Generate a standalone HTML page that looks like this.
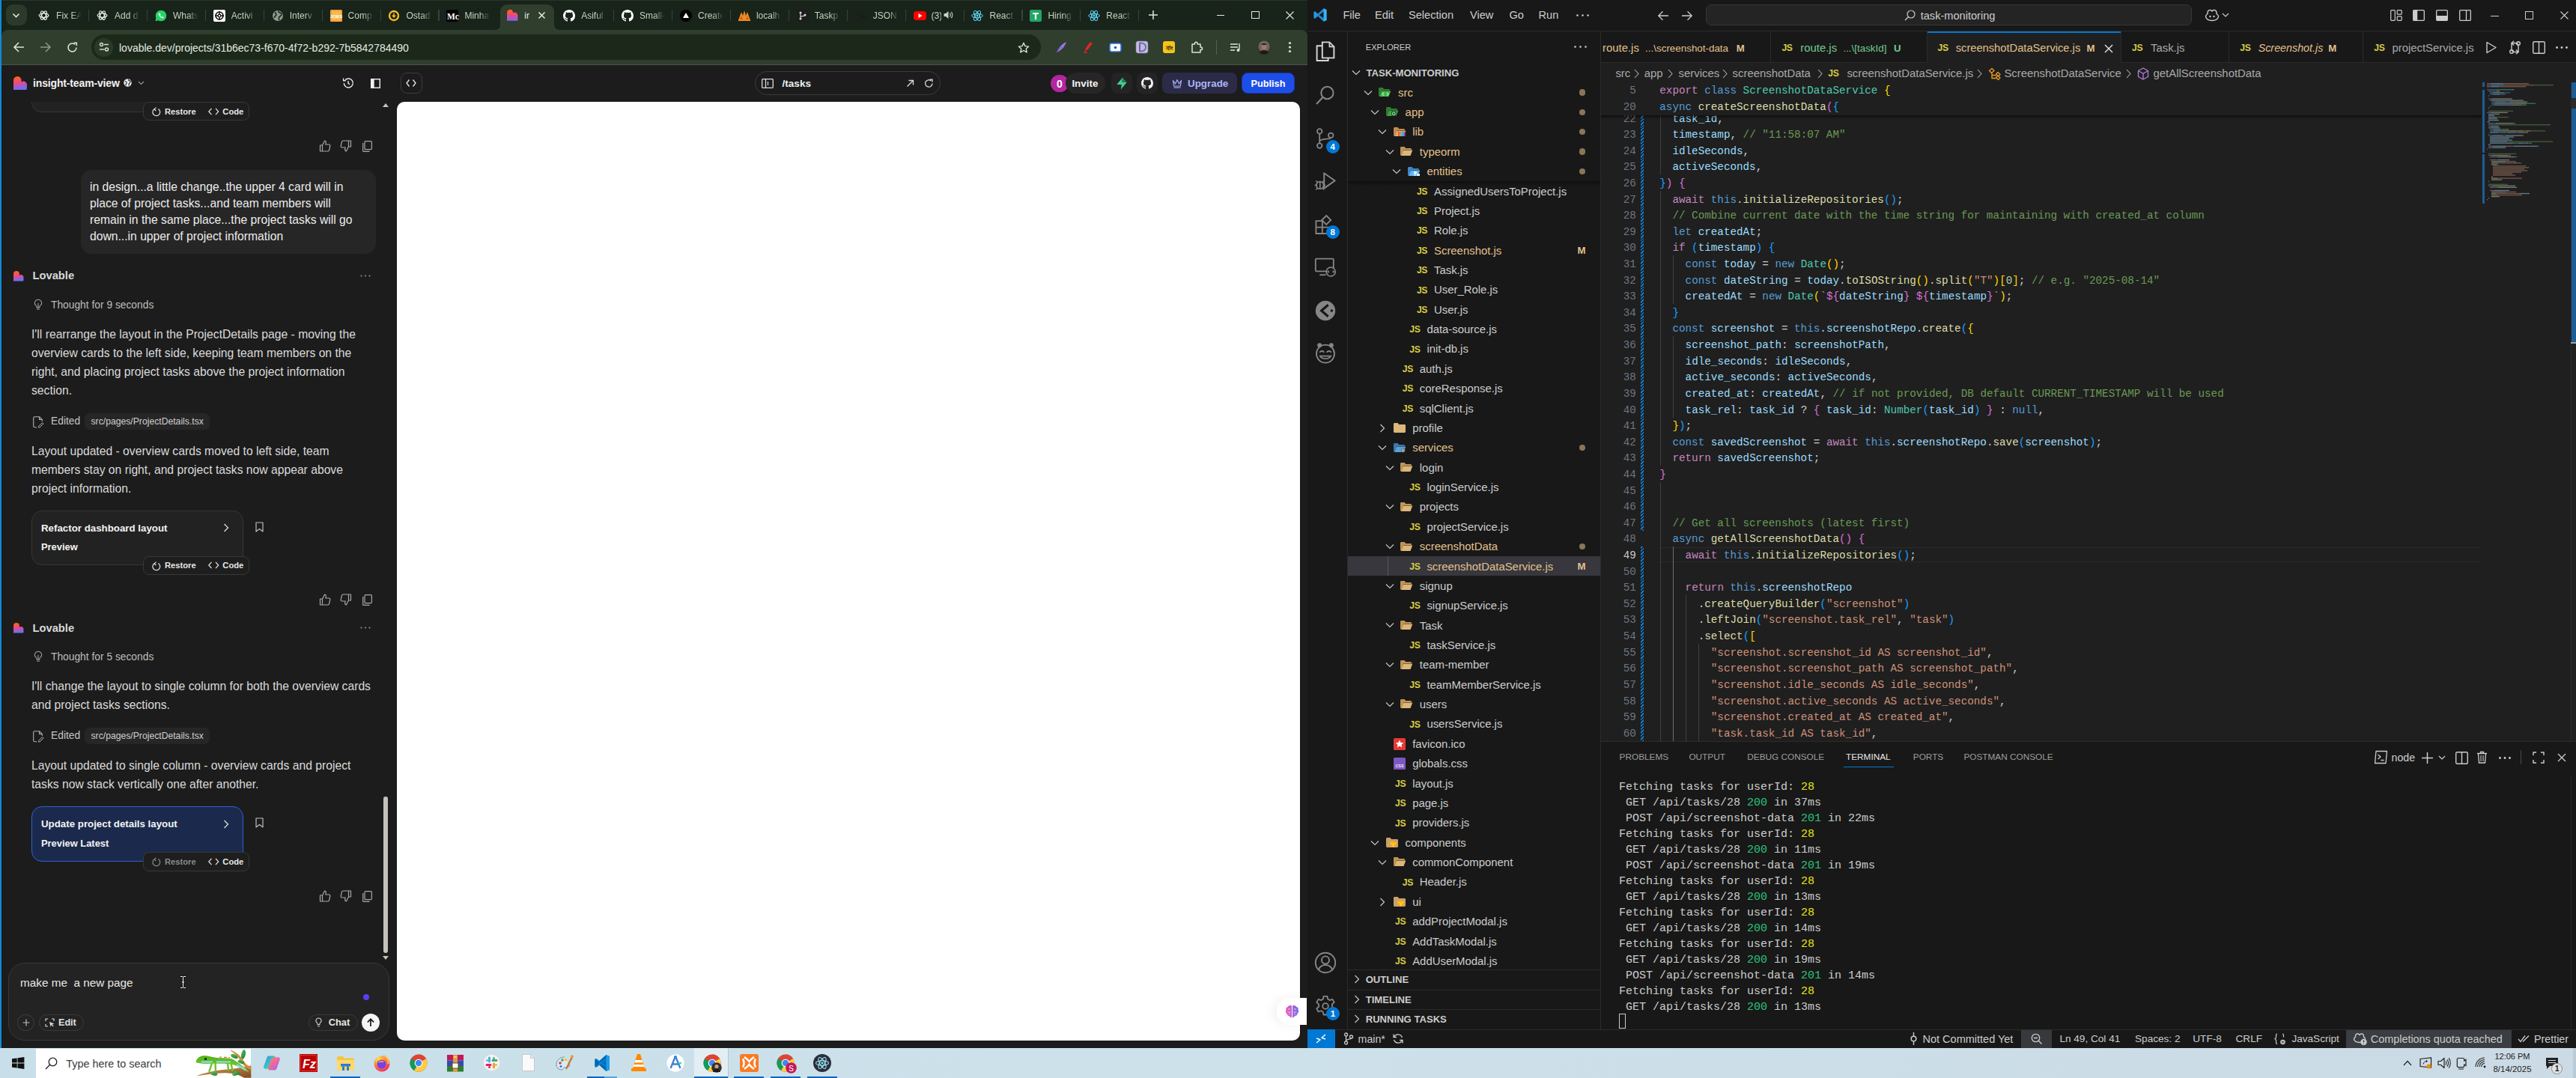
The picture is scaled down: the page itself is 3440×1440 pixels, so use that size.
<!DOCTYPE html><html><head><meta charset="utf-8"><style>*{box-sizing:border-box}
html,body{margin:0;padding:0}
body{width:3440px;height:1440px;overflow:hidden;position:relative;background:#1c1c1c;font-family:"Liberation Sans",sans-serif;color:#ddd}
.a{position:absolute}
.nw{white-space:nowrap}
svg{display:block;overflow:visible}
</style></head><body><div class="a" style="left:0.0px;top:0.0px;width:1746.0px;height:1400.0px;background:#1c1c1c"></div><div class="a" style="left:0.0px;top:0.0px;width:1746.0px;height:40.0px;background:#18231a"></div><div class="a" style="left:0.0px;top:0.0px;width:1746.0px;height:1.0px;background:#2a332a"></div><div class="a" style="left:8.0px;top:6.0px;width:27.5px;height:28.0px;background:#2b3a2a;border-radius:9px"></div><svg class="a" style="left:15.0px;top:14.0px;" width="13" height="13" viewBox="0 0 13 13"><path d="M2.5 4.5 L6.5 8.5 L10.5 4.5" fill="none" stroke="#dfe8da" stroke-width="1.6"/></svg><svg class="a" style="left:51.0px;top:12.5px;" width="15" height="15" viewBox="0 0 15 15"><g fill="none" stroke="#e6ece2" stroke-width="1.3"><ellipse cx="7.5" cy="7.5" rx="6.3" ry="2.8" transform="rotate(0 7.5 7.5)"/><ellipse cx="7.5" cy="7.5" rx="6.3" ry="2.8" transform="rotate(60 7.5 7.5)"/><ellipse cx="7.5" cy="7.5" rx="6.3" ry="2.8" transform="rotate(120 7.5 7.5)"/></g><circle cx="7.5" cy="7.5" r="1.2" fill="#111"/></svg><div class="a nw" style="left:75.1px;top:13.7px;font-size:12px;line-height:14px;color:#c5d3be;width:34px;overflow:hidden;-webkit-mask-image:linear-gradient(90deg,#000 60%,transparent)">Fix EA</div><div class="a" style="left:118.0px;top:12.5px;width:1.2px;height:15.5px;background:#36443a"></div><svg class="a" style="left:128.9px;top:12.5px;" width="15" height="15" viewBox="0 0 15 15"><g fill="none" stroke="#e6ece2" stroke-width="1.3"><ellipse cx="7.5" cy="7.5" rx="6.3" ry="2.8" transform="rotate(0 7.5 7.5)"/><ellipse cx="7.5" cy="7.5" rx="6.3" ry="2.8" transform="rotate(60 7.5 7.5)"/><ellipse cx="7.5" cy="7.5" rx="6.3" ry="2.8" transform="rotate(120 7.5 7.5)"/></g><circle cx="7.5" cy="7.5" r="1.2" fill="#111"/></svg><div class="a nw" style="left:153.0px;top:13.7px;font-size:12px;line-height:14px;color:#c5d3be;width:34px;overflow:hidden;-webkit-mask-image:linear-gradient(90deg,#000 60%,transparent)">Add d</div><div class="a" style="left:195.9px;top:12.5px;width:1.2px;height:15.5px;background:#36443a"></div><svg class="a" style="left:206.8px;top:12.5px;" width="16" height="16" viewBox="0 0 16 16"><circle cx="8" cy="8" r="7.3" fill="#25d366"/><path d="M1.6 15 L2.8 11" stroke="#25d366" stroke-width="2.5"/><path d="M5.3 4.5c-.6.4-1 1.5-.3 2.8 1 1.9 2.6 3.3 4.3 3.9 1.1.4 2 0 2.3-.6l.2-.7-1.6-.8-.7.8c-1-.4-2-1.4-2.5-2.4l.6-.7-.7-1.7z" fill="#fff"/></svg><div class="a nw" style="left:230.9px;top:13.7px;font-size:12px;line-height:14px;color:#c5d3be;width:34px;overflow:hidden;-webkit-mask-image:linear-gradient(90deg,#000 60%,transparent)">Whats</div><div class="a" style="left:273.8px;top:12.5px;width:1.2px;height:15.5px;background:#36443a"></div><svg class="a" style="left:284.7px;top:12.5px;" width="16" height="16" viewBox="0 0 16 16"><rect x="0" y="0" width="16" height="16" rx="2" fill="#fff"/><circle cx="8" cy="8" r="5" fill="none" stroke="#111" stroke-width="1.6"/><path d="M8 2v12M2 8h12" stroke="#111" stroke-width="1.4"/><circle cx="8" cy="8" r="1.8" fill="#fff" stroke="#111" stroke-width="1.2"/></svg><div class="a nw" style="left:308.8px;top:13.7px;font-size:12px;line-height:14px;color:#c5d3be;width:34px;overflow:hidden;-webkit-mask-image:linear-gradient(90deg,#000 60%,transparent)">Activi</div><div class="a" style="left:351.7px;top:12.5px;width:1.2px;height:15.5px;background:#36443a"></div><svg class="a" style="left:362.6px;top:12.5px;" width="16" height="16" viewBox="0 0 16 16"><circle cx="8" cy="8" r="7" fill="#8e9a8c"/><path d="M4 3.5c1.5 1 2.5 2.5 1.5 4S3 9 3.5 11M9 1.5c-.5 1.5 1 2.5 2.5 2.5s2 2 1 3.5-2.5 1-3 3 .5 3.5.5 3.5" fill="none" stroke="#18231a" stroke-width="1.6"/></svg><div class="a nw" style="left:386.7px;top:13.7px;font-size:12px;line-height:14px;color:#c5d3be;width:34px;overflow:hidden;-webkit-mask-image:linear-gradient(90deg,#000 60%,transparent)">Interv</div><div class="a" style="left:429.6px;top:12.5px;width:1.2px;height:15.5px;background:#36443a"></div><svg class="a" style="left:440.5px;top:12.5px;" width="16" height="16" viewBox="0 0 16 16"><rect width="16" height="16" rx="1.5" fill="#f0a43a"/><rect x="2" y="2" width="12" height="12" fill="#f6b94f"/><text x="8" y="10.5" font-size="6" font-family="Liberation Sans" font-weight="bold" text-anchor="middle" fill="#fff">JOBS</text></svg><div class="a nw" style="left:464.6px;top:13.7px;font-size:12px;line-height:14px;color:#c5d3be;width:34px;overflow:hidden;-webkit-mask-image:linear-gradient(90deg,#000 60%,transparent)">Comp</div><div class="a" style="left:507.5px;top:12.5px;width:1.2px;height:15.5px;background:#36443a"></div><svg class="a" style="left:518.4px;top:12.5px;" width="16" height="16" viewBox="0 0 16 16"><circle cx="8" cy="8" r="7.2" fill="#f4c025"/><circle cx="8" cy="8" r="4.8" fill="#1b1b1b"/><path d="M8 4.5v5M5.8 7.5 8 9.8l2.2-2.3" fill="none" stroke="#f4c025" stroke-width="1.5"/></svg><div class="a nw" style="left:542.5px;top:13.7px;font-size:12px;line-height:14px;color:#c5d3be;width:34px;overflow:hidden;-webkit-mask-image:linear-gradient(90deg,#000 60%,transparent)">Ostad</div><div class="a" style="left:585.4px;top:12.5px;width:1.2px;height:15.5px;background:#36443a"></div><svg class="a" style="left:596.3px;top:12.5px;" width="16" height="16" viewBox="0 0 16 16"><rect width="16" height="16" rx="2" fill="#000"/><text x="1" y="12.5" font-size="11.5" font-family="Liberation Serif" font-weight="bold" fill="#fff">Mc</text></svg><div class="a nw" style="left:620.4px;top:13.7px;font-size:12px;line-height:14px;color:#c5d3be;width:34px;overflow:hidden;-webkit-mask-image:linear-gradient(90deg,#000 60%,transparent)">Minha</div><div class="a" style="left:668px;top:6px;width:72px;height:35px;background:#2f3e2d;border-radius:9px 9px 0 0"></div><svg class="a" style="left:660.0px;top:32.0px;" width="8" height="8" viewBox="0 0 8 8"><path d="M0 8 Q8 8 8 0 V8z" fill="#2f3e2d"/></svg><svg class="a" style="left:740.0px;top:32.0px;" width="8" height="8" viewBox="0 0 8 8"><path d="M8 8 Q0 8 0 0 V8z" fill="#2f3e2d"/></svg><svg class="a" style="left:675.5px;top:12.0px;" width="17" height="17" viewBox="0 0 17 17"><defs><linearGradient id="lvg" x1="0" y1="0" x2="0" y2="1"><stop offset="0" stop-color="#ff6a00"/><stop offset=".45" stop-color="#f2477a"/><stop offset="1" stop-color="#7b63f5"/></linearGradient></defs><path d="M1 5.5C1 2.5 3 .8 5.3.8 7.7.8 9.2 2.8 9.2 5.2c.5-.4 1.3-.6 2-.6 2.3 0 4.3 1.9 4.3 4.6v6.5H1z" fill="url(#lvg)"/></svg><div class="a nw" style="left:700.3px;top:14.7px;font-size:12.00px;line-height:1;color:#e6ede2;">ir</div><svg class="a" style="left:717.4px;top:13.5px;" width="13" height="13" viewBox="0 0 13 13"><path d="M2.5 2.5l8 8M10.5 2.5l-8 8" stroke="#e6ede2" stroke-width="1.5"/></svg><svg class="a" style="left:752.1px;top:12.5px;" width="16" height="16" viewBox="0 0 16 16"><path fill="#fff" d="M8 0C3.58 0 0 3.58 0 8c0 3.54 2.29 6.53 5.47 7.59.4.07.55-.17.55-.38 0-.19-.01-.82-.01-1.49-2.01.37-2.53-.49-2.69-.94-.09-.23-.48-.94-.82-1.13-.28-.15-.68-.52-.01-.53.63-.01 1.08.58 1.23.82.72 1.21 1.87.87 2.33.66.07-.52.28-.87.51-1.07-1.78-.2-3.64-.89-3.64-3.95 0-.87.31-1.59.82-2.15-.08-.2-.36-1.02.08-2.12 0 0 .67-.21 2.2.82.64-.18 1.32-.27 2-.27.68 0 1.36.09 2 .27 1.53-1.04 2.2-.82 2.2-.82.44 1.1.16 1.92.08 2.12.51.56.82 1.27.82 2.15 0 3.07-1.87 3.75-3.65 3.95.29.25.54.73.54 1.48 0 1.07-.01 1.93-.01 2.2 0 .21.15.46.55.38A8.013 8.013 0 0016 8c0-4.42-3.58-8-8-8z"/></svg><div class="a nw" style="left:776.2px;top:13.7px;font-size:12px;line-height:14px;color:#c5d3be;width:34px;overflow:hidden;-webkit-mask-image:linear-gradient(90deg,#000 60%,transparent)">Asiful</div><div class="a" style="left:819.1px;top:12.5px;width:1.2px;height:15.5px;background:#36443a"></div><svg class="a" style="left:830.0px;top:12.5px;" width="16" height="16" viewBox="0 0 16 16"><path fill="#fff" d="M8 0C3.58 0 0 3.58 0 8c0 3.54 2.29 6.53 5.47 7.59.4.07.55-.17.55-.38 0-.19-.01-.82-.01-1.49-2.01.37-2.53-.49-2.69-.94-.09-.23-.48-.94-.82-1.13-.28-.15-.68-.52-.01-.53.63-.01 1.08.58 1.23.82.72 1.21 1.87.87 2.33.66.07-.52.28-.87.51-1.07-1.78-.2-3.64-.89-3.64-3.95 0-.87.31-1.59.82-2.15-.08-.2-.36-1.02.08-2.12 0 0 .67-.21 2.2.82.64-.18 1.32-.27 2-.27.68 0 1.36.09 2 .27 1.53-1.04 2.2-.82 2.2-.82.44 1.1.16 1.92.08 2.12.51.56.82 1.27.82 2.15 0 3.07-1.87 3.75-3.65 3.95.29.25.54.73.54 1.48 0 1.07-.01 1.93-.01 2.2 0 .21.15.46.55.38A8.013 8.013 0 0016 8c0-4.42-3.58-8-8-8z"/></svg><div class="a nw" style="left:854.1px;top:13.7px;font-size:12px;line-height:14px;color:#c5d3be;width:34px;overflow:hidden;-webkit-mask-image:linear-gradient(90deg,#000 60%,transparent)">Small-</div><div class="a" style="left:897.0px;top:12.5px;width:1.2px;height:15.5px;background:#36443a"></div><svg class="a" style="left:907.9px;top:12.5px;" width="16" height="16" viewBox="0 0 16 16"><circle cx="8" cy="8" r="8" fill="#000"/><path d="M8 4 L12 11 H4z" fill="#fff"/></svg><div class="a nw" style="left:932.0px;top:13.7px;font-size:12px;line-height:14px;color:#c5d3be;width:34px;overflow:hidden;-webkit-mask-image:linear-gradient(90deg,#000 60%,transparent)">Create</div><div class="a" style="left:974.9px;top:12.5px;width:1.2px;height:15.5px;background:#36443a"></div><svg class="a" style="left:985.8px;top:12.5px;" width="16" height="16" viewBox="0 0 16 16"><path d="M0 14 L4 3 L6 8 L8 1 L10 8 L12 3 L16 14z" fill="#f08a24"/><path d="M2 14 L4 8 L6 14M10 14 L12 8 L14 14" fill="#c65a10"/><rect x="0" y="13" width="16" height="2" fill="#f08a24"/></svg><div class="a nw" style="left:1009.9px;top:13.7px;font-size:12px;line-height:14px;color:#c5d3be;width:34px;overflow:hidden;-webkit-mask-image:linear-gradient(90deg,#000 60%,transparent)">localh</div><div class="a" style="left:1052.8px;top:12.5px;width:1.2px;height:15.5px;background:#36443a"></div><svg class="a" style="left:1063.7px;top:12.5px;" width="16" height="16" viewBox="0 0 16 16"><rect width="16" height="16" rx="3" fill="#1d1d1d"/><circle cx="5" cy="4" r="1.5" fill="#ddd"/><circle cx="5" cy="12" r="1.5" fill="#ddd"/><circle cx="11" cy="7" r="1.5" fill="#ddd"/><path d="M5 5.5v5M5 10c0-2 6-1 6-3" fill="none" stroke="#ddd" stroke-width="1.2"/></svg><div class="a nw" style="left:1087.8px;top:13.7px;font-size:12px;line-height:14px;color:#c5d3be;width:34px;overflow:hidden;-webkit-mask-image:linear-gradient(90deg,#000 60%,transparent)">Taskp</div><div class="a" style="left:1130.7px;top:12.5px;width:1.2px;height:15.5px;background:#36443a"></div><svg class="a" style="left:1141.6px;top:12.5px;" width="18" height="16" viewBox="0 0 18 16"><text x="0" y="14" font-size="15" font-family="Liberation Sans" fill="#111" stroke="#2b2b2b" stroke-width=".4">JF</text></svg><div class="a nw" style="left:1165.7px;top:13.7px;font-size:12px;line-height:14px;color:#c5d3be;width:34px;overflow:hidden;-webkit-mask-image:linear-gradient(90deg,#000 60%,transparent)">JSON</div><div class="a" style="left:1208.6px;top:12.5px;width:1.2px;height:15.5px;background:#36443a"></div><svg class="a" style="left:1219.5px;top:12.5px;" width="17" height="16" viewBox="0 0 17 16"><rect x="0" y="2" width="17" height="12" rx="3.5" fill="#ff0000"/><path d="M6.5 5v6l5-3z" fill="#fff"/></svg><div class="a nw" style="left:1243.6px;top:13.7px;font-size:12px;line-height:14px;color:#c5d3be;width:13px;overflow:hidden">(3)</div><svg class="a" style="left:1258.6px;top:13.0px;" width="14" height="14" viewBox="0 0 14 14"><path d="M1.5 5h2.5l3.5-3v10l-3.5-3H1.5z" fill="#c5d3be"/><path d="M9.5 4.5c1 .8 1 4.2 0 5M11.3 3c2 1.5 2 6.5 0 8" fill="none" stroke="#c5d3be" stroke-width="1.1"/></svg><div class="a" style="left:1286.5px;top:12.5px;width:1.2px;height:15.5px;background:#36443a"></div><svg class="a" style="left:1297.4px;top:12.5px;" width="16" height="16" viewBox="0 0 16 16"><g fill="none" stroke="#61dafb" stroke-width="1"><ellipse cx="8" cy="8" rx="7.3" ry="2.8"/><ellipse cx="8" cy="8" rx="7.3" ry="2.8" transform="rotate(60 8 8)"/><ellipse cx="8" cy="8" rx="7.3" ry="2.8" transform="rotate(120 8 8)"/></g><circle cx="8" cy="8" r="1.4" fill="#61dafb"/></svg><div class="a nw" style="left:1321.5px;top:13.7px;font-size:12px;line-height:14px;color:#c5d3be;width:34px;overflow:hidden;-webkit-mask-image:linear-gradient(90deg,#000 60%,transparent)">React</div><div class="a" style="left:1364.4px;top:12.5px;width:1.2px;height:15.5px;background:#36443a"></div><svg class="a" style="left:1375.3px;top:12.5px;" width="16" height="16" viewBox="0 0 16 16"><rect width="16" height="16" rx="2" fill="#23a566"/><path d="M4 5h8M8 5v8" stroke="#fff" stroke-width="2.2"/></svg><div class="a nw" style="left:1399.4px;top:13.7px;font-size:12px;line-height:14px;color:#c5d3be;width:34px;overflow:hidden;-webkit-mask-image:linear-gradient(90deg,#000 60%,transparent)">Hiring</div><div class="a" style="left:1442.3px;top:12.5px;width:1.2px;height:15.5px;background:#36443a"></div><svg class="a" style="left:1453.2px;top:12.5px;" width="16" height="16" viewBox="0 0 16 16"><g fill="none" stroke="#61dafb" stroke-width="1"><ellipse cx="8" cy="8" rx="7.3" ry="2.8"/><ellipse cx="8" cy="8" rx="7.3" ry="2.8" transform="rotate(60 8 8)"/><ellipse cx="8" cy="8" rx="7.3" ry="2.8" transform="rotate(120 8 8)"/></g><circle cx="8" cy="8" r="1.4" fill="#61dafb"/></svg><div class="a nw" style="left:1477.3px;top:13.7px;font-size:12px;line-height:14px;color:#c5d3be;width:34px;overflow:hidden;-webkit-mask-image:linear-gradient(90deg,#000 60%,transparent)">React</div><div class="a" style="left:1520.2px;top:12.5px;width:1.2px;height:15.5px;background:#36443a"></div><svg class="a" style="left:1533.0px;top:13.0px;" width="14" height="14" viewBox="0 0 14 14"><path d="M7 1v12M1 7h12" stroke="#dfe8da" stroke-width="1.5"/></svg><div class="a" style="left:1624.5px;top:20.0px;width:10.5px;height:1.0px;background:#e8e8e8"></div><div class="a" style="left:1671.0px;top:14.7px;width:10.5px;height:10.5px;border:1px solid #e8e8e8"></div><svg class="a" style="left:1716.5px;top:14.5px;" width="11" height="11" viewBox="0 0 11 11"><path d="M.5 .5l10 10M10.5 .5l-10 10" stroke="#e8e8e8" stroke-width="1.1"/></svg><div class="a" style="left:2.0px;top:40.0px;width:1744.0px;height:46.0px;background:#2f3e2d;border-radius:8px 8px 0 0"></div><div class="a" style="left:2.0px;top:85.6px;width:1744.0px;height:1.0px;background:#4b5649"></div><div class="a" style="left:0.0px;top:0.0px;width:2.0px;height:1400.0px;background:#138ad6"></div><svg class="a" style="left:17.0px;top:55.0px;" width="16" height="16" viewBox="0 0 16 16"><path d="M15 8H2M8 2L2 8l6 6" fill="none" stroke="#dbe5d6" stroke-width="1.6"/></svg><svg class="a" style="left:52.5px;top:55.0px;" width="16" height="16" viewBox="0 0 16 16"><path d="M1 8h13M8 2l6 6-6 6" fill="none" stroke="#8a988a" stroke-width="1.6"/></svg><svg class="a" style="left:89.0px;top:56.0px;" width="15" height="15" viewBox="0 0 15 15"><path d="M13 7.5A5.5 5.5 0 1 1 11.2 3.4" fill="none" stroke="#dbe5d6" stroke-width="1.6"/><path d="M9.5 1.3h3.8v3.8" fill="none" stroke="#dbe5d6" stroke-width="1.6"/></svg><div class="a" style="left:122.0px;top:46.0px;width:1268.0px;height:34.0px;background:#1b281a;border-radius:17px"></div><div class="a" style="left:126.0px;top:51.0px;width:24.5px;height:24.5px;background:#2a3a29;border-radius:50%"></div><svg class="a" style="left:131.5px;top:56.0px;" width="14" height="14" viewBox="0 0 14 14"><circle cx="3.5" cy="3.5" r="2" fill="none" stroke="#dbe5d6" stroke-width="1.4"/><path d="M7 3.5h6" stroke="#dbe5d6" stroke-width="1.4"/><circle cx="10.5" cy="10" r="2" fill="none" stroke="#dbe5d6" stroke-width="1.4"/><path d="M1 10h6.5" stroke="#dbe5d6" stroke-width="1.4"/></svg><div class="a nw" style="left:159.0px;top:56.5px;font-size:14.00px;line-height:1;color:#e4ebe0;">lovable.dev/projects/31b6ec73-f670-4f72-b292-7b5842784490</div><svg class="a" style="left:1359.0px;top:55.5px;" width="16" height="16" viewBox="0 0 16 16"><path d="M8 1.3l2 4.3 4.7.5-3.5 3.2 1 4.6L8 11.5l-4.2 2.4 1-4.6L1.3 6.1 6 5.6z" fill="none" stroke="#dbe5d6" stroke-width="1.4" stroke-linejoin="round"/></svg><svg class="a" style="left:1409.0px;top:55.0px;" width="16" height="16" viewBox="0 0 16 16"><path d="M2 15C4 10 8 4 15 1 13 7 9 12 2 15z" fill="#9a78e6"/><path d="M2 15 9 7" stroke="#6a4bc4" stroke-width="1"/></svg><svg class="a" style="left:1445.0px;top:55.0px;" width="16" height="16" viewBox="0 0 16 16"><path d="M3 14l2-5 6-8 3 2-6 8z" fill="#e02424"/><path d="M2 15h5" stroke="#e02424" stroke-width="1.5"/></svg><svg class="a" style="left:1480.5px;top:56.0px;" width="17" height="15" viewBox="0 0 17 15"><rect x="1" y="2" width="15" height="11" rx="2.2" fill="#fff" stroke="#2f6fe4" stroke-width="1.6"/><circle cx="8.5" cy="7.5" r="1.8" fill="#3f4fb8"/></svg><svg class="a" style="left:1517.0px;top:55.0px;" width="16" height="16" viewBox="0 0 16 16"><rect x="0" y="0" width="16" height="16" rx="3" fill="#c9b7d6" stroke="#8f88b0" stroke-width=".6"/><path d="M5 2.5h2.5a5.5 5.5 0 0 1 0 11H5z" fill="none" stroke="#4a64b8" stroke-width="1.5"/><path d="M5 2.5v11" stroke="#4a64b8" stroke-width="1.5"/></svg><svg class="a" style="left:1552.5px;top:55.0px;" width="16" height="16" viewBox="0 0 16 16"><rect width="16" height="16" rx="3" fill="#f5c518"/><text x="8" y="11.5" font-size="8" text-anchor="middle" font-family="Liberation Sans" font-weight="bold" fill="#222">বাং</text></svg><svg class="a" style="left:1589.5px;top:55.0px;" width="17" height="17" viewBox="0 0 17 17"><path d="M2 4h3.5V3a1.8 1.8 0 0 1 3.6 0v1H13v4h.8a1.8 1.8 0 0 1 0 3.6H13V15H2z" fill="none" stroke="#dbe5d6" stroke-width="1.5" stroke-linejoin="round"/></svg><div class="a" style="left:1623.5px;top:53.0px;width:1.0px;height:20.0px;background:#53604f"></div><svg class="a" style="left:1642.0px;top:56.0px;" width="17" height="15" viewBox="0 0 17 15"><path d="M1 3h10M1 7h10M1 11h6" stroke="#dbe5d6" stroke-width="1.5"/><path d="M13 2v8" stroke="#dbe5d6" stroke-width="1.4"/><circle cx="11.5" cy="11" r="2" fill="#dbe5d6"/></svg><svg class="a" style="left:1677.5px;top:53.0px;" width="20" height="20" viewBox="0 0 20 20"><defs><clipPath id="avc"><circle cx="10" cy="10" r="9.8"/></clipPath></defs><g clip-path="url(#avc)"><rect width="20" height="20" fill="#3b3833"/><circle cx="10" cy="9" r="7.5" fill="#6e695f"/><ellipse cx="10" cy="9.5" rx="3.3" ry="4" fill="#9c7b63"/><path d="M6.5 7c.5-3 6.5-3 7 0" fill="#2a2520"/><path d="M3 20c.5-4 3.5-6 7-6s6.5 2 7 6z" fill="#1e1c1a"/></g></svg><svg class="a" style="left:1720.0px;top:55.0px;" width="5" height="16" viewBox="0 0 5 16"><circle cx="2.5" cy="2.5" r="1.6" fill="#dbe5d6"/><circle cx="2.5" cy="8" r="1.6" fill="#dbe5d6"/><circle cx="2.5" cy="13.5" r="1.6" fill="#dbe5d6"/></svg><svg class="a" style="left:18.0px;top:101.5px" width="18" height="18" viewBox="0 0 18 18"><defs><linearGradient id="lgh" x1="0" y1="0" x2="0.2" y2="1"><stop offset="0" stop-color="#ff6d00"/><stop offset=".5" stop-color="#f0487c"/><stop offset="1" stop-color="#6f6cf7"/></linearGradient></defs><path d="M0 18V5.3A5.3 5.3 0 0 1 10.6 5.3V7.6A4.6 4.6 0 0 1 18 11.2V16.2A1.8 1.8 0 0 1 16.2 18H1.2z" fill="url(#lgh)"/></svg><div class="a nw" style="left:44.0px;top:104.4px;font-size:14.00px;line-height:1;color:#f2f2f2;font-weight:bold;letter-spacing:-0.15px">insight-team-view</div><svg class="a" style="left:164.5px;top:105.0px;" width="11" height="11" viewBox="0 0 11 11"><circle cx="5.5" cy="5.5" r="5.2" fill="#eaeaea"/><path d="M2 3.5c1.5.3 2.5 1.3 2 2.6S2.5 7.5 3 9.5M6.5 1c-.4 1 .6 1.8 1.6 1.8s1.4 1.2.8 2.2-1.5.8-1.8 2 .4 2.6.4 2.6" fill="none" stroke="#1c1c1c" stroke-width="1.1"/></svg><svg class="a" style="left:183.5px;top:107.5px;" width="9" height="6" viewBox="0 0 9 6"><path d="M.8 .8 4.5 4.5 8.2 .8" fill="none" stroke="#9a9a9a" stroke-width="1.2"/></svg><svg class="a" style="left:457.0px;top:103.0px;" width="16" height="16" viewBox="0 0 16 16"><path d="M2.3 8A6 6 0 1 0 4 3.8" fill="none" stroke="#e8e8e8" stroke-width="1.4"/><path d="M1.6 1.6v3.2h3.2" fill="none" stroke="#e8e8e8" stroke-width="1.4"/><path d="M8 5v3.3l2 1.5" fill="none" stroke="#e8e8e8" stroke-width="1.4"/></svg><svg class="a" style="left:494.5px;top:104.5px;" width="13" height="13" viewBox="0 0 13 13"><rect x=".7" y=".7" width="11.6" height="11.6" fill="none" stroke="#f0f0f0" stroke-width="1.4"/><rect x=".7" y=".7" width="4" height="11.6" fill="#f0f0f0"/></svg><div class="a" style="left:535.0px;top:97.0px;width:28.5px;height:28.0px;border:1px solid #3d3d3d;border-radius:8px"></div><svg class="a" style="left:542.0px;top:105.0px;" width="14" height="12" viewBox="0 0 14 12"><path d="M4.5 1.5 1 6l3.5 4.5M9.5 1.5 13 6l-3.5 4.5" fill="none" stroke="#e8e8e8" stroke-width="1.3"/></svg><div class="a" style="left:1007.5px;top:95.0px;width:248.5px;height:31.5px;border:1px solid #3a3a3a;border-radius:16px"></div><svg class="a" style="left:1016.5px;top:104.5px;" width="16" height="13" viewBox="0 0 16 13"><rect x=".7" y=".7" width="14.6" height="11.6" rx="1" fill="none" stroke="#dcdcdc" stroke-width="1.3"/><path d="M5.5 1v11" stroke="#dcdcdc" stroke-width="1.3"/><path d="M8.5 4v5" stroke="#dcdcdc" stroke-width="1.2"/></svg><div class="a nw" style="left:1044.5px;top:104.9px;font-size:13.60px;line-height:1;color:#f0f0f0;font-weight:bold;">/tasks</div><svg class="a" style="left:1209.5px;top:105.5px;" width="11" height="11" viewBox="0 0 11 11"><path d="M1.5 9.5 9.5 1.5M3.5 1.5h6v6" fill="none" stroke="#dcdcdc" stroke-width="1.3"/></svg><svg class="a" style="left:1233.5px;top:104.5px;" width="13" height="13" viewBox="0 0 13 13"><path d="M11 6.5A4.7 4.7 0 1 1 9.5 3" fill="none" stroke="#dcdcdc" stroke-width="1.3"/><path d="M7.8 1.2h3.2v3.2" fill="none" stroke="#dcdcdc" stroke-width="1.3"/></svg><div class="a" style="left:1403.3px;top:99.5px;width:23.5px;height:23.5px;background:#b3269e;border-radius:50%"></div><div class="a nw" style="left:1411.0px;top:104.5px;font-size:14.00px;line-height:1;color:#fff;font-weight:bold;">0</div><div class="a" style="left:1422.6px;top:97.2px;width:53.7px;height:27.5px;background:#262626;border-radius:14px"></div><div class="a nw" style="left:1431.4px;top:104.8px;font-size:13.40px;line-height:1;color:#f4f4f4;font-weight:bold;">Invite</div><div class="a" style="left:1484.2px;top:97.2px;width:27.4px;height:27.5px;background:#242424;border-radius:8px"></div><svg class="a" style="left:1490.0px;top:102.5px;" width="16" height="17" viewBox="0 0 16 17"><path d="M9.2 .5 1.3 10h6.5L6.8 16.5 14.7 7H8.2z" fill="#3ecf8e"/><path d="M9.2 .5 8.2 7h6.5z" fill="#2fae74" opacity=".6"/></svg><div class="a" style="left:1518.0px;top:97.2px;width:27.6px;height:27.5px;background:#242424;border-radius:8px"></div><svg class="a" style="left:1523.8px;top:103.0px;" width="16" height="16" viewBox="0 0 16 16"><path fill="#f2f2f2" d="M8 0C3.58 0 0 3.58 0 8c0 3.54 2.29 6.53 5.47 7.59.4.07.55-.17.55-.38 0-.19-.01-.82-.01-1.49-2.01.37-2.53-.49-2.69-.94-.09-.23-.48-.94-.82-1.13-.28-.15-.68-.52-.01-.53.63-.01 1.08.58 1.23.82.72 1.21 1.87.87 2.33.66.07-.52.28-.87.51-1.07-1.78-.2-3.64-.89-3.64-3.95 0-.87.31-1.59.82-2.15-.08-.2-.36-1.02.08-2.12 0 0 .67-.21 2.2.82.64-.18 1.32-.27 2-.27.68 0 1.36.09 2 .27 1.53-1.04 2.2-.82 2.2-.82.44 1.1.16 1.920.08 2.12.51.56.82 1.27.82 2.15 0 3.07-1.870 3.75-3.65 3.95.29.25.54.73.54 1.48 0 1.07-.01 1.93-.01 2.2 0 .21.15.46.55.38A8.013 8.013 0 0016 8c0-4.42-3.58-8-8-8z"/></svg><div class="a" style="left:1552.0px;top:97.2px;width:99.8px;height:27.5px;background:#2b2b48;border-radius:8px"></div><svg class="a" style="left:1565.0px;top:103.5px;" width="14" height="15" viewBox="0 0 14 15"><path d="M1.5 3.5 4.5 8 7 2.5 9.5 8l3-4.5-1.2 7.5H2.7z" fill="none" stroke="#a8b2f5" stroke-width="1.2" stroke-linejoin="round"/><path d="M2.5 13h9" stroke="#a8b2f5" stroke-width="1.2"/></svg><div class="a nw" style="left:1586.0px;top:104.8px;font-size:13.40px;line-height:1;color:#aab4f6;font-weight:bold;">Upgrade</div><div class="a" style="left:1658.0px;top:97.2px;width:70.6px;height:27.5px;background:#1e4ee8;border:1px solid #1536b0;border-radius:8px"></div><div class="a nw" style="left:1670.6px;top:105.8px;font-size:12.70px;line-height:1;color:#ffffff;font-weight:bold;">Publish</div><div class="a" style="left:530px;top:135.7px;width:1206px;height:1254px;background:#fff;border-radius:10px"></div><div class="a" style="left:1705px;top:1333px;width:40px;height:36px;background:#fff;border-radius:18px 0 0 18px;box-shadow:-6px 0 14px rgba(0,0,0,.05)"></div><svg class="a" style="left:1715.5px;top:1342.0px;" width="19" height="19" viewBox="0 0 19 19"><defs><linearGradient id="brg" x1="0" y1="0" x2="1" y2="0"><stop offset="0" stop-color="#f25ab0"/><stop offset="1" stop-color="#6d6af5"/></linearGradient></defs><path d="M9 1.5C7 .5 4.5 1.3 3.8 3 1.8 3.3.8 5.3 1.5 7 .5 8.5.8 11 2.5 12c0 2 2 3.5 3.5 3.3C7 17.3 8.5 17.5 9 17zM10 1.5c2-1 4.5-.2 5.2 1.5 2 .3 3 2.3 2.3 4 1 1.5.7 4-1 5 0 2-2 3.5-3.5 3.3-1 2-2.5 2.2-3 1.7z" fill="url(#brg)"/><path d="M4 6h3M12 6h3M3.5 10h4M11.5 10h4M5 13.5 7 12M14 13.5 12 12" stroke="#fff" stroke-width=".9" opacity=".8"/></svg><div class="a" style="left:42.0px;top:135.5px;width:284.0px;height:14.0px;background:#222222;border:1px solid #363636;border-top:none;border-radius:0 0 14px 14px"></div><div class="a" style="left:191.0px;top:136.2px;width:142.0px;height:25.3px;background:#1e1e1e;border:1px solid #383838;border-radius:8px"></div><svg class="a" style="left:202.5px;top:143.1px;" width="11.5" height="12" viewBox="0 0 11.5 12"><path d="M3 2.8A4.9 4.9 0 1 0 8.3 2.6" fill="none" stroke="#e6e6e6" stroke-width="1.2"/><path d="M5.6 .6 3 2.9 5.4 5" fill="none" stroke="#e6e6e6" stroke-width="1.2"/></svg><div class="a nw" style="left:220.0px;top:143.5px;font-size:11.20px;line-height:1;color:#e6e6e6;font-weight:bold;">Restore</div><svg class="a" style="left:277.5px;top:143.9px;" width="14.5" height="10" viewBox="0 0 14.5 10"><path d="M4.5 .8.8 5l3.7 4.2M10 .8 13.7 5 10 9.2" fill="none" stroke="#e6e6e6" stroke-width="1.2"/></svg><div class="a nw" style="left:297.3px;top:143.5px;font-size:11.20px;line-height:1;color:#e6e6e6;font-weight:bold;">Code</div><svg class="a" style="left:426.0px;top:186.5px;" width="16" height="16" viewBox="0 0 16 16"><path d="M4.5 7v8H1.5V7zM4.5 7 7.5 1.2c1.3 0 2 .9 1.8 2.2L8.8 6h4.5c1 0 1.7.9 1.5 1.9l-1.2 5.5c-.2.9-.9 1.6-1.9 1.6H4.5" fill="none" stroke="#a8a8a8" stroke-width="1.2" stroke-linejoin="round"/></svg><svg class="a" style="left:454.0px;top:186.5px;" width="16" height="16" viewBox="0 0 16 16"><path d="M11.5 9V1h3v8zM11.5 9 8.5 14.8c-1.3 0-2-.9-1.8-2.2L7.2 10H2.7c-1 0-1.7-.9-1.5-1.9L2.4 2.6C2.6 1.7 3.3 1 4.3 1h7.2" fill="none" stroke="#a8a8a8" stroke-width="1.2" stroke-linejoin="round"/></svg><svg class="a" style="left:484.0px;top:187.5px;" width="13" height="15" viewBox="0 0 13 15"><rect x="3" y=".6" width="9.4" height="11" rx="1.2" fill="none" stroke="#a8a8a8" stroke-width="1.2"/><path d="M.7 3v10.4c0 .5.4.9.9.9h8" fill="none" stroke="#a8a8a8" stroke-width="1.2"/></svg><div class="a" style="left:108.0px;top:227.0px;width:394.0px;height:111.7px;background:#262626;border-radius:14px"></div><div class="a nw" style="left:120.0px;top:242.4px;font-size:15.70px;line-height:1;color:#ececec;">in design...a little change..the upper 4 card will in</div><div class="a nw" style="left:120.0px;top:264.3px;font-size:15.70px;line-height:1;color:#ececec;">place of project tasks...and team members will</div><div class="a nw" style="left:120.0px;top:286.2px;font-size:15.70px;line-height:1;color:#ececec;">remain in the same place...the project tasks will go</div><div class="a nw" style="left:120.0px;top:308.1px;font-size:15.70px;line-height:1;color:#ececec;">down...in upper of project information</div><svg class="a" style="left:18.0px;top:361.6px" width="13.5" height="13.5" viewBox="0 0 18 18"><defs><linearGradient id="lgc368" x1="0" y1="0" x2="0.2" y2="1"><stop offset="0" stop-color="#ff6d00"/><stop offset=".5" stop-color="#f0487c"/><stop offset="1" stop-color="#6f6cf7"/></linearGradient></defs><path d="M0 18V5.3A5.3 5.3 0 0 1 10.6 5.3V7.6A4.6 4.6 0 0 1 18 11.2V16.2A1.8 1.8 0 0 1 16.2 18H1.2z" fill="url(#lgc368)"/></svg><div class="a nw" style="left:43.6px;top:361.4px;font-size:14.70px;line-height:1;color:#d8d8d8;font-weight:bold;">Lovable</div><svg class="a" style="left:481.0px;top:367.1px;" width="14" height="3" viewBox="0 0 14 3"><circle cx="1.5" cy="1.5" r="1.1" fill="#8d8d8d"/><circle cx="7" cy="1.5" r="1.1" fill="#8d8d8d"/><circle cx="12.5" cy="1.5" r="1.1" fill="#8d8d8d"/></svg><svg class="a" style="left:44.5px;top:399.4px;" width="12" height="16" viewBox="0 0 12 16"><path d="M6 1.2a4.5 4.5 0 0 0-2.6 8.2c.5.4.8 1 .8 1.6v1.2h3.6V11c0-.6.3-1.2.8-1.6A4.5 4.5 0 0 0 6 1.2z" fill="none" stroke="#a0a0a0" stroke-width="1.1"/><path d="M4.3 14.3h3.4M6 6v6" stroke="#a0a0a0" stroke-width="1.1"/></svg><div class="a nw" style="left:68.0px;top:400.7px;font-size:13.80px;line-height:1;color:#bcbcbc;">Thought for 9 seconds</div><div class="a nw" style="left:42.0px;top:438.9px;font-size:15.70px;line-height:1;color:#dadada;">I'll rearrange the layout in the ProjectDetails page - moving the</div><div class="a nw" style="left:42.0px;top:463.9px;font-size:15.70px;line-height:1;color:#dadada;">overview cards to the left side, keeping team members on the</div><div class="a nw" style="left:42.0px;top:488.9px;font-size:15.70px;line-height:1;color:#dadada;">right, and placing project tasks above the project information</div><div class="a nw" style="left:42.0px;top:513.9px;font-size:15.70px;line-height:1;color:#dadada;">section.</div><svg class="a" style="left:44.0px;top:555.5px;" width="14" height="15" viewBox="0 0 14 15"><path d="M8.5.7H2.2c-.8 0-1.5.7-1.5 1.5v11c0 .8.7 1.5 1.5 1.5h3M8.5.7l3.8 3.8V7M8.5.7v3.8h3.8" fill="none" stroke="#b0b0b0" stroke-width="1.1"/><path d="M7.5 13.5 12.5 8.5l1.5 1.5-5 5H7.5z" fill="none" stroke="#b0b0b0" stroke-width="1"/></svg><div class="a nw" style="left:68.0px;top:556.3px;font-size:13.80px;line-height:1;color:#c4c4c4;">Edited</div><div class="a" style="left:113.0px;top:552.3px;width:167.0px;height:21.4px;background:#262626;border-radius:7px"></div><div class="a nw" style="left:121.5px;top:557.1px;font-size:12.20px;line-height:1;color:#cfcfcf;">src/pages/ProjectDetails.tsx</div><div class="a nw" style="left:42.0px;top:595.0px;font-size:15.70px;line-height:1;color:#dadada;">Layout updated - overview cards moved to left side, team</div><div class="a nw" style="left:42.0px;top:620.0px;font-size:15.70px;line-height:1;color:#dadada;">members stay on right, and project tasks now appear above</div><div class="a nw" style="left:42.0px;top:645.0px;font-size:15.70px;line-height:1;color:#dadada;">project information.</div><div class="a" style="left:42.0px;top:681.5px;width:283.4px;height:73.1px;background:#222222;border:1px solid #363636;border-radius:14px"></div><div class="a nw" style="left:55.0px;top:698.5px;font-size:13.30px;line-height:1;color:#f3f3f3;font-weight:bold;">Refactor dashboard layout</div><div class="a nw" style="left:55.0px;top:725.0px;font-size:12.90px;line-height:1;color:#f3f3f3;font-weight:bold;">Preview</div><svg class="a" style="left:298.0px;top:699.0px;" width="8" height="12" viewBox="0 0 8 12"><path d="M1.5 1 6.5 6l-5 5" fill="none" stroke="#dedede" stroke-width="1.3"/></svg><svg class="a" style="left:340.5px;top:696.5px;" width="11" height="14" viewBox="0 0 11 14"><path d="M1 1h9v12L5.5 9.5 1 13z" fill="none" stroke="#bdbdbd" stroke-width="1.2" stroke-linejoin="round"/></svg><div class="a" style="left:191.0px;top:742.6px;width:142.0px;height:25.3px;background:#1e1e1e;border:1px solid #383838;border-radius:8px"></div><svg class="a" style="left:202.5px;top:749.5px;" width="11.5" height="12" viewBox="0 0 11.5 12"><path d="M3 2.8A4.9 4.9 0 1 0 8.3 2.6" fill="none" stroke="#e6e6e6" stroke-width="1.2"/><path d="M5.6 .6 3 2.9 5.4 5" fill="none" stroke="#e6e6e6" stroke-width="1.2"/></svg><div class="a nw" style="left:220.0px;top:749.9px;font-size:11.20px;line-height:1;color:#e6e6e6;font-weight:bold;">Restore</div><svg class="a" style="left:277.5px;top:750.3px;" width="14.5" height="10" viewBox="0 0 14.5 10"><path d="M4.5 .8.8 5l3.7 4.2M10 .8 13.7 5 10 9.2" fill="none" stroke="#e6e6e6" stroke-width="1.2"/></svg><div class="a nw" style="left:297.3px;top:749.9px;font-size:11.20px;line-height:1;color:#e6e6e6;font-weight:bold;">Code</div><svg class="a" style="left:426.0px;top:793.0px;" width="16" height="16" viewBox="0 0 16 16"><path d="M4.5 7v8H1.5V7zM4.5 7 7.5 1.2c1.3 0 2 .9 1.8 2.2L8.8 6h4.5c1 0 1.7.9 1.5 1.9l-1.2 5.5c-.2.9-.9 1.6-1.9 1.6H4.5" fill="none" stroke="#a8a8a8" stroke-width="1.2" stroke-linejoin="round"/></svg><svg class="a" style="left:454.0px;top:793.0px;" width="16" height="16" viewBox="0 0 16 16"><path d="M11.5 9V1h3v8zM11.5 9 8.5 14.8c-1.3 0-2-.9-1.8-2.2L7.2 10H2.7c-1 0-1.7-.9-1.5-1.9L2.4 2.6C2.6 1.7 3.3 1 4.3 1h7.2" fill="none" stroke="#a8a8a8" stroke-width="1.2" stroke-linejoin="round"/></svg><svg class="a" style="left:484.0px;top:794.0px;" width="13" height="15" viewBox="0 0 13 15"><rect x="3" y=".6" width="9.4" height="11" rx="1.2" fill="none" stroke="#a8a8a8" stroke-width="1.2"/><path d="M.7 3v10.4c0 .5.4.9.9.9h8" fill="none" stroke="#a8a8a8" stroke-width="1.2"/></svg><svg class="a" style="left:18.0px;top:831.7px" width="13.5" height="13.5" viewBox="0 0 18 18"><defs><linearGradient id="lgc838" x1="0" y1="0" x2="0.2" y2="1"><stop offset="0" stop-color="#ff6d00"/><stop offset=".5" stop-color="#f0487c"/><stop offset="1" stop-color="#6f6cf7"/></linearGradient></defs><path d="M0 18V5.3A5.3 5.3 0 0 1 10.6 5.3V7.6A4.6 4.6 0 0 1 18 11.2V16.2A1.8 1.8 0 0 1 16.2 18H1.2z" fill="url(#lgc838)"/></svg><div class="a nw" style="left:43.6px;top:831.5px;font-size:14.70px;line-height:1;color:#d8d8d8;font-weight:bold;">Lovable</div><svg class="a" style="left:481.0px;top:837.2px;" width="14" height="3" viewBox="0 0 14 3"><circle cx="1.5" cy="1.5" r="1.1" fill="#8d8d8d"/><circle cx="7" cy="1.5" r="1.1" fill="#8d8d8d"/><circle cx="12.5" cy="1.5" r="1.1" fill="#8d8d8d"/></svg><svg class="a" style="left:44.5px;top:869.4px;" width="12" height="16" viewBox="0 0 12 16"><path d="M6 1.2a4.5 4.5 0 0 0-2.6 8.2c.5.4.8 1 .8 1.6v1.2h3.6V11c0-.6.3-1.2.8-1.6A4.5 4.5 0 0 0 6 1.2z" fill="none" stroke="#a0a0a0" stroke-width="1.1"/><path d="M4.3 14.3h3.4M6 6v6" stroke="#a0a0a0" stroke-width="1.1"/></svg><div class="a nw" style="left:68.0px;top:870.7px;font-size:13.80px;line-height:1;color:#bcbcbc;">Thought for 5 seconds</div><div class="a nw" style="left:42.0px;top:908.9px;font-size:15.70px;line-height:1;color:#dadada;">I'll change the layout to single column for both the overview cards</div><div class="a nw" style="left:42.0px;top:933.9px;font-size:15.70px;line-height:1;color:#dadada;">and project tasks sections.</div><svg class="a" style="left:44.0px;top:975.6px;" width="14" height="15" viewBox="0 0 14 15"><path d="M8.5.7H2.2c-.8 0-1.5.7-1.5 1.5v11c0 .8.7 1.5 1.5 1.5h3M8.5.7l3.8 3.8V7M8.5.7v3.8h3.8" fill="none" stroke="#b0b0b0" stroke-width="1.1"/><path d="M7.5 13.5 12.5 8.5l1.5 1.5-5 5H7.5z" fill="none" stroke="#b0b0b0" stroke-width="1"/></svg><div class="a nw" style="left:68.0px;top:976.4px;font-size:13.80px;line-height:1;color:#c4c4c4;">Edited</div><div class="a" style="left:113.0px;top:972.4px;width:167.0px;height:21.4px;background:#262626;border-radius:7px"></div><div class="a nw" style="left:121.5px;top:977.2px;font-size:12.20px;line-height:1;color:#cfcfcf;">src/pages/ProjectDetails.tsx</div><div class="a nw" style="left:42.0px;top:1015.4px;font-size:15.70px;line-height:1;color:#dadada;">Layout updated to single column - overview cards and project</div><div class="a nw" style="left:42.0px;top:1040.4px;font-size:15.70px;line-height:1;color:#dadada;">tasks now stack vertically one after another.</div><div class="a" style="left:42.0px;top:1077.0px;width:283.4px;height:74.0px;background:#1b2a4c;border:1.3px solid #2c5fdc;border-radius:14px"></div><div class="a nw" style="left:55.0px;top:1094.0px;font-size:13.30px;line-height:1;color:#f3f3f3;font-weight:bold;">Update project details layout</div><div class="a nw" style="left:55.0px;top:1120.5px;font-size:12.90px;line-height:1;color:#f3f3f3;font-weight:bold;">Preview Latest</div><svg class="a" style="left:298.0px;top:1094.5px;" width="8" height="12" viewBox="0 0 8 12"><path d="M1.5 1 6.5 6l-5 5" fill="none" stroke="#dedede" stroke-width="1.3"/></svg><svg class="a" style="left:340.5px;top:1092.0px;" width="11" height="14" viewBox="0 0 11 14"><path d="M1 1h9v12L5.5 9.5 1 13z" fill="none" stroke="#bdbdbd" stroke-width="1.2" stroke-linejoin="round"/></svg><div class="a" style="left:191.0px;top:1138.3px;width:142.0px;height:25.3px;background:#1e1e1e;border:1px solid #383838;border-radius:8px"></div><svg class="a" style="left:202.5px;top:1145.2px;" width="11.5" height="12" viewBox="0 0 11.5 12"><path d="M3 2.8A4.9 4.9 0 1 0 8.3 2.6" fill="none" stroke="#8a8a8a" stroke-width="1.2"/><path d="M5.6 .6 3 2.9 5.4 5" fill="none" stroke="#8a8a8a" stroke-width="1.2"/></svg><div class="a nw" style="left:220.0px;top:1145.6px;font-size:11.20px;line-height:1;color:#8a8a8a;font-weight:bold;">Restore</div><svg class="a" style="left:277.5px;top:1146.0px;" width="14.5" height="10" viewBox="0 0 14.5 10"><path d="M4.5 .8.8 5l3.7 4.2M10 .8 13.7 5 10 9.2" fill="none" stroke="#e6e6e6" stroke-width="1.2"/></svg><div class="a nw" style="left:297.3px;top:1145.6px;font-size:11.20px;line-height:1;color:#e6e6e6;font-weight:bold;">Code</div><svg class="a" style="left:426.0px;top:1188.8px;" width="16" height="16" viewBox="0 0 16 16"><path d="M4.5 7v8H1.5V7zM4.5 7 7.5 1.2c1.3 0 2 .9 1.8 2.2L8.8 6h4.5c1 0 1.7.9 1.5 1.9l-1.2 5.5c-.2.9-.9 1.6-1.9 1.6H4.5" fill="none" stroke="#a8a8a8" stroke-width="1.2" stroke-linejoin="round"/></svg><svg class="a" style="left:454.0px;top:1188.8px;" width="16" height="16" viewBox="0 0 16 16"><path d="M11.5 9V1h3v8zM11.5 9 8.5 14.8c-1.3 0-2-.9-1.8-2.2L7.2 10H2.7c-1 0-1.7-.9-1.5-1.9L2.4 2.6C2.6 1.7 3.3 1 4.3 1h7.2" fill="none" stroke="#a8a8a8" stroke-width="1.2" stroke-linejoin="round"/></svg><svg class="a" style="left:484.0px;top:1189.8px;" width="13" height="15" viewBox="0 0 13 15"><rect x="3" y=".6" width="9.4" height="11" rx="1.2" fill="none" stroke="#a8a8a8" stroke-width="1.2"/><path d="M.7 3v10.4c0 .5.4.9.9.9h8" fill="none" stroke="#a8a8a8" stroke-width="1.2"/></svg><svg class="a" style="left:511.0px;top:138.0px;" width="8" height="5" viewBox="0 0 8 5"><path d="M0 5 4 0 8 5z" fill="#c5c2ba"/></svg><div class="a" style="left:511.8px;top:1063.6px;width:6.5px;height:209.7px;background:#c5c2ba;border-radius:3.5px"></div><svg class="a" style="left:511.0px;top:1277.0px;" width="8" height="5" viewBox="0 0 8 5"><path d="M0 0 8 0 4 5z" fill="#c5c2ba"/></svg><div class="a" style="left:10.5px;top:1285.7px;width:509.0px;height:104.7px;background:#232323;border:1px solid #383838;border-radius:22px"></div><div class="a nw" style="left:27.0px;top:1305.3px;font-size:15.30px;line-height:1;color:#e6e6e6;">make me&nbsp; a new page</div><svg class="a" style="left:239.5px;top:1303.0px;" width="9" height="18" viewBox="0 0 9 18"><path d="M1 1.5h2.5c.6 0 1 .4 1 1 0-.6.4-1 1-1H8M1 16.5h2.5c.6 0 1-.4 1-1 0 .6.4 1 1 1H8M4.5 2.5v13M3 9h3" fill="none" stroke="#111" stroke-width="2.2"/><path d="M1 1.5h2.5c.6 0 1 .4 1 1 0-.6.4-1 1-1H8M1 16.5h2.5c.6 0 1-.4 1-1 0 .6.4 1 1 1H8M4.5 2.5v13M3 9h3" fill="none" stroke="#fff" stroke-width="1"/></svg><div class="a" style="left:485.0px;top:1328.0px;width:8.0px;height:8.0px;background:#5b3df5;border-radius:50%"></div><div class="a" style="left:23.0px;top:1354.8px;width:23.3px;height:22.6px;border:1px solid #3a3a3a;border-radius:50%"></div><svg class="a" style="left:29.5px;top:1361.0px;" width="10" height="10" viewBox="0 0 10 10"><path d="M5 .5v9M.5 5h9" stroke="#bdbdbd" stroke-width="1.2"/></svg><div class="a" style="left:51.6px;top:1354.8px;width:60.6px;height:22.6px;border:1px solid #3a3a3a;border-radius:12px"></div><svg class="a" style="left:59.5px;top:1360.0px;" width="13" height="12" viewBox="0 0 13 12"><path d="M1 4V1h3M9 1h3v3M1 8v3h3" fill="none" stroke="#d6d6d6" stroke-width="1.2"/><path d="M6 5l6.5 2.5-2.8.8 2 2.3-.9.8-2-2.3-1.2 2.7z" fill="#d6d6d6"/></svg><div class="a nw" style="left:78.0px;top:1360.0px;font-size:12.60px;line-height:1;color:#e0e0e0;font-weight:bold;">Edit</div><div class="a" style="left:412.0px;top:1354.8px;width:65.8px;height:22.6px;border:1px solid #3a3a3a;border-radius:12px"></div><svg class="a" style="left:421.0px;top:1359.0px;" width="9" height="14" viewBox="0 0 9 14"><path d="M4.5 1a3.5 3.5 0 0 0-2 6.4c.4.3.6.7.6 1.2v1h2.8v-1c0-.5.2-.9.6-1.2A3.5 3.5 0 0 0 4.5 1z" fill="none" stroke="#cfcfcf" stroke-width="1.1"/><path d="M3.2 12h2.6" stroke="#cfcfcf" stroke-width="1.1"/></svg><div class="a nw" style="left:438.8px;top:1359.9px;font-size:12.80px;line-height:1;color:#e6e6e6;font-weight:bold;">Chat</div><div class="a" style="left:482.8px;top:1354.3px;width:24.2px;height:24.2px;background:#f5f5f5;border-radius:50%"></div><svg class="a" style="left:489.0px;top:1360.0px;" width="12" height="12" viewBox="0 0 12 12"><path d="M6 11V1.5M1.8 5.5 6 1.3l4.2 4.2" fill="none" stroke="#151515" stroke-width="1.7"/></svg><div class="a" style="left:1745.6px;top:0.0px;width:1694.4px;height:1400.0px;background:#181818"></div><div class="a" style="left:1745.6px;top:41.0px;width:1694.4px;height:1.0px;background:#2b2b2b"></div><svg class="a" style="left:1752.5px;top:10.0px;" width="20" height="20" viewBox="0 0 20 20"><path d="M14.6 1.2 7 8.2 3.1 5.2 1.6 6v8l1.5.8L7 11.8l7.6 7 3.9-1.9V3.1z" fill="#1f8ad2"/><path d="M14.6 5.6 8.8 10l5.8 4.4z" fill="#181818"/><path d="M3.1 5.2 1.6 6v8l1.5.8L5.3 10z" fill="#2a9be0"/><path d="M14.6 1.2 18.5 3.1v13.8l-3.9 1.9z" fill="#3ab0f0"/></svg><div class="a nw" style="left:1793.4px;top:13.4px;font-size:14.60px;line-height:1;color:#cccccc;">File</div><div class="a nw" style="left:1836.0px;top:13.4px;font-size:14.60px;line-height:1;color:#cccccc;">Edit</div><div class="a nw" style="left:1881.0px;top:13.4px;font-size:14.60px;line-height:1;color:#cccccc;">Selection</div><div class="a nw" style="left:1963.0px;top:13.4px;font-size:14.60px;line-height:1;color:#cccccc;">View</div><div class="a nw" style="left:2015.5px;top:13.4px;font-size:14.60px;line-height:1;color:#cccccc;">Go</div><div class="a nw" style="left:2054.5px;top:13.4px;font-size:14.60px;line-height:1;color:#cccccc;">Run</div><svg class="a" style="left:2105.0px;top:19.0px;" width="17" height="3" viewBox="0 0 17 3"><circle cx="1.5" cy="1.5" r="1.3" fill="#ccc"/><circle cx="8.5" cy="1.5" r="1.3" fill="#ccc"/><circle cx="15.5" cy="1.5" r="1.3" fill="#ccc"/></svg><svg class="a" style="left:2212.5px;top:13.5px;" width="16" height="14" viewBox="0 0 16 14"><path d="M15 7H1.8M7.5 1.3 1.8 7l5.7 5.7" fill="none" stroke="#cccccc" stroke-width="1.3"/></svg><svg class="a" style="left:2244.5px;top:13.5px;" width="16" height="14" viewBox="0 0 16 14"><path d="M1 7h13.2M8.5 1.3 14.2 7l-5.7 5.7" fill="none" stroke="#cccccc" stroke-width="1.3"/></svg><div class="a" style="left:2278.0px;top:6.0px;width:649.0px;height:28.4px;background:#242424;border:1px solid #363636;border-radius:7px"></div><svg class="a" style="left:2542.5px;top:13.0px;" width="15" height="15" viewBox="0 0 15 15"><circle cx="9" cy="6" r="5" fill="none" stroke="#cccccc" stroke-width="1.2"/><path d="M5.5 9.5 1 14" stroke="#cccccc" stroke-width="1.3"/></svg><div class="a nw" style="left:2564.7px;top:13.9px;font-size:14.60px;line-height:1;color:#cccccc;">task-monitoring</div><svg class="a" style="left:2944.0px;top:12.0px;" width="20" height="17" viewBox="0 0 20 17"><path d="M4 5c0-2.5 2-4 4-3.5 1 .3 1.5 1 2 1.5.5-.5 1-1.2 2-1.5 2-.5 4 1 4 3.5v1.5c1.5.8 2.5 2 2.5 3.5 0 3-3.5 5.5-8.5 5.5S1.5 13 1.5 10c0-1.5 1-2.7 2.5-3.5z" fill="none" stroke="#cccccc" stroke-width="1.4"/><circle cx="7.5" cy="10" r="1.2" fill="#ccc"/><circle cx="12.5" cy="10" r="1.2" fill="#ccc"/></svg><svg class="a" style="left:2967.0px;top:17.0px;" width="10" height="6" viewBox="0 0 10 6"><path d="M1 1l4 4 4-4" fill="none" stroke="#ccc" stroke-width="1.2"/></svg><svg class="a" style="left:3191.5px;top:13.0px;" width="16" height="15" viewBox="0 0 16 15"><rect x=".7" y=".7" width="5.6" height="13.6" rx="1" fill="none" stroke="#ccc" stroke-width="1.2"/><rect x="9.2" y=".7" width="6" height="5.5" rx="1" fill="none" stroke="#ccc" stroke-width="1.2"/><rect x="9.2" y="8.8" width="6" height="5.5" rx="1" fill="none" stroke="#ccc" stroke-width="1.2"/></svg><svg class="a" style="left:3222.0px;top:13.0px;" width="16" height="15" viewBox="0 0 16 15"><rect x=".7" y=".7" width="14.6" height="13.6" rx="1" fill="none" stroke="#ccc" stroke-width="1.3"/><rect x=".7" y=".7" width="5.5" height="13.6" fill="#ccc"/></svg><svg class="a" style="left:3253.0px;top:13.0px;" width="16" height="15" viewBox="0 0 16 15"><rect x=".7" y=".7" width="14.6" height="13.6" rx="1" fill="none" stroke="#ccc" stroke-width="1.3"/><rect x=".7" y="8" width="14.6" height="6.3" fill="#ccc"/></svg><svg class="a" style="left:3284.0px;top:13.0px;" width="16" height="15" viewBox="0 0 16 15"><rect x=".7" y=".7" width="14.6" height="13.6" rx="1" fill="none" stroke="#ccc" stroke-width="1.3"/><path d="M9.5 1v13" stroke="#ccc" stroke-width="1.3"/></svg><div class="a" style="left:3325.5px;top:20.5px;width:11.0px;height:1.0px;background:#cccccc"></div><div class="a" style="left:3372.0px;top:15.0px;width:11.0px;height:11.0px;border:1px solid #cccccc"></div><svg class="a" style="left:3418.5px;top:15.0px;" width="11" height="11" viewBox="0 0 11 11"><path d="M.5 .5l10 10M10.5 .5l-10 10" stroke="#cccccc" stroke-width="1.1"/></svg><div class="a" style="left:1799.0px;top:42.0px;width:1.0px;height:1332.6px;background:#2b2b2b"></div><svg class="a" style="left:1755.3px;top:54.3px;" width="30" height="30" viewBox="0 0 25 25"><path d="M9 2h8l5 5v12.5H9z" fill="none" stroke="#d7d7d7" stroke-width="1.6"/><path d="M17 2v5h5" fill="none" stroke="#d7d7d7" stroke-width="1.4"/><path d="M9 6H3v16.5h12.5v-3" fill="none" stroke="#d7d7d7" stroke-width="1.6"/></svg><svg class="a" style="left:1755.3px;top:111.8px;" width="30" height="30" viewBox="0 0 25 25"><circle cx="14.5" cy="10" r="6.8" fill="none" stroke="#868686" stroke-width="1.7"/><path d="M9.5 15 2.5 22.5" stroke="#868686" stroke-width="1.8"/></svg><svg class="a" style="left:1755.3px;top:169.5px;" width="30" height="30" viewBox="0 0 25 25"><circle cx="6" cy="4.5" r="2.7" fill="none" stroke="#868686" stroke-width="1.5"/><circle cx="6" cy="20.5" r="2.7" fill="none" stroke="#868686" stroke-width="1.5"/><circle cx="18.5" cy="9" r="2.7" fill="none" stroke="#868686" stroke-width="1.5"/><path d="M6 7.2v10.6M6 16c0-4 12.5-2 12.5-4.3" fill="none" stroke="#868686" stroke-width="1.5"/></svg><svg class="a" style="left:1755.3px;top:227.1px;" width="30" height="30" viewBox="0 0 25 25"><path d="M11 3.5v17l12-8.5z" fill="none" stroke="#868686" stroke-width="1.6" stroke-linejoin="round"/><circle cx="6.5" cy="17" r="4" fill="#181818" stroke="#868686" stroke-width="1.5"/><path d="M6.5 13v8M2 17h-1.5M11 17h1.5M3.5 13.5 2 12M9.5 13.5 11 12M3.5 20.5 2 22M9.5 20.5 11 22" stroke="#868686" stroke-width="1.3"/></svg><svg class="a" style="left:1755.3px;top:284.8px;" width="30" height="30" viewBox="0 0 25 25"><path d="M2 8.5h7v7H2zM9 15.5h7v7H9zM2 15.5h7v7H2z" fill="none" stroke="#868686" stroke-width="1.5"/><path d="M13.5 2.5l5 5-5 5-5-5z" fill="none" stroke="#868686" stroke-width="1.5"/></svg><svg class="a" style="left:1755.3px;top:342.3px;" width="30" height="30" viewBox="0 0 25 25"><rect x="1.5" y="3" width="20" height="14" rx="1" fill="none" stroke="#868686" stroke-width="1.5"/><path d="M6 21h7" stroke="#868686" stroke-width="1.5"/><circle cx="18.5" cy="17.5" r="5" fill="#181818" stroke="#868686" stroke-width="1.4"/><path d="M16.5 16.5l-1.5 1 1.5 1M20.5 16.5l1.5 1-1.5 1" fill="none" stroke="#868686" stroke-width="1.1"/></svg><svg class="a" style="left:1755.3px;top:399.8px;" width="30" height="30" viewBox="0 0 25 25"><circle cx="12.5" cy="12.5" r="11" fill="#868686"/><path d="M15.5 6 8 12.5l7.5 6.5" fill="none" stroke="#181818" stroke-width="2.6"/><circle cx="19.5" cy="12.5" r="1.5" fill="#181818"/></svg><svg class="a" style="left:1755.3px;top:457.4px;" width="30" height="30" viewBox="0 0 25 25"><circle cx="12.5" cy="13" r="10" fill="none" stroke="#868686" stroke-width="1.6"/><circle cx="6" cy="3.5" r="2.5" fill="#868686"/><circle cx="19" cy="3.5" r="2.5" fill="#868686"/><path d="M6 11.5c1.5-2 4-2 5 0M14 11.5c1-2 3.5-2 5 0M6.5 15.5c2 4 10 4 12 0z" fill="none" stroke="#868686" stroke-width="1.5"/></svg><svg class="a" style="left:1755.3px;top:1270.8px;" width="30" height="30" viewBox="0 0 25 25"><circle cx="12.5" cy="12.5" r="11" fill="none" stroke="#868686" stroke-width="1.6"/><circle cx="12.5" cy="9.5" r="4.2" fill="none" stroke="#868686" stroke-width="1.6"/><path d="M5 20c1.5-3.5 4-5 7.5-5s6 1.5 7.5 5" fill="none" stroke="#868686" stroke-width="1.6"/></svg><svg class="a" style="left:1755.3px;top:1328.8px;" width="30" height="30" viewBox="0 0 25 25"><path d="M10.5 1.5h4l.7 3.2 2 1.2 3.1-1 2 3.4-2.4 2.2v2.6l2.4 2.2-2 3.4-3.1-1-2 1.2-.7 3.2h-4l-.7-3.2-2-1.2-3.1 1-2-3.4 2.4-2.2V10.5L2.7 8.3l2-3.4 3.1 1 2-1.2z" fill="none" stroke="#868686" stroke-width="1.5" stroke-linejoin="round"/><circle cx="12.5" cy="12.5" r="3.2" fill="none" stroke="#868686" stroke-width="1.5"/></svg><div class="a" style="left:1770.8px;top:186.6px;width:18.4px;height:18.4px;background:#0078d4;border-radius:50%"></div><div class="a nw" style="left:1776.4px;top:190.5px;font-size:11.50px;line-height:1;color:#ffffff;font-weight:bold;">4</div><div class="a" style="left:1770.8px;top:300.8px;width:18.4px;height:18.4px;background:#0078d4;border-radius:50%"></div><div class="a nw" style="left:1776.4px;top:304.7px;font-size:11.50px;line-height:1;color:#ffffff;font-weight:bold;">8</div><div class="a" style="left:1771.1px;top:1345.0px;width:18.4px;height:18.4px;background:#0078d4;border-radius:50%"></div><div class="a nw" style="left:1776.7px;top:1348.9px;font-size:11.50px;line-height:1;color:#ffffff;font-weight:bold;">1</div><div class="a" style="left:2137.1px;top:42.0px;width:1.0px;height:1332.6px;background:#2b2b2b"></div><div class="a nw" style="left:1823.8px;top:58.4px;font-size:11.10px;line-height:1;color:#cccccc;">EXPLORER</div><svg class="a" style="left:2102.0px;top:61.0px;" width="17" height="3" viewBox="0 0 17 3"><circle cx="1.5" cy="1.5" r="1.3" fill="#ccc"/><circle cx="8.5" cy="1.5" r="1.3" fill="#ccc"/><circle cx="15.5" cy="1.5" r="1.3" fill="#ccc"/></svg><svg class="a" style="left:1805.0px;top:93.4px;" width="12" height="8" viewBox="0 0 12 8"><path d="M1 1.5 6 6.5 11 1.5" fill="none" stroke="#c5c5c5" stroke-width="1.2"/></svg><div class="a nw" style="left:1824.5px;top:91.2px;font-size:13.10px;line-height:1;color:#cccccc;font-weight:bold;">TASK-MONITORING</div><svg class="a" style="left:1820.8px;top:119.5px;" width="12" height="8" viewBox="0 0 12 8"><path d="M1 1.5 6 6.5 11 1.5" fill="none" stroke="#c5c5c5" stroke-width="1.2"/></svg><svg class="a" style="left:1840.4px;top:115.0px;" width="18" height="17" viewBox="0 0 18 17"><path d="M1 3.5c0-.8.6-1.4 1.4-1.4h4.2l1.6 1.8h6.4c.8 0 1.4.6 1.4 1.4V6H5.2L2.6 14H2.4c-.8 0-1.4-.6-1.4-1.4z" fill="#2e7d32"/><path d="M5 6.5h12.3l-2.8 7.5H2.4z" fill="#4caf50"/><path d="M8 8.5l-2 2.2 2 2.2M12 8.5l2 2.2-2 2.2" fill="none" stroke="#8bff8b" stroke-width="1.2"/></svg><div class="a nw" style="left:1867.0px;top:116.7px;font-size:14.90px;line-height:1;color:#e2c08d;">src</div><div class="a" style="left:2108.6px;top:119.3px;width:8.4px;height:8.4px;background:#8a7656;border-radius:50%"></div><svg class="a" style="left:1830.4px;top:145.9px;" width="12" height="8" viewBox="0 0 12 8"><path d="M1 1.5 6 6.5 11 1.5" fill="none" stroke="#c5c5c5" stroke-width="1.2"/></svg><svg class="a" style="left:1850.0px;top:141.4px;" width="18" height="17" viewBox="0 0 18 17"><path d="M1 3.5c0-.8.6-1.4 1.4-1.4h4.2l1.6 1.8h6.4c.8 0 1.4.6 1.4 1.4V6H5.2L2.6 14H2.4c-.8 0-1.4-.6-1.4-1.4z" fill="#2e7d32"/><path d="M5 6.5h12.3l-2.8 7.5H2.4z" fill="#43a047"/><rect x="8" y="7.5" width="6.5" height="6.5" rx="1" fill="#1b5e20"/><circle cx="11.2" cy="10.8" r="1.8" fill="none" stroke="#b9f6ca" stroke-width="1"/></svg><div class="a nw" style="left:1876.6px;top:143.0px;font-size:14.90px;line-height:1;color:#e2c08d;">app</div><div class="a" style="left:2108.6px;top:145.7px;width:8.4px;height:8.4px;background:#8a7656;border-radius:50%"></div><svg class="a" style="left:1840.0px;top:172.2px;" width="12" height="8" viewBox="0 0 12 8"><path d="M1 1.5 6 6.5 11 1.5" fill="none" stroke="#c5c5c5" stroke-width="1.2"/></svg><svg class="a" style="left:1859.6px;top:167.7px;" width="18" height="17" viewBox="0 0 18 17"><path d="M1 3.5c0-.8.6-1.4 1.4-1.4h4.2l1.6 1.8h6.4c.8 0 1.4.6 1.4 1.4V6H5.2L2.6 14H2.4c-.8 0-1.4-.6-1.4-1.4z" fill="#c58b4e"/><path d="M5 6.5h12.3l-2.8 7.5H2.4z" fill="#e0a96d"/><path d="M7 8h2v6H7z" fill="#ef5350"/><path d="M9.5 8h2v6h-2z" fill="#66bb6a"/><path d="M12 8h2v6h-2z" fill="#42a5f5"/><path d="M14.5 8h2v6h-2z" fill="#ab47bc"/></svg><div class="a nw" style="left:1886.2px;top:169.4px;font-size:14.90px;line-height:1;color:#e2c08d;">lib</div><div class="a" style="left:2108.6px;top:172.0px;width:8.4px;height:8.4px;background:#8a7656;border-radius:50%"></div><svg class="a" style="left:1849.6px;top:198.6px;" width="12" height="8" viewBox="0 0 12 8"><path d="M1 1.5 6 6.5 11 1.5" fill="none" stroke="#c5c5c5" stroke-width="1.2"/></svg><svg class="a" style="left:1869.2px;top:194.1px;" width="18" height="17" viewBox="0 0 18 17"><path d="M1 3.5c0-.8.6-1.4 1.4-1.4h4.2l1.6 1.8h6.4c.8 0 1.4.6 1.4 1.4V6H5.2L2.6 14H2.4c-.8 0-1.4-.6-1.4-1.4z" fill="#c09553"/><path d="M5 6.5h12.3l-2.8 7.5H2.4z" fill="#dcb67a"/></svg><div class="a nw" style="left:1895.8px;top:195.8px;font-size:14.90px;line-height:1;color:#e2c08d;">typeorm</div><div class="a" style="left:2108.6px;top:198.4px;width:8.4px;height:8.4px;background:#8a7656;border-radius:50%"></div><svg class="a" style="left:1859.2px;top:225.0px;" width="12" height="8" viewBox="0 0 12 8"><path d="M1 1.5 6 6.5 11 1.5" fill="none" stroke="#c5c5c5" stroke-width="1.2"/></svg><svg class="a" style="left:1878.8px;top:220.5px;" width="18" height="17" viewBox="0 0 18 17"><path d="M1 3.5c0-.8.6-1.4 1.4-1.4h4.2l1.6 1.8h6.4c.8 0 1.4.6 1.4 1.4V6H5.2L2.6 14H2.4c-.8 0-1.4-.6-1.4-1.4z" fill="#3f86c8"/><path d="M5 6.5h12.3l-2.8 7.5H2.4z" fill="#64b5f6"/><rect x="9" y="8" width="4" height="3" fill="#e3f2fd"/><rect x="13" y="11" width="4" height="3" fill="#e3f2fd"/><rect x="9" y="11" width="3" height="3" fill="#bbdefb"/></svg><div class="a nw" style="left:1905.4px;top:222.1px;font-size:14.90px;line-height:1;color:#e2c08d;">entities</div><div class="a" style="left:2108.6px;top:224.8px;width:8.4px;height:8.4px;background:#8a7656;border-radius:50%"></div><div class="a nw" style="left:1891.9px;top:249.7px;font-size:12.20px;line-height:1;color:#d8cd45;font-weight:bold;letter-spacing:-0.3px">JS</div><div class="a nw" style="left:1915.0px;top:248.5px;font-size:14.90px;line-height:1;color:#cccccc;">AssignedUsersToProject.js</div><div class="a nw" style="left:1891.9px;top:276.1px;font-size:12.20px;line-height:1;color:#d8cd45;font-weight:bold;letter-spacing:-0.3px">JS</div><div class="a nw" style="left:1915.0px;top:274.9px;font-size:14.90px;line-height:1;color:#cccccc;">Project.js</div><div class="a nw" style="left:1891.9px;top:302.4px;font-size:12.20px;line-height:1;color:#d8cd45;font-weight:bold;letter-spacing:-0.3px">JS</div><div class="a nw" style="left:1915.0px;top:301.2px;font-size:14.90px;line-height:1;color:#cccccc;">Role.js</div><div class="a nw" style="left:1891.9px;top:328.8px;font-size:12.20px;line-height:1;color:#d8cd45;font-weight:bold;letter-spacing:-0.3px">JS</div><div class="a nw" style="left:1915.0px;top:327.6px;font-size:14.90px;line-height:1;color:#e2c08d;">Screenshot.js</div><div class="a nw" style="left:2106.5px;top:328.4px;font-size:13.20px;line-height:1;color:#e2c08d;font-weight:bold;">M</div><div class="a nw" style="left:1891.9px;top:355.2px;font-size:12.20px;line-height:1;color:#d8cd45;font-weight:bold;letter-spacing:-0.3px">JS</div><div class="a nw" style="left:1915.0px;top:354.0px;font-size:14.90px;line-height:1;color:#cccccc;">Task.js</div><div class="a nw" style="left:1891.9px;top:381.5px;font-size:12.20px;line-height:1;color:#d8cd45;font-weight:bold;letter-spacing:-0.3px">JS</div><div class="a nw" style="left:1915.0px;top:380.3px;font-size:14.90px;line-height:1;color:#cccccc;">User_Role.js</div><div class="a nw" style="left:1891.9px;top:407.9px;font-size:12.20px;line-height:1;color:#d8cd45;font-weight:bold;letter-spacing:-0.3px">JS</div><div class="a nw" style="left:1915.0px;top:406.7px;font-size:14.90px;line-height:1;color:#cccccc;">User.js</div><div class="a nw" style="left:1882.3px;top:434.3px;font-size:12.20px;line-height:1;color:#d8cd45;font-weight:bold;letter-spacing:-0.3px">JS</div><div class="a nw" style="left:1905.4px;top:433.1px;font-size:14.90px;line-height:1;color:#cccccc;">data-source.js</div><div class="a nw" style="left:1882.3px;top:460.6px;font-size:12.20px;line-height:1;color:#d8cd45;font-weight:bold;letter-spacing:-0.3px">JS</div><div class="a nw" style="left:1905.4px;top:459.4px;font-size:14.90px;line-height:1;color:#cccccc;">init-db.js</div><div class="a nw" style="left:1872.7px;top:487.0px;font-size:12.20px;line-height:1;color:#d8cd45;font-weight:bold;letter-spacing:-0.3px">JS</div><div class="a nw" style="left:1895.8px;top:485.8px;font-size:14.90px;line-height:1;color:#cccccc;">auth.js</div><div class="a nw" style="left:1872.7px;top:513.4px;font-size:12.20px;line-height:1;color:#d8cd45;font-weight:bold;letter-spacing:-0.3px">JS</div><div class="a nw" style="left:1895.8px;top:512.2px;font-size:14.90px;line-height:1;color:#cccccc;">coreResponse.js</div><div class="a nw" style="left:1872.7px;top:539.8px;font-size:12.20px;line-height:1;color:#d8cd45;font-weight:bold;letter-spacing:-0.3px">JS</div><div class="a nw" style="left:1895.8px;top:538.5px;font-size:14.90px;line-height:1;color:#cccccc;">sqlClient.js</div><svg class="a" style="left:1842.0px;top:565.8px;" width="8" height="12" viewBox="0 0 8 12"><path d="M1.5 1 6.5 6 1.5 11" fill="none" stroke="#c5c5c5" stroke-width="1.2"/></svg><svg class="a" style="left:1859.6px;top:563.3px;" width="18" height="17" viewBox="0 0 18 17"><path d="M1 3.5c0-.8.6-1.4 1.4-1.4h4.2l1.6 1.8h7.4c.8 0 1.4.6 1.4 1.4v8.3c0 .8-.6 1.4-1.4 1.4H2.4c-.8 0-1.4-.6-1.4-1.4z" fill="#dcb67a"/></svg><div class="a nw" style="left:1886.2px;top:564.9px;font-size:14.90px;line-height:1;color:#cccccc;">profile</div><svg class="a" style="left:1840.0px;top:594.1px;" width="12" height="8" viewBox="0 0 12 8"><path d="M1 1.5 6 6.5 11 1.5" fill="none" stroke="#c5c5c5" stroke-width="1.2"/></svg><svg class="a" style="left:1859.6px;top:589.6px;" width="18" height="17" viewBox="0 0 18 17"><path d="M1 3.5c0-.8.6-1.4 1.4-1.4h4.2l1.6 1.8h6.4c.8 0 1.4.6 1.4 1.4V6H5.2L2.6 14H2.4c-.8 0-1.4-.6-1.4-1.4z" fill="#3a78b0"/><path d="M5 6.5h12.3l-2.8 7.5H2.4z" fill="#5aa0d8"/><circle cx="13.5" cy="11.5" r="2.6" fill="#90a4ae" stroke="#546e7a" stroke-width=".8"/></svg><div class="a nw" style="left:1886.2px;top:591.3px;font-size:14.90px;line-height:1;color:#e2c08d;">services</div><div class="a" style="left:2108.6px;top:593.9px;width:8.4px;height:8.4px;background:#8a7656;border-radius:50%"></div><svg class="a" style="left:1849.6px;top:620.5px;" width="12" height="8" viewBox="0 0 12 8"><path d="M1 1.5 6 6.5 11 1.5" fill="none" stroke="#c5c5c5" stroke-width="1.2"/></svg><svg class="a" style="left:1869.2px;top:616.0px;" width="18" height="17" viewBox="0 0 18 17"><path d="M1 3.5c0-.8.6-1.4 1.4-1.4h4.2l1.6 1.8h6.4c.8 0 1.4.6 1.4 1.4V6H5.2L2.6 14H2.4c-.8 0-1.4-.6-1.4-1.4z" fill="#c09553"/><path d="M5 6.5h12.3l-2.8 7.5H2.4z" fill="#dcb67a"/></svg><div class="a nw" style="left:1895.8px;top:617.6px;font-size:14.90px;line-height:1;color:#cccccc;">login</div><div class="a nw" style="left:1882.3px;top:645.2px;font-size:12.20px;line-height:1;color:#d8cd45;font-weight:bold;letter-spacing:-0.3px">JS</div><div class="a nw" style="left:1905.4px;top:644.0px;font-size:14.90px;line-height:1;color:#cccccc;">loginService.js</div><svg class="a" style="left:1849.6px;top:673.2px;" width="12" height="8" viewBox="0 0 12 8"><path d="M1 1.5 6 6.5 11 1.5" fill="none" stroke="#c5c5c5" stroke-width="1.2"/></svg><svg class="a" style="left:1869.2px;top:668.7px;" width="18" height="17" viewBox="0 0 18 17"><path d="M1 3.5c0-.8.6-1.4 1.4-1.4h4.2l1.6 1.8h6.4c.8 0 1.4.6 1.4 1.4V6H5.2L2.6 14H2.4c-.8 0-1.4-.6-1.4-1.4z" fill="#c09553"/><path d="M5 6.5h12.3l-2.8 7.5H2.4z" fill="#dcb67a"/></svg><div class="a nw" style="left:1895.8px;top:670.4px;font-size:14.90px;line-height:1;color:#cccccc;">projects</div><div class="a nw" style="left:1882.3px;top:698.0px;font-size:12.20px;line-height:1;color:#d8cd45;font-weight:bold;letter-spacing:-0.3px">JS</div><div class="a nw" style="left:1905.4px;top:696.7px;font-size:14.90px;line-height:1;color:#cccccc;">projectService.js</div><svg class="a" style="left:1849.6px;top:726.0px;" width="12" height="8" viewBox="0 0 12 8"><path d="M1 1.5 6 6.5 11 1.5" fill="none" stroke="#c5c5c5" stroke-width="1.2"/></svg><svg class="a" style="left:1869.2px;top:721.5px;" width="18" height="17" viewBox="0 0 18 17"><path d="M1 3.5c0-.8.6-1.4 1.4-1.4h4.2l1.6 1.8h6.4c.8 0 1.4.6 1.4 1.4V6H5.2L2.6 14H2.4c-.8 0-1.4-.6-1.4-1.4z" fill="#c09553"/><path d="M5 6.5h12.3l-2.8 7.5H2.4z" fill="#dcb67a"/></svg><div class="a nw" style="left:1895.8px;top:723.1px;font-size:14.90px;line-height:1;color:#e2c08d;">screenshotData</div><div class="a" style="left:2108.6px;top:725.8px;width:8.4px;height:8.4px;background:#8a7656;border-radius:50%"></div><div class="a" style="left:1800.0px;top:743.1px;width:337.0px;height:26.4px;background:#37373d"></div><div class="a" style="left:1852.5px;top:743.1px;width:1.0px;height:26.4px;background:#585858"></div><div class="a nw" style="left:1882.3px;top:750.7px;font-size:12.20px;line-height:1;color:#d8cd45;font-weight:bold;letter-spacing:-0.3px">JS</div><div class="a nw" style="left:1905.4px;top:749.5px;font-size:14.90px;line-height:1;color:#e2c08d;">screenshotDataService.js</div><div class="a nw" style="left:2106.5px;top:750.3px;font-size:13.20px;line-height:1;color:#e2c08d;font-weight:bold;">M</div><svg class="a" style="left:1849.6px;top:778.7px;" width="12" height="8" viewBox="0 0 12 8"><path d="M1 1.5 6 6.5 11 1.5" fill="none" stroke="#c5c5c5" stroke-width="1.2"/></svg><svg class="a" style="left:1869.2px;top:774.2px;" width="18" height="17" viewBox="0 0 18 17"><path d="M1 3.5c0-.8.6-1.4 1.4-1.4h4.2l1.6 1.8h6.4c.8 0 1.4.6 1.4 1.4V6H5.2L2.6 14H2.4c-.8 0-1.4-.6-1.4-1.4z" fill="#c09553"/><path d="M5 6.5h12.3l-2.8 7.5H2.4z" fill="#dcb67a"/></svg><div class="a nw" style="left:1895.8px;top:775.9px;font-size:14.90px;line-height:1;color:#cccccc;">signup</div><div class="a nw" style="left:1882.3px;top:803.4px;font-size:12.20px;line-height:1;color:#d8cd45;font-weight:bold;letter-spacing:-0.3px">JS</div><div class="a nw" style="left:1905.4px;top:802.2px;font-size:14.90px;line-height:1;color:#cccccc;">signupService.js</div><svg class="a" style="left:1849.6px;top:831.4px;" width="12" height="8" viewBox="0 0 12 8"><path d="M1 1.5 6 6.5 11 1.5" fill="none" stroke="#c5c5c5" stroke-width="1.2"/></svg><svg class="a" style="left:1869.2px;top:826.9px;" width="18" height="17" viewBox="0 0 18 17"><path d="M1 3.5c0-.8.6-1.4 1.4-1.4h4.2l1.6 1.8h6.4c.8 0 1.4.6 1.4 1.4V6H5.2L2.6 14H2.4c-.8 0-1.4-.6-1.4-1.4z" fill="#c09553"/><path d="M5 6.5h12.3l-2.8 7.5H2.4z" fill="#dcb67a"/></svg><div class="a nw" style="left:1895.8px;top:828.6px;font-size:14.90px;line-height:1;color:#cccccc;">Task</div><div class="a nw" style="left:1882.3px;top:856.2px;font-size:12.20px;line-height:1;color:#d8cd45;font-weight:bold;letter-spacing:-0.3px">JS</div><div class="a nw" style="left:1905.4px;top:855.0px;font-size:14.90px;line-height:1;color:#cccccc;">taskService.js</div><svg class="a" style="left:1849.6px;top:884.2px;" width="12" height="8" viewBox="0 0 12 8"><path d="M1 1.5 6 6.5 11 1.5" fill="none" stroke="#c5c5c5" stroke-width="1.2"/></svg><svg class="a" style="left:1869.2px;top:879.7px;" width="18" height="17" viewBox="0 0 18 17"><path d="M1 3.5c0-.8.6-1.4 1.4-1.4h4.2l1.6 1.8h6.4c.8 0 1.4.6 1.4 1.4V6H5.2L2.6 14H2.4c-.8 0-1.4-.6-1.4-1.4z" fill="#c09553"/><path d="M5 6.5h12.3l-2.8 7.5H2.4z" fill="#dcb67a"/></svg><div class="a nw" style="left:1895.8px;top:881.3px;font-size:14.90px;line-height:1;color:#cccccc;">team-member</div><div class="a nw" style="left:1882.3px;top:908.9px;font-size:12.20px;line-height:1;color:#d8cd45;font-weight:bold;letter-spacing:-0.3px">JS</div><div class="a nw" style="left:1905.4px;top:907.7px;font-size:14.90px;line-height:1;color:#cccccc;">teamMemberService.js</div><svg class="a" style="left:1849.6px;top:936.9px;" width="12" height="8" viewBox="0 0 12 8"><path d="M1 1.5 6 6.5 11 1.5" fill="none" stroke="#c5c5c5" stroke-width="1.2"/></svg><svg class="a" style="left:1869.2px;top:932.4px;" width="18" height="17" viewBox="0 0 18 17"><path d="M1 3.5c0-.8.6-1.4 1.4-1.4h4.2l1.6 1.8h6.4c.8 0 1.4.6 1.4 1.4V6H5.2L2.6 14H2.4c-.8 0-1.4-.6-1.4-1.4z" fill="#c09553"/><path d="M5 6.5h12.3l-2.8 7.5H2.4z" fill="#dcb67a"/></svg><div class="a nw" style="left:1895.8px;top:934.1px;font-size:14.90px;line-height:1;color:#cccccc;">users</div><div class="a nw" style="left:1882.3px;top:961.6px;font-size:12.20px;line-height:1;color:#d8cd45;font-weight:bold;letter-spacing:-0.3px">JS</div><div class="a nw" style="left:1905.4px;top:960.4px;font-size:14.90px;line-height:1;color:#cccccc;">usersService.js</div><svg class="a" style="left:1860.6px;top:985.6px;" width="16" height="16" viewBox="0 0 16 16"><rect width="16" height="16" rx="1.5" fill="#e53935"/><path d="M8 2.5l1.6 3.4 3.7.4-2.8 2.5.8 3.7L8 10.6l-3.3 1.9.8-3.7L2.7 6.3l3.7-.4z" fill="#fff"/></svg><div class="a nw" style="left:1886.2px;top:986.8px;font-size:14.90px;line-height:1;color:#cccccc;">favicon.ico</div><svg class="a" style="left:1860.6px;top:1012.0px;" width="16" height="16" viewBox="0 0 16 16"><rect width="16" height="16" rx="1.5" fill="#7e57c2"/><text x="8" y="13" font-size="7.5" text-anchor="middle" font-family="Liberation Sans" fill="#fff">css</text></svg><div class="a nw" style="left:1886.2px;top:1013.2px;font-size:14.90px;line-height:1;color:#cccccc;">globals.css</div><div class="a nw" style="left:1863.1px;top:1040.7px;font-size:12.20px;line-height:1;color:#d8cd45;font-weight:bold;letter-spacing:-0.3px">JS</div><div class="a nw" style="left:1886.2px;top:1039.5px;font-size:14.90px;line-height:1;color:#cccccc;">layout.js</div><div class="a nw" style="left:1863.1px;top:1067.1px;font-size:12.20px;line-height:1;color:#d8cd45;font-weight:bold;letter-spacing:-0.3px">JS</div><div class="a nw" style="left:1886.2px;top:1065.9px;font-size:14.90px;line-height:1;color:#cccccc;">page.js</div><div class="a nw" style="left:1863.1px;top:1093.5px;font-size:12.20px;line-height:1;color:#d8cd45;font-weight:bold;letter-spacing:-0.3px">JS</div><div class="a nw" style="left:1886.2px;top:1092.3px;font-size:14.90px;line-height:1;color:#cccccc;">providers.js</div><svg class="a" style="left:1830.4px;top:1121.5px;" width="12" height="8" viewBox="0 0 12 8"><path d="M1 1.5 6 6.5 11 1.5" fill="none" stroke="#c5c5c5" stroke-width="1.2"/></svg><svg class="a" style="left:1850.0px;top:1117.0px;" width="18" height="17" viewBox="0 0 18 17"><path d="M1 3.5c0-.8.6-1.4 1.4-1.4h4.2l1.6 1.8h7.4c.8 0 1.4.6 1.4 1.4v8.3c0 .8-.6 1.4-1.4 1.4H2.4c-.8 0-1.4-.6-1.4-1.4z" fill="#c9a26a"/><path d="M10.5 6.5l4 2v4l-4 2-4-2v-4z" fill="#ffb300"/><path d="M6.5 8.5l4 2 4-2M10.5 10.5v4" fill="none" stroke="#ffe082" stroke-width=".8"/></svg><div class="a nw" style="left:1876.6px;top:1118.6px;font-size:14.90px;line-height:1;color:#cccccc;">components</div><svg class="a" style="left:1840.0px;top:1147.9px;" width="12" height="8" viewBox="0 0 12 8"><path d="M1 1.5 6 6.5 11 1.5" fill="none" stroke="#c5c5c5" stroke-width="1.2"/></svg><svg class="a" style="left:1859.6px;top:1143.4px;" width="18" height="17" viewBox="0 0 18 17"><path d="M1 3.5c0-.8.6-1.4 1.4-1.4h4.2l1.6 1.8h6.4c.8 0 1.4.6 1.4 1.4V6H5.2L2.6 14H2.4c-.8 0-1.4-.6-1.4-1.4z" fill="#c09553"/><path d="M5 6.5h12.3l-2.8 7.5H2.4z" fill="#dcb67a"/></svg><div class="a nw" style="left:1886.2px;top:1145.0px;font-size:14.90px;line-height:1;color:#cccccc;">commonComponent</div><div class="a nw" style="left:1872.7px;top:1172.6px;font-size:12.20px;line-height:1;color:#d8cd45;font-weight:bold;letter-spacing:-0.3px">JS</div><div class="a nw" style="left:1895.8px;top:1171.4px;font-size:14.90px;line-height:1;color:#cccccc;">Header.js</div><svg class="a" style="left:1842.0px;top:1198.6px;" width="8" height="12" viewBox="0 0 8 12"><path d="M1.5 1 6.5 6 1.5 11" fill="none" stroke="#c5c5c5" stroke-width="1.2"/></svg><svg class="a" style="left:1859.6px;top:1196.1px;" width="18" height="17" viewBox="0 0 18 17"><path d="M1 3.5c0-.8.6-1.4 1.4-1.4h4.2l1.6 1.8h7.4c.8 0 1.4.6 1.4 1.4v8.3c0 .8-.6 1.4-1.4 1.4H2.4c-.8 0-1.4-.6-1.4-1.4z" fill="#c9a26a"/><path d="M10.5 6.5l4 2v4l-4 2-4-2v-4z" fill="#ffb300"/><path d="M6.5 8.5l4 2 4-2M10.5 10.5v4" fill="none" stroke="#ffe082" stroke-width=".8"/></svg><div class="a nw" style="left:1886.2px;top:1197.7px;font-size:14.90px;line-height:1;color:#cccccc;">ui</div><div class="a nw" style="left:1863.1px;top:1225.3px;font-size:12.20px;line-height:1;color:#d8cd45;font-weight:bold;letter-spacing:-0.3px">JS</div><div class="a nw" style="left:1886.2px;top:1224.1px;font-size:14.90px;line-height:1;color:#cccccc;">addProjectModal.js</div><div class="a nw" style="left:1863.1px;top:1251.7px;font-size:12.20px;line-height:1;color:#d8cd45;font-weight:bold;letter-spacing:-0.3px">JS</div><div class="a nw" style="left:1886.2px;top:1250.5px;font-size:14.90px;line-height:1;color:#cccccc;">AddTaskModal.js</div><div class="a nw" style="left:1863.1px;top:1278.1px;font-size:12.20px;line-height:1;color:#d8cd45;font-weight:bold;letter-spacing:-0.3px">JS</div><div class="a nw" style="left:1886.2px;top:1276.8px;font-size:14.90px;line-height:1;color:#cccccc;">AddUserModal.js</div><div class="a" style="left:1800.0px;top:242.0px;width:337.0px;height:6.0px;background:linear-gradient(#0f0f0f,rgba(24,24,24,0))"></div><div class="a" style="left:1800.0px;top:1295.1px;width:337.0px;height:1.0px;background:#2b2b2b"></div><svg class="a" style="left:1807.6px;top:1301.9px;" width="8" height="12" viewBox="0 0 8 12"><path d="M1.5 1 6.5 6 1.5 11" fill="none" stroke="#c5c5c5" stroke-width="1.2"/></svg><div class="a nw" style="left:1823.7px;top:1301.7px;font-size:13.10px;line-height:1;color:#cccccc;font-weight:bold;">OUTLINE</div><div class="a" style="left:1800.0px;top:1322.1px;width:337.0px;height:1.0px;background:#2b2b2b"></div><svg class="a" style="left:1807.6px;top:1328.9px;" width="8" height="12" viewBox="0 0 8 12"><path d="M1.5 1 6.5 6 1.5 11" fill="none" stroke="#c5c5c5" stroke-width="1.2"/></svg><div class="a nw" style="left:1823.7px;top:1328.7px;font-size:13.10px;line-height:1;color:#cccccc;font-weight:bold;">TIMELINE</div><div class="a" style="left:1800.0px;top:1348.2px;width:337.0px;height:1.0px;background:#2b2b2b"></div><svg class="a" style="left:1807.6px;top:1355.0px;" width="8" height="12" viewBox="0 0 8 12"><path d="M1.5 1 6.5 6 1.5 11" fill="none" stroke="#c5c5c5" stroke-width="1.2"/></svg><div class="a nw" style="left:1823.7px;top:1354.8px;font-size:13.10px;line-height:1;color:#cccccc;font-weight:bold;">RUNNING TASKS</div><div class="a" style="left:2138.1px;top:42.0px;width:1302.4px;height:948.0px;background:#1f1f1f"></div><div class="a" style="left:2138.1px;top:42.0px;width:1302.4px;height:41.2px;background:#181818"></div><div class="a" style="left:2138.1px;top:82.6px;width:1302.4px;height:1.0px;background:#2b2b2b"></div><div class="a nw" style="left:2140px;top:55.5px;font-size:14.9px;line-height:17px;color:#e2c08d">route.js&nbsp;&nbsp;<span style="font-size:13.4px">...\screenshot-data</span></div><div class="a nw" style="left:2318.7px;top:57.9px;font-size:13.20px;line-height:1;color:#e2c08d;font-weight:bold;">M</div><div class="a" style="left:2364.3px;top:42.0px;width:1.0px;height:41.0px;background:#2b2b2b"></div><div class="a nw" style="left:2379.4px;top:58.0px;font-size:12.20px;line-height:1;color:#d8cd45;font-weight:bold;letter-spacing:-0.3px">JS</div><div class="a nw" style="left:2404.3px;top:55.5px;font-size:14.9px;line-height:17px;color:#73c991">route.js&nbsp;&nbsp;<span style="font-size:13.4px">...\[taskId]</span></div><div class="a nw" style="left:2528.9px;top:57.9px;font-size:13.20px;line-height:1;color:#73c991;font-weight:bold;">U</div><div class="a" style="left:2573.0px;top:42.0px;width:259.0px;height:41.6px;background:#1f1f1f"></div><div class="a" style="left:2573.0px;top:42.0px;width:259.0px;height:1.6px;background:#0078d4"></div><div class="a" style="left:2573.0px;top:42.0px;width:1.0px;height:41.0px;background:#2b2b2b"></div><div class="a" style="left:2832.0px;top:42.0px;width:1.0px;height:41.0px;background:#2b2b2b"></div><div class="a nw" style="left:2587.5px;top:58.0px;font-size:12.20px;line-height:1;color:#d8cd45;font-weight:bold;letter-spacing:-0.3px">JS</div><div class="a nw" style="left:2611.7px;top:56.8px;font-size:14.70px;line-height:1;color:#e2c08d;">screenshotDataService.js</div><div class="a nw" style="left:2786.4px;top:57.9px;font-size:13.20px;line-height:1;color:#e2c08d;font-weight:bold;">M</div><svg class="a" style="left:2809.5px;top:58.5px;" width="12" height="12" viewBox="0 0 12 12"><path d="M1 1l10 10M11 1 1 11" stroke="#e8e8e8" stroke-width="1.4"/></svg><div class="a nw" style="left:2847.0px;top:58.0px;font-size:12.20px;line-height:1;color:#d8cd45;font-weight:bold;letter-spacing:-0.3px">JS</div><div class="a nw" style="left:2872.0px;top:56.8px;font-size:14.90px;line-height:1;color:#a8a8a8;">Task.js</div><div class="a" style="left:2976.3px;top:42.0px;width:1.0px;height:41.0px;background:#2b2b2b"></div><div class="a nw" style="left:2991.3px;top:58.0px;font-size:12.20px;line-height:1;color:#d8cd45;font-weight:bold;letter-spacing:-0.3px">JS</div><div class="a nw" style="left:3015.7px;top:57.0px;font-size:14.30px;line-height:1;color:#e2c08d;font-style:italic">Screenshot.js</div><div class="a nw" style="left:3109.2px;top:57.9px;font-size:13.20px;line-height:1;color:#e2c08d;font-weight:bold;">M</div><div class="a" style="left:3155.3px;top:42.0px;width:1.0px;height:41.0px;background:#2b2b2b"></div><div class="a nw" style="left:3170.3px;top:58.0px;font-size:12.20px;line-height:1;color:#d8cd45;font-weight:bold;letter-spacing:-0.3px">JS</div><div class="a nw" style="left:3194.4px;top:55.5px;font-size:14.9px;line-height:17px;color:#a8a8a8;width:112px;overflow:hidden">projectService.js</div><div class="a" style="left:3310.0px;top:42.0px;width:130.0px;height:40.6px;background:#181818"></div><svg class="a" style="left:3318.5px;top:55.0px;" width="16" height="17" viewBox="0 0 16 17"><path d="M2 1.5v14l12-7z" fill="none" stroke="#ccc" stroke-width="1.4" stroke-linejoin="round"/></svg><svg class="a" style="left:3349.0px;top:54.0px;" width="19" height="19" viewBox="0 0 19 19"><path d="M5 3v9M14 16V7" stroke="#ccc" stroke-width="1.4"/><circle cx="5" cy="15" r="2.3" fill="none" stroke="#ccc" stroke-width="1.4"/><circle cx="14" cy="4" r="2.3" fill="none" stroke="#ccc" stroke-width="1.4"/><path d="M8 6.5 5 3.5 8 .8M11 12.5l3 3-3 2.7" fill="none" stroke="#ccc" stroke-width="1.3"/><path d="M5 3.5h4c2.5 0 5 1 5 3.5M14 15.5h-4c-2.5 0-5-1-5-3.5" fill="none" stroke="#ccc" stroke-width="1.3"/></svg><svg class="a" style="left:3382.0px;top:55.0px;" width="17" height="17" viewBox="0 0 17 17"><rect x=".7" y=".7" width="15.6" height="15.6" rx="1.5" fill="none" stroke="#ccc" stroke-width="1.4"/><path d="M8.5 1v15" stroke="#ccc" stroke-width="1.4"/></svg><svg class="a" style="left:3413.0px;top:62.0px;" width="16" height="3" viewBox="0 0 16 3"><circle cx="1.5" cy="1.5" r="1.4" fill="#ccc"/><circle cx="8" cy="1.5" r="1.4" fill="#ccc"/><circle cx="14.5" cy="1.5" r="1.4" fill="#ccc"/></svg><div class="a nw" style="left:2157.4px;top:90.8px;font-size:14.90px;line-height:1;color:#a9a9a9;">src</div><div class="a nw" style="left:2195.8px;top:90.8px;font-size:14.90px;line-height:1;color:#a9a9a9;">app</div><div class="a nw" style="left:2241.5px;top:90.8px;font-size:14.90px;line-height:1;color:#a9a9a9;">services</div><div class="a nw" style="left:2313.6px;top:90.8px;font-size:14.90px;line-height:1;color:#a9a9a9;">screenshotData</div><div class="a nw" style="left:2466.4px;top:90.8px;font-size:14.90px;line-height:1;color:#a9a9a9;">screenshotDataService.js</div><div class="a nw" style="left:2676.4px;top:90.8px;font-size:14.90px;line-height:1;color:#a9a9a9;">ScreenshotDataService</div><div class="a nw" style="left:2875.5px;top:90.8px;font-size:14.90px;line-height:1;color:#a9a9a9;">getAllScreenshotData</div><svg class="a" style="left:2181.5px;top:91.5px;" width="7" height="13" viewBox="0 0 7 13"><path d="M1 1l5 5.5L1 12" fill="none" stroke="#a9a9a9" stroke-width="1.1"/></svg><svg class="a" style="left:2226.5px;top:91.5px;" width="7" height="13" viewBox="0 0 7 13"><path d="M1 1l5 5.5L1 12" fill="none" stroke="#a9a9a9" stroke-width="1.1"/></svg><svg class="a" style="left:2300.0px;top:91.5px;" width="7" height="13" viewBox="0 0 7 13"><path d="M1 1l5 5.5L1 12" fill="none" stroke="#a9a9a9" stroke-width="1.1"/></svg><svg class="a" style="left:2426.5px;top:91.5px;" width="7" height="13" viewBox="0 0 7 13"><path d="M1 1l5 5.5L1 12" fill="none" stroke="#a9a9a9" stroke-width="1.1"/></svg><svg class="a" style="left:2640.0px;top:91.5px;" width="7" height="13" viewBox="0 0 7 13"><path d="M1 1l5 5.5L1 12" fill="none" stroke="#a9a9a9" stroke-width="1.1"/></svg><svg class="a" style="left:2839.0px;top:91.5px;" width="7" height="13" viewBox="0 0 7 13"><path d="M1 1l5 5.5L1 12" fill="none" stroke="#a9a9a9" stroke-width="1.1"/></svg><div class="a nw" style="left:2441.2px;top:91.9px;font-size:12.20px;line-height:1;color:#d8cd45;font-weight:bold;letter-spacing:-0.3px">JS</div><svg class="a" style="left:2654.5px;top:89.5px;" width="18" height="17" viewBox="0 0 18 17"><path d="M1.5 4.5 5 1.5l3 3-3.5 3z" fill="none" stroke="#ee9d28" stroke-width="1.3" stroke-linejoin="round"/><path d="M10.5 9 13 6.5l3 3-2.5 2.5zM10.5 13.5 13 11l3 3-2.5 2.5z" fill="none" stroke="#ee9d28" stroke-width="1.3" stroke-linejoin="round"/><path d="M5 7.5v7h5.5M5 10.5h5.5" fill="none" stroke="#ee9d28" stroke-width="1.3"/></svg><svg class="a" style="left:2853.5px;top:89.5px;" width="16" height="17" viewBox="0 0 16 17"><path d="M8 1 14.5 4.5v8L8 16 1.5 12.5v-8z" fill="none" stroke="#b180d7" stroke-width="1.3" stroke-linejoin="round"/><path d="M1.8 4.7 8 8.2l6.2-3.5M8 8.2V16" fill="none" stroke="#b180d7" stroke-width="1.3"/></svg><div class="a" style="left:2138px;top:110px;width:1175px;height:880px;overflow:hidden"><div class="a" style="left:78.0px;top:621.4px;width:1097.0px;height:19.8px;border-top:1.6px solid #2a2a2a;border-bottom:1.6px solid #2a2a2a"></div><div class="a" style="left:0;top:38.5px;width:46.8px;text-align:right;font-family:'Liberation Mono';font-size:14.27px;line-height:21.6px;color:#6e7681">22</div><div class="a" style="left:52.8px;top:36.9px;width:4.6px;height:21.7px;background:repeating-linear-gradient(-45deg,#0c7ad0 0 1.8px,#1f1f1f 1.8px 3.2px)"></div><div class="a" style="left:78.8px;top:36.9px;width:1.0px;height:21.7px;background:#404040"></div><div class="a nw" style="left:95.4px;top:38.5px;font-family:'Liberation Mono';font-size:14.27px;line-height:21.6px;white-space:pre"><span style="color:#9cdcfe">task_id</span><span style="color:#cccccc">,</span></div><div class="a" style="left:0;top:60.1px;width:46.8px;text-align:right;font-family:'Liberation Mono';font-size:14.27px;line-height:21.6px;color:#6e7681">23</div><div class="a" style="left:52.8px;top:58.5px;width:4.6px;height:21.7px;background:repeating-linear-gradient(-45deg,#0c7ad0 0 1.8px,#1f1f1f 1.8px 3.2px)"></div><div class="a" style="left:78.8px;top:58.5px;width:1.0px;height:21.7px;background:#404040"></div><div class="a nw" style="left:95.4px;top:60.1px;font-family:'Liberation Mono';font-size:14.27px;line-height:21.6px;white-space:pre"><span style="color:#9cdcfe">timestamp</span><span style="color:#cccccc">, </span><span style="color:#6a9955">// "11:58:07 AM"</span></div><div class="a" style="left:0;top:81.7px;width:46.8px;text-align:right;font-family:'Liberation Mono';font-size:14.27px;line-height:21.6px;color:#6e7681">24</div><div class="a" style="left:52.8px;top:80.1px;width:4.6px;height:21.7px;background:repeating-linear-gradient(-45deg,#0c7ad0 0 1.8px,#1f1f1f 1.8px 3.2px)"></div><div class="a" style="left:78.8px;top:80.1px;width:1.0px;height:21.7px;background:#404040"></div><div class="a nw" style="left:95.4px;top:81.7px;font-family:'Liberation Mono';font-size:14.27px;line-height:21.6px;white-space:pre"><span style="color:#9cdcfe">idleSeconds</span><span style="color:#cccccc">,</span></div><div class="a" style="left:0;top:103.3px;width:46.8px;text-align:right;font-family:'Liberation Mono';font-size:14.27px;line-height:21.6px;color:#6e7681">25</div><div class="a" style="left:52.8px;top:101.7px;width:4.6px;height:21.7px;background:repeating-linear-gradient(-45deg,#0c7ad0 0 1.8px,#1f1f1f 1.8px 3.2px)"></div><div class="a" style="left:78.8px;top:101.7px;width:1.0px;height:21.7px;background:#404040"></div><div class="a nw" style="left:95.4px;top:103.3px;font-family:'Liberation Mono';font-size:14.27px;line-height:21.6px;white-space:pre"><span style="color:#9cdcfe">activeSeconds</span><span style="color:#cccccc">,</span></div><div class="a" style="left:0;top:124.9px;width:46.8px;text-align:right;font-family:'Liberation Mono';font-size:14.27px;line-height:21.6px;color:#6e7681">26</div><div class="a" style="left:52.8px;top:123.3px;width:4.6px;height:21.7px;background:repeating-linear-gradient(-45deg,#0c7ad0 0 1.8px,#1f1f1f 1.8px 3.2px)"></div><div class="a nw" style="left:78.3px;top:124.9px;font-family:'Liberation Mono';font-size:14.27px;line-height:21.6px;white-space:pre"><span style="color:#179fff">}</span><span style="color:#da70d6">)</span><span style="color:#cccccc"> </span><span style="color:#da70d6">{</span></div><div class="a" style="left:0;top:146.5px;width:46.8px;text-align:right;font-family:'Liberation Mono';font-size:14.27px;line-height:21.6px;color:#6e7681">27</div><div class="a" style="left:52.8px;top:144.9px;width:4.6px;height:21.7px;background:repeating-linear-gradient(-45deg,#0c7ad0 0 1.8px,#1f1f1f 1.8px 3.2px)"></div><div class="a" style="left:78.8px;top:144.9px;width:1.0px;height:21.7px;background:#404040"></div><div class="a nw" style="left:95.4px;top:146.5px;font-family:'Liberation Mono';font-size:14.27px;line-height:21.6px;white-space:pre"><span style="color:#c586c0">await</span><span style="color:#cccccc"> </span><span style="color:#569cd6">this</span><span style="color:#cccccc">.</span><span style="color:#dcdcaa">initializeRepositories</span><span style="color:#179fff">()</span><span style="color:#cccccc">;</span></div><div class="a" style="left:0;top:168.2px;width:46.8px;text-align:right;font-family:'Liberation Mono';font-size:14.27px;line-height:21.6px;color:#6e7681">28</div><div class="a" style="left:52.8px;top:166.6px;width:4.6px;height:21.7px;background:repeating-linear-gradient(-45deg,#0c7ad0 0 1.8px,#1f1f1f 1.8px 3.2px)"></div><div class="a" style="left:78.8px;top:166.6px;width:1.0px;height:21.7px;background:#404040"></div><div class="a nw" style="left:95.4px;top:168.2px;font-family:'Liberation Mono';font-size:14.27px;line-height:21.6px;white-space:pre"><span style="color:#6a9955">// Combine current date with the time string for maintaining with created_at column</span></div><div class="a" style="left:0;top:189.8px;width:46.8px;text-align:right;font-family:'Liberation Mono';font-size:14.27px;line-height:21.6px;color:#6e7681">29</div><div class="a" style="left:52.8px;top:188.2px;width:4.6px;height:21.7px;background:repeating-linear-gradient(-45deg,#0c7ad0 0 1.8px,#1f1f1f 1.8px 3.2px)"></div><div class="a" style="left:78.8px;top:188.2px;width:1.0px;height:21.7px;background:#404040"></div><div class="a nw" style="left:95.4px;top:189.8px;font-family:'Liberation Mono';font-size:14.27px;line-height:21.6px;white-space:pre"><span style="color:#569cd6">let</span><span style="color:#cccccc"> </span><span style="color:#9cdcfe">createdAt</span><span style="color:#cccccc">;</span></div><div class="a" style="left:0;top:211.4px;width:46.8px;text-align:right;font-family:'Liberation Mono';font-size:14.27px;line-height:21.6px;color:#6e7681">30</div><div class="a" style="left:52.8px;top:209.8px;width:4.6px;height:21.7px;background:repeating-linear-gradient(-45deg,#0c7ad0 0 1.8px,#1f1f1f 1.8px 3.2px)"></div><div class="a" style="left:78.8px;top:209.8px;width:1.0px;height:21.7px;background:#404040"></div><div class="a nw" style="left:95.4px;top:211.4px;font-family:'Liberation Mono';font-size:14.27px;line-height:21.6px;white-space:pre"><span style="color:#c586c0">if</span><span style="color:#cccccc"> </span><span style="color:#179fff">(</span><span style="color:#9cdcfe">timestamp</span><span style="color:#179fff">)</span><span style="color:#cccccc"> </span><span style="color:#179fff">{</span></div><div class="a" style="left:0;top:233.0px;width:46.8px;text-align:right;font-family:'Liberation Mono';font-size:14.27px;line-height:21.6px;color:#6e7681">31</div><div class="a" style="left:52.8px;top:231.4px;width:4.6px;height:21.7px;background:repeating-linear-gradient(-45deg,#0c7ad0 0 1.8px,#1f1f1f 1.8px 3.2px)"></div><div class="a" style="left:78.8px;top:231.4px;width:1.0px;height:21.7px;background:#404040"></div><div class="a" style="left:95.9px;top:231.4px;width:1.0px;height:21.7px;background:#404040"></div><div class="a nw" style="left:112.6px;top:233.0px;font-family:'Liberation Mono';font-size:14.27px;line-height:21.6px;white-space:pre"><span style="color:#569cd6">const</span><span style="color:#cccccc"> </span><span style="color:#9cdcfe">today</span><span style="color:#cccccc"> = </span><span style="color:#569cd6">new</span><span style="color:#cccccc"> </span><span style="color:#4ec9b0">Date</span><span style="color:#ffd700">()</span><span style="color:#cccccc">;</span></div><div class="a" style="left:0;top:254.6px;width:46.8px;text-align:right;font-family:'Liberation Mono';font-size:14.27px;line-height:21.6px;color:#6e7681">32</div><div class="a" style="left:52.8px;top:253.0px;width:4.6px;height:21.7px;background:repeating-linear-gradient(-45deg,#0c7ad0 0 1.8px,#1f1f1f 1.8px 3.2px)"></div><div class="a" style="left:78.8px;top:253.0px;width:1.0px;height:21.7px;background:#404040"></div><div class="a" style="left:95.9px;top:253.0px;width:1.0px;height:21.7px;background:#404040"></div><div class="a nw" style="left:112.6px;top:254.6px;font-family:'Liberation Mono';font-size:14.27px;line-height:21.6px;white-space:pre"><span style="color:#569cd6">const</span><span style="color:#cccccc"> </span><span style="color:#9cdcfe">dateString</span><span style="color:#cccccc"> = </span><span style="color:#9cdcfe">today</span><span style="color:#cccccc">.</span><span style="color:#dcdcaa">toISOString</span><span style="color:#ffd700">()</span><span style="color:#cccccc">.</span><span style="color:#dcdcaa">split</span><span style="color:#ffd700">(</span><span style="color:#ce9178">"T"</span><span style="color:#ffd700">)</span><span style="color:#ffd700">[</span><span style="color:#b5cea8">0</span><span style="color:#ffd700">]</span><span style="color:#cccccc">; </span><span style="color:#6a9955">// e.g. "2025-08-14"</span></div><div class="a" style="left:0;top:276.2px;width:46.8px;text-align:right;font-family:'Liberation Mono';font-size:14.27px;line-height:21.6px;color:#6e7681">33</div><div class="a" style="left:52.8px;top:274.6px;width:4.6px;height:21.7px;background:repeating-linear-gradient(-45deg,#0c7ad0 0 1.8px,#1f1f1f 1.8px 3.2px)"></div><div class="a" style="left:78.8px;top:274.6px;width:1.0px;height:21.7px;background:#404040"></div><div class="a" style="left:95.9px;top:274.6px;width:1.0px;height:21.7px;background:#404040"></div><div class="a nw" style="left:112.6px;top:276.2px;font-family:'Liberation Mono';font-size:14.27px;line-height:21.6px;white-space:pre"><span style="color:#9cdcfe">createdAt</span><span style="color:#cccccc"> = </span><span style="color:#569cd6">new</span><span style="color:#cccccc"> </span><span style="color:#4ec9b0">Date</span><span style="color:#ffd700">(</span><span style="color:#ce9178">`</span><span style="color:#da70d6">${</span><span style="color:#9cdcfe">dateString</span><span style="color:#da70d6">}</span><span style="color:#ce9178"> </span><span style="color:#da70d6">${</span><span style="color:#9cdcfe">timestamp</span><span style="color:#da70d6">}</span><span style="color:#ce9178">`</span><span style="color:#ffd700">)</span><span style="color:#cccccc">;</span></div><div class="a" style="left:0;top:297.8px;width:46.8px;text-align:right;font-family:'Liberation Mono';font-size:14.27px;line-height:21.6px;color:#6e7681">34</div><div class="a" style="left:52.8px;top:296.2px;width:4.6px;height:21.7px;background:repeating-linear-gradient(-45deg,#0c7ad0 0 1.8px,#1f1f1f 1.8px 3.2px)"></div><div class="a" style="left:78.8px;top:296.2px;width:1.0px;height:21.7px;background:#404040"></div><div class="a nw" style="left:95.4px;top:297.8px;font-family:'Liberation Mono';font-size:14.27px;line-height:21.6px;white-space:pre"><span style="color:#179fff">}</span></div><div class="a" style="left:0;top:319.4px;width:46.8px;text-align:right;font-family:'Liberation Mono';font-size:14.27px;line-height:21.6px;color:#6e7681">35</div><div class="a" style="left:52.8px;top:317.8px;width:4.6px;height:21.7px;background:repeating-linear-gradient(-45deg,#0c7ad0 0 1.8px,#1f1f1f 1.8px 3.2px)"></div><div class="a" style="left:78.8px;top:317.8px;width:1.0px;height:21.7px;background:#404040"></div><div class="a nw" style="left:95.4px;top:319.4px;font-family:'Liberation Mono';font-size:14.27px;line-height:21.6px;white-space:pre"><span style="color:#569cd6">const</span><span style="color:#cccccc"> </span><span style="color:#9cdcfe">screenshot</span><span style="color:#cccccc"> = </span><span style="color:#569cd6">this</span><span style="color:#cccccc">.</span><span style="color:#9cdcfe">screenshotRepo</span><span style="color:#cccccc">.</span><span style="color:#dcdcaa">create</span><span style="color:#179fff">(</span><span style="color:#ffd700">{</span></div><div class="a" style="left:0;top:341.0px;width:46.8px;text-align:right;font-family:'Liberation Mono';font-size:14.27px;line-height:21.6px;color:#6e7681">36</div><div class="a" style="left:52.8px;top:339.4px;width:4.6px;height:21.7px;background:repeating-linear-gradient(-45deg,#0c7ad0 0 1.8px,#1f1f1f 1.8px 3.2px)"></div><div class="a" style="left:78.8px;top:339.4px;width:1.0px;height:21.7px;background:#404040"></div><div class="a" style="left:95.9px;top:339.4px;width:1.0px;height:21.7px;background:#404040"></div><div class="a nw" style="left:112.6px;top:341.0px;font-family:'Liberation Mono';font-size:14.27px;line-height:21.6px;white-space:pre"><span style="color:#9cdcfe">screenshot_path</span><span style="color:#cccccc">: </span><span style="color:#9cdcfe">screenshotPath</span><span style="color:#cccccc">,</span></div><div class="a" style="left:0;top:362.6px;width:46.8px;text-align:right;font-family:'Liberation Mono';font-size:14.27px;line-height:21.6px;color:#6e7681">37</div><div class="a" style="left:52.8px;top:361.0px;width:4.6px;height:21.7px;background:repeating-linear-gradient(-45deg,#0c7ad0 0 1.8px,#1f1f1f 1.8px 3.2px)"></div><div class="a" style="left:78.8px;top:361.0px;width:1.0px;height:21.7px;background:#404040"></div><div class="a" style="left:95.9px;top:361.0px;width:1.0px;height:21.7px;background:#404040"></div><div class="a nw" style="left:112.6px;top:362.6px;font-family:'Liberation Mono';font-size:14.27px;line-height:21.6px;white-space:pre"><span style="color:#9cdcfe">idle_seconds</span><span style="color:#cccccc">: </span><span style="color:#9cdcfe">idleSeconds</span><span style="color:#cccccc">,</span></div><div class="a" style="left:0;top:384.2px;width:46.8px;text-align:right;font-family:'Liberation Mono';font-size:14.27px;line-height:21.6px;color:#6e7681">38</div><div class="a" style="left:52.8px;top:382.6px;width:4.6px;height:21.7px;background:repeating-linear-gradient(-45deg,#0c7ad0 0 1.8px,#1f1f1f 1.8px 3.2px)"></div><div class="a" style="left:78.8px;top:382.6px;width:1.0px;height:21.7px;background:#404040"></div><div class="a" style="left:95.9px;top:382.6px;width:1.0px;height:21.7px;background:#404040"></div><div class="a nw" style="left:112.6px;top:384.2px;font-family:'Liberation Mono';font-size:14.27px;line-height:21.6px;white-space:pre"><span style="color:#9cdcfe">active_seconds</span><span style="color:#cccccc">: </span><span style="color:#9cdcfe">activeSeconds</span><span style="color:#cccccc">,</span></div><div class="a" style="left:0;top:405.9px;width:46.8px;text-align:right;font-family:'Liberation Mono';font-size:14.27px;line-height:21.6px;color:#6e7681">39</div><div class="a" style="left:52.8px;top:404.3px;width:4.6px;height:21.7px;background:repeating-linear-gradient(-45deg,#0c7ad0 0 1.8px,#1f1f1f 1.8px 3.2px)"></div><div class="a" style="left:78.8px;top:404.3px;width:1.0px;height:21.7px;background:#404040"></div><div class="a" style="left:95.9px;top:404.3px;width:1.0px;height:21.7px;background:#404040"></div><div class="a nw" style="left:112.6px;top:405.9px;font-family:'Liberation Mono';font-size:14.27px;line-height:21.6px;white-space:pre"><span style="color:#9cdcfe">created_at</span><span style="color:#cccccc">: </span><span style="color:#9cdcfe">createdAt</span><span style="color:#cccccc">, </span><span style="color:#6a9955">// if not provided, DB default CURRENT_TIMESTAMP will be used</span></div><div class="a" style="left:0;top:427.5px;width:46.8px;text-align:right;font-family:'Liberation Mono';font-size:14.27px;line-height:21.6px;color:#6e7681">40</div><div class="a" style="left:52.8px;top:425.9px;width:4.6px;height:21.7px;background:repeating-linear-gradient(-45deg,#0c7ad0 0 1.8px,#1f1f1f 1.8px 3.2px)"></div><div class="a" style="left:78.8px;top:425.9px;width:1.0px;height:21.7px;background:#404040"></div><div class="a" style="left:95.9px;top:425.9px;width:1.0px;height:21.7px;background:#404040"></div><div class="a nw" style="left:112.6px;top:427.5px;font-family:'Liberation Mono';font-size:14.27px;line-height:21.6px;white-space:pre"><span style="color:#9cdcfe">task_rel</span><span style="color:#cccccc">: </span><span style="color:#9cdcfe">task_id</span><span style="color:#cccccc"> ? </span><span style="color:#da70d6">{</span><span style="color:#cccccc"> </span><span style="color:#9cdcfe">task_id</span><span style="color:#cccccc">: </span><span style="color:#4ec9b0">Number</span><span style="color:#179fff">(</span><span style="color:#9cdcfe">task_id</span><span style="color:#179fff">)</span><span style="color:#cccccc"> </span><span style="color:#da70d6">}</span><span style="color:#cccccc"> : </span><span style="color:#569cd6">null</span><span style="color:#cccccc">,</span></div><div class="a" style="left:0;top:449.1px;width:46.8px;text-align:right;font-family:'Liberation Mono';font-size:14.27px;line-height:21.6px;color:#6e7681">41</div><div class="a" style="left:52.8px;top:447.5px;width:4.6px;height:21.7px;background:repeating-linear-gradient(-45deg,#0c7ad0 0 1.8px,#1f1f1f 1.8px 3.2px)"></div><div class="a" style="left:78.8px;top:447.5px;width:1.0px;height:21.7px;background:#404040"></div><div class="a nw" style="left:95.4px;top:449.1px;font-family:'Liberation Mono';font-size:14.27px;line-height:21.6px;white-space:pre"><span style="color:#ffd700">}</span><span style="color:#179fff">)</span><span style="color:#cccccc">;</span></div><div class="a" style="left:0;top:470.7px;width:46.8px;text-align:right;font-family:'Liberation Mono';font-size:14.27px;line-height:21.6px;color:#6e7681">42</div><div class="a" style="left:52.8px;top:469.1px;width:4.6px;height:21.7px;background:repeating-linear-gradient(-45deg,#0c7ad0 0 1.8px,#1f1f1f 1.8px 3.2px)"></div><div class="a" style="left:78.8px;top:469.1px;width:1.0px;height:21.7px;background:#404040"></div><div class="a nw" style="left:95.4px;top:470.7px;font-family:'Liberation Mono';font-size:14.27px;line-height:21.6px;white-space:pre"><span style="color:#569cd6">const</span><span style="color:#cccccc"> </span><span style="color:#9cdcfe">savedScreenshot</span><span style="color:#cccccc"> = </span><span style="color:#c586c0">await</span><span style="color:#cccccc"> </span><span style="color:#569cd6">this</span><span style="color:#cccccc">.</span><span style="color:#9cdcfe">screenshotRepo</span><span style="color:#cccccc">.</span><span style="color:#dcdcaa">save</span><span style="color:#179fff">(</span><span style="color:#9cdcfe">screenshot</span><span style="color:#179fff">)</span><span style="color:#cccccc">;</span></div><div class="a" style="left:0;top:492.3px;width:46.8px;text-align:right;font-family:'Liberation Mono';font-size:14.27px;line-height:21.6px;color:#6e7681">43</div><div class="a" style="left:52.8px;top:490.7px;width:4.6px;height:21.7px;background:repeating-linear-gradient(-45deg,#0c7ad0 0 1.8px,#1f1f1f 1.8px 3.2px)"></div><div class="a" style="left:78.8px;top:490.7px;width:1.0px;height:21.7px;background:#404040"></div><div class="a nw" style="left:95.4px;top:492.3px;font-family:'Liberation Mono';font-size:14.27px;line-height:21.6px;white-space:pre"><span style="color:#c586c0">return</span><span style="color:#cccccc"> </span><span style="color:#9cdcfe">savedScreenshot</span><span style="color:#cccccc">;</span></div><div class="a" style="left:0;top:513.9px;width:46.8px;text-align:right;font-family:'Liberation Mono';font-size:14.27px;line-height:21.6px;color:#6e7681">44</div><div class="a" style="left:52.8px;top:512.3px;width:4.6px;height:21.7px;background:repeating-linear-gradient(-45deg,#0c7ad0 0 1.8px,#1f1f1f 1.8px 3.2px)"></div><div class="a nw" style="left:78.3px;top:513.9px;font-family:'Liberation Mono';font-size:14.27px;line-height:21.6px;white-space:pre"><span style="color:#da70d6">}</span></div><div class="a" style="left:0;top:535.5px;width:46.8px;text-align:right;font-family:'Liberation Mono';font-size:14.27px;line-height:21.6px;color:#6e7681">45</div><div class="a" style="left:52.8px;top:533.9px;width:4.6px;height:21.7px;background:repeating-linear-gradient(-45deg,#0c7ad0 0 1.8px,#1f1f1f 1.8px 3.2px)"></div><div class="a" style="left:78.8px;top:533.9px;width:1.0px;height:21.7px;background:#404040"></div><div class="a" style="left:0;top:557.1px;width:46.8px;text-align:right;font-family:'Liberation Mono';font-size:14.27px;line-height:21.6px;color:#6e7681">46</div><div class="a" style="left:52.8px;top:555.5px;width:4.6px;height:21.7px;background:repeating-linear-gradient(-45deg,#0c7ad0 0 1.8px,#1f1f1f 1.8px 3.2px)"></div><div class="a" style="left:78.8px;top:555.5px;width:1.0px;height:21.7px;background:#404040"></div><div class="a" style="left:0;top:578.7px;width:46.8px;text-align:right;font-family:'Liberation Mono';font-size:14.27px;line-height:21.6px;color:#6e7681">47</div><div class="a" style="left:52.8px;top:577.1px;width:4.6px;height:21.7px;background:repeating-linear-gradient(-45deg,#0c7ad0 0 1.8px,#1f1f1f 1.8px 3.2px)"></div><div class="a" style="left:78.8px;top:577.1px;width:1.0px;height:21.7px;background:#404040"></div><div class="a nw" style="left:95.4px;top:578.7px;font-family:'Liberation Mono';font-size:14.27px;line-height:21.6px;white-space:pre"><span style="color:#6a9955">// Get all screenshots (latest first)</span></div><div class="a" style="left:0;top:600.4px;width:46.8px;text-align:right;font-family:'Liberation Mono';font-size:14.27px;line-height:21.6px;color:#6e7681">48</div><div class="a" style="left:78.8px;top:598.8px;width:1.0px;height:21.7px;background:#404040"></div><div class="a nw" style="left:95.4px;top:600.4px;font-family:'Liberation Mono';font-size:14.27px;line-height:21.6px;white-space:pre"><span style="color:#569cd6">async</span><span style="color:#cccccc"> </span><span style="color:#dcdcaa">getAllScreenshotData</span><span style="color:#da70d6">()</span><span style="color:#cccccc"> </span><span style="color:#da70d6">{</span></div><div class="a" style="left:0;top:622.0px;width:46.8px;text-align:right;font-family:'Liberation Mono';font-size:14.27px;line-height:21.6px;color:#cccccc">49</div><div class="a" style="left:52.8px;top:620.4px;width:4.6px;height:21.7px;background:repeating-linear-gradient(-45deg,#0c7ad0 0 1.8px,#1f1f1f 1.8px 3.2px)"></div><div class="a" style="left:78.8px;top:620.4px;width:1.0px;height:21.7px;background:#404040"></div><div class="a" style="left:95.9px;top:620.4px;width:1.0px;height:21.7px;background:#707070"></div><div class="a nw" style="left:112.6px;top:622.0px;font-family:'Liberation Mono';font-size:14.27px;line-height:21.6px;white-space:pre"><span style="color:#c586c0">await</span><span style="color:#cccccc"> </span><span style="color:#569cd6">this</span><span style="color:#cccccc">.</span><span style="color:#dcdcaa">initializeRepositories</span><span style="color:#179fff">()</span><span style="color:#cccccc">;</span></div><div class="a" style="left:0;top:643.6px;width:46.8px;text-align:right;font-family:'Liberation Mono';font-size:14.27px;line-height:21.6px;color:#6e7681">50</div><div class="a" style="left:52.8px;top:642.0px;width:4.6px;height:21.7px;background:repeating-linear-gradient(-45deg,#0c7ad0 0 1.8px,#1f1f1f 1.8px 3.2px)"></div><div class="a" style="left:78.8px;top:642.0px;width:1.0px;height:21.7px;background:#404040"></div><div class="a" style="left:95.9px;top:642.0px;width:1.0px;height:21.7px;background:#707070"></div><div class="a" style="left:0;top:665.2px;width:46.8px;text-align:right;font-family:'Liberation Mono';font-size:14.27px;line-height:21.6px;color:#6e7681">51</div><div class="a" style="left:52.8px;top:663.6px;width:4.6px;height:21.7px;background:repeating-linear-gradient(-45deg,#0c7ad0 0 1.8px,#1f1f1f 1.8px 3.2px)"></div><div class="a" style="left:78.8px;top:663.6px;width:1.0px;height:21.7px;background:#404040"></div><div class="a" style="left:95.9px;top:663.6px;width:1.0px;height:21.7px;background:#707070"></div><div class="a nw" style="left:112.6px;top:665.2px;font-family:'Liberation Mono';font-size:14.27px;line-height:21.6px;white-space:pre"><span style="color:#c586c0">return</span><span style="color:#cccccc"> </span><span style="color:#569cd6">this</span><span style="color:#cccccc">.</span><span style="color:#9cdcfe">screenshotRepo</span></div><div class="a" style="left:0;top:686.8px;width:46.8px;text-align:right;font-family:'Liberation Mono';font-size:14.27px;line-height:21.6px;color:#6e7681">52</div><div class="a" style="left:52.8px;top:685.2px;width:4.6px;height:21.7px;background:repeating-linear-gradient(-45deg,#0c7ad0 0 1.8px,#1f1f1f 1.8px 3.2px)"></div><div class="a" style="left:78.8px;top:685.2px;width:1.0px;height:21.7px;background:#404040"></div><div class="a" style="left:95.9px;top:685.2px;width:1.0px;height:21.7px;background:#707070"></div><div class="a" style="left:113.1px;top:685.2px;width:1.0px;height:21.7px;background:#404040"></div><div class="a nw" style="left:129.7px;top:686.8px;font-family:'Liberation Mono';font-size:14.27px;line-height:21.6px;white-space:pre"><span style="color:#cccccc">.</span><span style="color:#dcdcaa">createQueryBuilder</span><span style="color:#179fff">(</span><span style="color:#ce9178">"screenshot"</span><span style="color:#179fff">)</span></div><div class="a" style="left:0;top:708.4px;width:46.8px;text-align:right;font-family:'Liberation Mono';font-size:14.27px;line-height:21.6px;color:#6e7681">53</div><div class="a" style="left:52.8px;top:706.8px;width:4.6px;height:21.7px;background:repeating-linear-gradient(-45deg,#0c7ad0 0 1.8px,#1f1f1f 1.8px 3.2px)"></div><div class="a" style="left:78.8px;top:706.8px;width:1.0px;height:21.7px;background:#404040"></div><div class="a" style="left:95.9px;top:706.8px;width:1.0px;height:21.7px;background:#707070"></div><div class="a" style="left:113.1px;top:706.8px;width:1.0px;height:21.7px;background:#404040"></div><div class="a nw" style="left:129.7px;top:708.4px;font-family:'Liberation Mono';font-size:14.27px;line-height:21.6px;white-space:pre"><span style="color:#cccccc">.</span><span style="color:#dcdcaa">leftJoin</span><span style="color:#179fff">(</span><span style="color:#ce9178">"screenshot.task_rel"</span><span style="color:#cccccc">, </span><span style="color:#ce9178">"task"</span><span style="color:#179fff">)</span></div><div class="a" style="left:0;top:730.0px;width:46.8px;text-align:right;font-family:'Liberation Mono';font-size:14.27px;line-height:21.6px;color:#6e7681">54</div><div class="a" style="left:52.8px;top:728.4px;width:4.6px;height:21.7px;background:repeating-linear-gradient(-45deg,#0c7ad0 0 1.8px,#1f1f1f 1.8px 3.2px)"></div><div class="a" style="left:78.8px;top:728.4px;width:1.0px;height:21.7px;background:#404040"></div><div class="a" style="left:95.9px;top:728.4px;width:1.0px;height:21.7px;background:#707070"></div><div class="a" style="left:113.1px;top:728.4px;width:1.0px;height:21.7px;background:#404040"></div><div class="a nw" style="left:129.7px;top:730.0px;font-family:'Liberation Mono';font-size:14.27px;line-height:21.6px;white-space:pre"><span style="color:#cccccc">.</span><span style="color:#dcdcaa">select</span><span style="color:#179fff">(</span><span style="color:#ffd700">[</span></div><div class="a" style="left:0;top:751.6px;width:46.8px;text-align:right;font-family:'Liberation Mono';font-size:14.27px;line-height:21.6px;color:#6e7681">55</div><div class="a" style="left:52.8px;top:750.0px;width:4.6px;height:21.7px;background:repeating-linear-gradient(-45deg,#0c7ad0 0 1.8px,#1f1f1f 1.8px 3.2px)"></div><div class="a" style="left:78.8px;top:750.0px;width:1.0px;height:21.7px;background:#404040"></div><div class="a" style="left:95.9px;top:750.0px;width:1.0px;height:21.7px;background:#707070"></div><div class="a" style="left:113.1px;top:750.0px;width:1.0px;height:21.7px;background:#404040"></div><div class="a" style="left:130.2px;top:750.0px;width:1.0px;height:21.7px;background:#404040"></div><div class="a nw" style="left:146.8px;top:751.6px;font-family:'Liberation Mono';font-size:14.27px;line-height:21.6px;white-space:pre"><span style="color:#ce9178">"screenshot.screenshot_id AS screenshot_id"</span><span style="color:#cccccc">,</span></div><div class="a" style="left:0;top:773.2px;width:46.8px;text-align:right;font-family:'Liberation Mono';font-size:14.27px;line-height:21.6px;color:#6e7681">56</div><div class="a" style="left:52.8px;top:771.6px;width:4.6px;height:21.7px;background:repeating-linear-gradient(-45deg,#0c7ad0 0 1.8px,#1f1f1f 1.8px 3.2px)"></div><div class="a" style="left:78.8px;top:771.6px;width:1.0px;height:21.7px;background:#404040"></div><div class="a" style="left:95.9px;top:771.6px;width:1.0px;height:21.7px;background:#707070"></div><div class="a" style="left:113.1px;top:771.6px;width:1.0px;height:21.7px;background:#404040"></div><div class="a" style="left:130.2px;top:771.6px;width:1.0px;height:21.7px;background:#404040"></div><div class="a nw" style="left:146.8px;top:773.2px;font-family:'Liberation Mono';font-size:14.27px;line-height:21.6px;white-space:pre"><span style="color:#ce9178">"screenshot.screenshot_path AS screenshot_path"</span><span style="color:#cccccc">,</span></div><div class="a" style="left:0;top:794.8px;width:46.8px;text-align:right;font-family:'Liberation Mono';font-size:14.27px;line-height:21.6px;color:#6e7681">57</div><div class="a" style="left:52.8px;top:793.2px;width:4.6px;height:21.7px;background:repeating-linear-gradient(-45deg,#0c7ad0 0 1.8px,#1f1f1f 1.8px 3.2px)"></div><div class="a" style="left:78.8px;top:793.2px;width:1.0px;height:21.7px;background:#404040"></div><div class="a" style="left:95.9px;top:793.2px;width:1.0px;height:21.7px;background:#707070"></div><div class="a" style="left:113.1px;top:793.2px;width:1.0px;height:21.7px;background:#404040"></div><div class="a" style="left:130.2px;top:793.2px;width:1.0px;height:21.7px;background:#404040"></div><div class="a nw" style="left:146.8px;top:794.8px;font-family:'Liberation Mono';font-size:14.27px;line-height:21.6px;white-space:pre"><span style="color:#ce9178">"screenshot.idle_seconds AS idle_seconds"</span><span style="color:#cccccc">,</span></div><div class="a" style="left:0;top:816.5px;width:46.8px;text-align:right;font-family:'Liberation Mono';font-size:14.27px;line-height:21.6px;color:#6e7681">58</div><div class="a" style="left:52.8px;top:814.9px;width:4.6px;height:21.7px;background:repeating-linear-gradient(-45deg,#0c7ad0 0 1.8px,#1f1f1f 1.8px 3.2px)"></div><div class="a" style="left:78.8px;top:814.9px;width:1.0px;height:21.7px;background:#404040"></div><div class="a" style="left:95.9px;top:814.9px;width:1.0px;height:21.7px;background:#707070"></div><div class="a" style="left:113.1px;top:814.9px;width:1.0px;height:21.7px;background:#404040"></div><div class="a" style="left:130.2px;top:814.9px;width:1.0px;height:21.7px;background:#404040"></div><div class="a nw" style="left:146.8px;top:816.5px;font-family:'Liberation Mono';font-size:14.27px;line-height:21.6px;white-space:pre"><span style="color:#ce9178">"screenshot.active_seconds AS active_seconds"</span><span style="color:#cccccc">,</span></div><div class="a" style="left:0;top:838.1px;width:46.8px;text-align:right;font-family:'Liberation Mono';font-size:14.27px;line-height:21.6px;color:#6e7681">59</div><div class="a" style="left:52.8px;top:836.5px;width:4.6px;height:21.7px;background:repeating-linear-gradient(-45deg,#0c7ad0 0 1.8px,#1f1f1f 1.8px 3.2px)"></div><div class="a" style="left:78.8px;top:836.5px;width:1.0px;height:21.7px;background:#404040"></div><div class="a" style="left:95.9px;top:836.5px;width:1.0px;height:21.7px;background:#707070"></div><div class="a" style="left:113.1px;top:836.5px;width:1.0px;height:21.7px;background:#404040"></div><div class="a" style="left:130.2px;top:836.5px;width:1.0px;height:21.7px;background:#404040"></div><div class="a nw" style="left:146.8px;top:838.1px;font-family:'Liberation Mono';font-size:14.27px;line-height:21.6px;white-space:pre"><span style="color:#ce9178">"screenshot.created_at AS created_at"</span><span style="color:#cccccc">,</span></div><div class="a" style="left:0;top:859.7px;width:46.8px;text-align:right;font-family:'Liberation Mono';font-size:14.27px;line-height:21.6px;color:#6e7681">60</div><div class="a" style="left:52.8px;top:858.1px;width:4.6px;height:21.7px;background:repeating-linear-gradient(-45deg,#0c7ad0 0 1.8px,#1f1f1f 1.8px 3.2px)"></div><div class="a" style="left:78.8px;top:858.1px;width:1.0px;height:21.7px;background:#404040"></div><div class="a" style="left:95.9px;top:858.1px;width:1.0px;height:21.7px;background:#707070"></div><div class="a" style="left:113.1px;top:858.1px;width:1.0px;height:21.7px;background:#404040"></div><div class="a" style="left:130.2px;top:858.1px;width:1.0px;height:21.7px;background:#404040"></div><div class="a nw" style="left:146.8px;top:859.7px;font-family:'Liberation Mono';font-size:14.27px;line-height:21.6px;white-space:pre"><span style="color:#ce9178">"task.task_id AS task_id"</span><span style="color:#cccccc">,</span></div></div><div class="a" style="left:2138.0px;top:110.0px;width:1175.0px;height:43.6px;background:#1f1f1f"></div><div class="a" style="left:2138.0px;top:153.6px;width:1175.0px;height:5.0px;background:linear-gradient(rgba(0,0,0,.55),rgba(0,0,0,0))"></div><div class="a" style="left:2138px;top:111.2px;width:46.8px;text-align:right;font-family:'Liberation Mono';font-size:14.27px;line-height:21.6px;color:#6e7681">5</div><div class="a nw" style="left:2216.3px;top:111.2px;font-family:'Liberation Mono';font-size:14.27px;line-height:21.6px;white-space:pre"><span style="color:#c586c0">export</span><span style="color:#cccccc"> </span><span style="color:#569cd6">class</span><span style="color:#cccccc"> </span><span style="color:#4ec9b0">ScreenshotDataService</span><span style="color:#cccccc"> </span><span style="color:#ffd700">{</span></div><div class="a" style="left:2138px;top:132.8px;width:46.8px;text-align:right;font-family:'Liberation Mono';font-size:14.27px;line-height:21.6px;color:#6e7681">20</div><div class="a nw" style="left:2216.3px;top:132.8px;font-family:'Liberation Mono';font-size:14.27px;line-height:21.6px;white-space:pre"><span style="color:#569cd6">async</span><span style="color:#cccccc"> </span><span style="color:#dcdcaa">createScreenshotData</span><span style="color:#da70d6">(</span><span style="color:#179fff">{</span></div><svg class="a" style="left:3320.8px;top:109.5px;" width="100" height="170" viewBox="0 0 100 170"><rect x="0.0" y="1.00" width="6.0" height="1.3" fill="#c586c0" opacity=".5"/><rect x="6.0" y="1.00" width="16.0" height="1.3" fill="#9cdcfe" opacity=".5"/><rect x="22.0" y="1.00" width="4.0" height="1.3" fill="#c586c0" opacity=".5"/><rect x="26.0" y="1.00" width="30.0" height="1.3" fill="#ce9178" opacity=".5"/><rect x="0.0" y="3.04" width="6.0" height="1.3" fill="#c586c0" opacity=".5"/><rect x="6.0" y="3.04" width="16.0" height="1.3" fill="#9cdcfe" opacity=".5"/><rect x="22.0" y="3.04" width="4.0" height="1.3" fill="#c586c0" opacity=".5"/><rect x="26.0" y="3.04" width="37.0" height="1.3" fill="#ce9178" opacity=".5"/><rect x="63.0" y="3.04" width="26.0" height="1.3" fill="#6a9955" opacity=".5"/><rect x="0.0" y="5.08" width="6.0" height="1.3" fill="#c586c0" opacity=".5"/><rect x="6.0" y="5.08" width="10.0" height="1.3" fill="#9cdcfe" opacity=".5"/><rect x="16.0" y="5.08" width="4.0" height="1.3" fill="#c586c0" opacity=".5"/><rect x="20.0" y="5.08" width="32.0" height="1.3" fill="#ce9178" opacity=".5"/><rect x="0.0" y="9.16" width="12.0" height="1.3" fill="#569cd6" opacity=".5"/><rect x="12.0" y="9.16" width="22.0" height="1.3" fill="#4ec9b0" opacity=".5"/><rect x="34.0" y="9.16" width="2.0" height="1.3" fill="#cccccc" opacity=".5"/><rect x="2.0" y="11.20" width="11.0" height="1.3" fill="#569cd6" opacity=".5"/><rect x="13.0" y="11.20" width="4.0" height="1.3" fill="#cccccc" opacity=".5"/><rect x="4.0" y="13.24" width="4.0" height="1.3" fill="#569cd6" opacity=".5"/><rect x="8.0" y="13.24" width="15.0" height="1.3" fill="#9cdcfe" opacity=".5"/><rect x="23.0" y="13.24" width="8.0" height="1.3" fill="#569cd6" opacity=".5"/><rect x="4.0" y="15.28" width="4.0" height="1.3" fill="#569cd6" opacity=".5"/><rect x="8.0" y="15.28" width="9.0" height="1.3" fill="#9cdcfe" opacity=".5"/><rect x="17.0" y="15.28" width="8.0" height="1.3" fill="#569cd6" opacity=".5"/><rect x="2.0" y="17.32" width="1.0" height="1.3" fill="#cccccc" opacity=".5"/><rect x="2.0" y="21.40" width="5.0" height="1.3" fill="#569cd6" opacity=".5"/><rect x="7.0" y="21.40" width="23.0" height="1.3" fill="#dcdcaa" opacity=".5"/><rect x="30.0" y="21.40" width="4.0" height="1.3" fill="#cccccc" opacity=".5"/><rect x="4.0" y="23.44" width="2.0" height="1.3" fill="#c586c0" opacity=".5"/><rect x="6.0" y="23.44" width="26.0" height="1.3" fill="#9cdcfe" opacity=".5"/><rect x="32.0" y="23.44" width="14.0" height="1.3" fill="#9cdcfe" opacity=".5"/><rect x="46.0" y="23.44" width="3.0" height="1.3" fill="#cccccc" opacity=".5"/><rect x="6.0" y="25.48" width="5.0" height="1.3" fill="#569cd6" opacity=".5"/><rect x="11.0" y="25.48" width="11.0" height="1.3" fill="#9cdcfe" opacity=".5"/><rect x="22.0" y="25.48" width="3.0" height="1.3" fill="#cccccc" opacity=".5"/><rect x="25.0" y="25.48" width="5.0" height="1.3" fill="#c586c0" opacity=".5"/><rect x="30.0" y="25.48" width="21.0" height="1.3" fill="#dcdcaa" opacity=".5"/><rect x="51.0" y="25.48" width="3.0" height="1.3" fill="#cccccc" opacity=".5"/><rect x="6.0" y="27.52" width="4.0" height="1.3" fill="#569cd6" opacity=".5"/><rect x="10.0" y="27.52" width="29.0" height="1.3" fill="#9cdcfe" opacity=".5"/><rect x="39.0" y="27.52" width="13.0" height="1.3" fill="#dcdcaa" opacity=".5"/><rect x="52.0" y="27.52" width="13.0" height="1.3" fill="#4ec9b0" opacity=".5"/><rect x="6.0" y="29.56" width="4.0" height="1.3" fill="#569cd6" opacity=".5"/><rect x="10.0" y="29.56" width="23.0" height="1.3" fill="#9cdcfe" opacity=".5"/><rect x="33.0" y="29.56" width="13.0" height="1.3" fill="#dcdcaa" opacity=".5"/><rect x="46.0" y="29.56" width="7.0" height="1.3" fill="#4ec9b0" opacity=".5"/><rect x="4.0" y="31.60" width="1.0" height="1.3" fill="#cccccc" opacity=".5"/><rect x="2.0" y="33.64" width="1.0" height="1.3" fill="#cccccc" opacity=".5"/><rect x="2.0" y="37.72" width="33.0" height="1.3" fill="#6a9955" opacity=".5"/><rect x="0.0" y="39.76" width="5.0" height="1.3" fill="#569cd6" opacity=".5"/><rect x="5.0" y="39.76" width="21.0" height="1.3" fill="#dcdcaa" opacity=".5"/><rect x="26.0" y="39.76" width="2.0" height="1.3" fill="#cccccc" opacity=".5"/><rect x="2.0" y="41.80" width="15.0" height="1.3" fill="#9cdcfe" opacity=".5"/><rect x="2.0" y="43.84" width="7.0" height="1.3" fill="#9cdcfe" opacity=".5"/><rect x="9.0" y="43.84" width="1.0" height="1.3" fill="#cccccc" opacity=".5"/><rect x="2.0" y="45.88" width="9.0" height="1.3" fill="#9cdcfe" opacity=".5"/><rect x="11.0" y="45.88" width="2.0" height="1.3" fill="#cccccc" opacity=".5"/><rect x="13.0" y="45.88" width="16.0" height="1.3" fill="#6a9955" opacity=".5"/><rect x="2.0" y="47.92" width="11.0" height="1.3" fill="#9cdcfe" opacity=".5"/><rect x="13.0" y="47.92" width="1.0" height="1.3" fill="#cccccc" opacity=".5"/><rect x="2.0" y="49.96" width="13.0" height="1.3" fill="#9cdcfe" opacity=".5"/><rect x="15.0" y="49.96" width="1.0" height="1.3" fill="#cccccc" opacity=".5"/><rect x="0.0" y="52.00" width="1.0" height="1.3" fill="#179fff" opacity=".5"/><rect x="1.0" y="52.00" width="1.0" height="1.3" fill="#da70d6" opacity=".5"/><rect x="2.0" y="52.00" width="1.0" height="1.3" fill="#cccccc" opacity=".5"/><rect x="3.0" y="52.00" width="1.0" height="1.3" fill="#da70d6" opacity=".5"/><rect x="2.0" y="54.04" width="5.0" height="1.3" fill="#c586c0" opacity=".5"/><rect x="7.0" y="54.04" width="1.0" height="1.3" fill="#cccccc" opacity=".5"/><rect x="8.0" y="54.04" width="4.0" height="1.3" fill="#569cd6" opacity=".5"/><rect x="12.0" y="54.04" width="1.0" height="1.3" fill="#cccccc" opacity=".5"/><rect x="13.0" y="54.04" width="22.0" height="1.3" fill="#dcdcaa" opacity=".5"/><rect x="35.0" y="54.04" width="2.0" height="1.3" fill="#179fff" opacity=".5"/><rect x="37.0" y="54.04" width="1.0" height="1.3" fill="#cccccc" opacity=".5"/><rect x="2.0" y="56.08" width="83.0" height="1.3" fill="#6a9955" opacity=".5"/><rect x="2.0" y="58.12" width="3.0" height="1.3" fill="#569cd6" opacity=".5"/><rect x="5.0" y="58.12" width="1.0" height="1.3" fill="#cccccc" opacity=".5"/><rect x="6.0" y="58.12" width="9.0" height="1.3" fill="#9cdcfe" opacity=".5"/><rect x="15.0" y="58.12" width="1.0" height="1.3" fill="#cccccc" opacity=".5"/><rect x="2.0" y="60.16" width="2.0" height="1.3" fill="#c586c0" opacity=".5"/><rect x="4.0" y="60.16" width="1.0" height="1.3" fill="#cccccc" opacity=".5"/><rect x="5.0" y="60.16" width="1.0" height="1.3" fill="#179fff" opacity=".5"/><rect x="6.0" y="60.16" width="9.0" height="1.3" fill="#9cdcfe" opacity=".5"/><rect x="15.0" y="60.16" width="1.0" height="1.3" fill="#179fff" opacity=".5"/><rect x="16.0" y="60.16" width="1.0" height="1.3" fill="#cccccc" opacity=".5"/><rect x="17.0" y="60.16" width="1.0" height="1.3" fill="#179fff" opacity=".5"/><rect x="4.0" y="62.20" width="5.0" height="1.3" fill="#569cd6" opacity=".5"/><rect x="9.0" y="62.20" width="1.0" height="1.3" fill="#cccccc" opacity=".5"/><rect x="10.0" y="62.20" width="5.0" height="1.3" fill="#9cdcfe" opacity=".5"/><rect x="15.0" y="62.20" width="3.0" height="1.3" fill="#cccccc" opacity=".5"/><rect x="18.0" y="62.20" width="3.0" height="1.3" fill="#569cd6" opacity=".5"/><rect x="21.0" y="62.20" width="1.0" height="1.3" fill="#cccccc" opacity=".5"/><rect x="22.0" y="62.20" width="4.0" height="1.3" fill="#4ec9b0" opacity=".5"/><rect x="26.0" y="62.20" width="2.0" height="1.3" fill="#ffd700" opacity=".5"/><rect x="28.0" y="62.20" width="1.0" height="1.3" fill="#cccccc" opacity=".5"/><rect x="4.0" y="64.24" width="5.0" height="1.3" fill="#569cd6" opacity=".5"/><rect x="9.0" y="64.24" width="1.0" height="1.3" fill="#cccccc" opacity=".5"/><rect x="10.0" y="64.24" width="10.0" height="1.3" fill="#9cdcfe" opacity=".5"/><rect x="20.0" y="64.24" width="3.0" height="1.3" fill="#cccccc" opacity=".5"/><rect x="23.0" y="64.24" width="5.0" height="1.3" fill="#9cdcfe" opacity=".5"/><rect x="28.0" y="64.24" width="1.0" height="1.3" fill="#cccccc" opacity=".5"/><rect x="29.0" y="64.24" width="11.0" height="1.3" fill="#dcdcaa" opacity=".5"/><rect x="40.0" y="64.24" width="2.0" height="1.3" fill="#ffd700" opacity=".5"/><rect x="42.0" y="64.24" width="1.0" height="1.3" fill="#cccccc" opacity=".5"/><rect x="43.0" y="64.24" width="5.0" height="1.3" fill="#dcdcaa" opacity=".5"/><rect x="48.0" y="64.24" width="1.0" height="1.3" fill="#ffd700" opacity=".5"/><rect x="49.0" y="64.24" width="3.0" height="1.3" fill="#ce9178" opacity=".5"/><rect x="52.0" y="64.24" width="1.0" height="1.3" fill="#ffd700" opacity=".5"/><rect x="53.0" y="64.24" width="1.0" height="1.3" fill="#ffd700" opacity=".5"/><rect x="54.0" y="64.24" width="1.0" height="1.3" fill="#b5cea8" opacity=".5"/><rect x="55.0" y="64.24" width="1.0" height="1.3" fill="#ffd700" opacity=".5"/><rect x="56.0" y="64.24" width="2.0" height="1.3" fill="#cccccc" opacity=".5"/><rect x="58.0" y="64.24" width="20.0" height="1.3" fill="#6a9955" opacity=".5"/><rect x="4.0" y="66.28" width="9.0" height="1.3" fill="#9cdcfe" opacity=".5"/><rect x="13.0" y="66.28" width="3.0" height="1.3" fill="#cccccc" opacity=".5"/><rect x="16.0" y="66.28" width="3.0" height="1.3" fill="#569cd6" opacity=".5"/><rect x="19.0" y="66.28" width="1.0" height="1.3" fill="#cccccc" opacity=".5"/><rect x="20.0" y="66.28" width="4.0" height="1.3" fill="#4ec9b0" opacity=".5"/><rect x="24.0" y="66.28" width="1.0" height="1.3" fill="#ffd700" opacity=".5"/><rect x="25.0" y="66.28" width="1.0" height="1.3" fill="#ce9178" opacity=".5"/><rect x="26.0" y="66.28" width="2.0" height="1.3" fill="#da70d6" opacity=".5"/><rect x="28.0" y="66.28" width="10.0" height="1.3" fill="#9cdcfe" opacity=".5"/><rect x="38.0" y="66.28" width="1.0" height="1.3" fill="#da70d6" opacity=".5"/><rect x="39.0" y="66.28" width="1.0" height="1.3" fill="#ce9178" opacity=".5"/><rect x="40.0" y="66.28" width="2.0" height="1.3" fill="#da70d6" opacity=".5"/><rect x="42.0" y="66.28" width="9.0" height="1.3" fill="#9cdcfe" opacity=".5"/><rect x="51.0" y="66.28" width="1.0" height="1.3" fill="#da70d6" opacity=".5"/><rect x="52.0" y="66.28" width="1.0" height="1.3" fill="#ce9178" opacity=".5"/><rect x="53.0" y="66.28" width="1.0" height="1.3" fill="#ffd700" opacity=".5"/><rect x="54.0" y="66.28" width="1.0" height="1.3" fill="#cccccc" opacity=".5"/><rect x="2.0" y="68.32" width="1.0" height="1.3" fill="#179fff" opacity=".5"/><rect x="2.0" y="70.36" width="5.0" height="1.3" fill="#569cd6" opacity=".5"/><rect x="7.0" y="70.36" width="1.0" height="1.3" fill="#cccccc" opacity=".5"/><rect x="8.0" y="70.36" width="10.0" height="1.3" fill="#9cdcfe" opacity=".5"/><rect x="18.0" y="70.36" width="3.0" height="1.3" fill="#cccccc" opacity=".5"/><rect x="21.0" y="70.36" width="4.0" height="1.3" fill="#569cd6" opacity=".5"/><rect x="25.0" y="70.36" width="1.0" height="1.3" fill="#cccccc" opacity=".5"/><rect x="26.0" y="70.36" width="14.0" height="1.3" fill="#9cdcfe" opacity=".5"/><rect x="40.0" y="70.36" width="1.0" height="1.3" fill="#cccccc" opacity=".5"/><rect x="41.0" y="70.36" width="6.0" height="1.3" fill="#dcdcaa" opacity=".5"/><rect x="47.0" y="70.36" width="1.0" height="1.3" fill="#179fff" opacity=".5"/><rect x="48.0" y="70.36" width="1.0" height="1.3" fill="#ffd700" opacity=".5"/><rect x="4.0" y="72.40" width="15.0" height="1.3" fill="#9cdcfe" opacity=".5"/><rect x="19.0" y="72.40" width="2.0" height="1.3" fill="#cccccc" opacity=".5"/><rect x="21.0" y="72.40" width="14.0" height="1.3" fill="#9cdcfe" opacity=".5"/><rect x="35.0" y="72.40" width="1.0" height="1.3" fill="#cccccc" opacity=".5"/><rect x="4.0" y="74.44" width="12.0" height="1.3" fill="#9cdcfe" opacity=".5"/><rect x="16.0" y="74.44" width="2.0" height="1.3" fill="#cccccc" opacity=".5"/><rect x="18.0" y="74.44" width="11.0" height="1.3" fill="#9cdcfe" opacity=".5"/><rect x="29.0" y="74.44" width="1.0" height="1.3" fill="#cccccc" opacity=".5"/><rect x="4.0" y="76.48" width="14.0" height="1.3" fill="#9cdcfe" opacity=".5"/><rect x="18.0" y="76.48" width="2.0" height="1.3" fill="#cccccc" opacity=".5"/><rect x="20.0" y="76.48" width="13.0" height="1.3" fill="#9cdcfe" opacity=".5"/><rect x="33.0" y="76.48" width="1.0" height="1.3" fill="#cccccc" opacity=".5"/><rect x="4.0" y="78.52" width="10.0" height="1.3" fill="#9cdcfe" opacity=".5"/><rect x="14.0" y="78.52" width="2.0" height="1.3" fill="#cccccc" opacity=".5"/><rect x="16.0" y="78.52" width="9.0" height="1.3" fill="#9cdcfe" opacity=".5"/><rect x="25.0" y="78.52" width="2.0" height="1.3" fill="#cccccc" opacity=".5"/><rect x="27.0" y="78.52" width="61.0" height="1.3" fill="#6a9955" opacity=".5"/><rect x="4.0" y="80.56" width="8.0" height="1.3" fill="#9cdcfe" opacity=".5"/><rect x="12.0" y="80.56" width="2.0" height="1.3" fill="#cccccc" opacity=".5"/><rect x="14.0" y="80.56" width="7.0" height="1.3" fill="#9cdcfe" opacity=".5"/><rect x="21.0" y="80.56" width="3.0" height="1.3" fill="#cccccc" opacity=".5"/><rect x="24.0" y="80.56" width="1.0" height="1.3" fill="#da70d6" opacity=".5"/><rect x="25.0" y="80.56" width="1.0" height="1.3" fill="#cccccc" opacity=".5"/><rect x="26.0" y="80.56" width="7.0" height="1.3" fill="#9cdcfe" opacity=".5"/><rect x="33.0" y="80.56" width="2.0" height="1.3" fill="#cccccc" opacity=".5"/><rect x="35.0" y="80.56" width="6.0" height="1.3" fill="#4ec9b0" opacity=".5"/><rect x="41.0" y="80.56" width="1.0" height="1.3" fill="#179fff" opacity=".5"/><rect x="42.0" y="80.56" width="7.0" height="1.3" fill="#9cdcfe" opacity=".5"/><rect x="49.0" y="80.56" width="1.0" height="1.3" fill="#179fff" opacity=".5"/><rect x="50.0" y="80.56" width="1.0" height="1.3" fill="#cccccc" opacity=".5"/><rect x="51.0" y="80.56" width="1.0" height="1.3" fill="#da70d6" opacity=".5"/><rect x="52.0" y="80.56" width="3.0" height="1.3" fill="#cccccc" opacity=".5"/><rect x="55.0" y="80.56" width="4.0" height="1.3" fill="#569cd6" opacity=".5"/><rect x="59.0" y="80.56" width="1.0" height="1.3" fill="#cccccc" opacity=".5"/><rect x="2.0" y="82.60" width="1.0" height="1.3" fill="#ffd700" opacity=".5"/><rect x="3.0" y="82.60" width="1.0" height="1.3" fill="#179fff" opacity=".5"/><rect x="4.0" y="82.60" width="1.0" height="1.3" fill="#cccccc" opacity=".5"/><rect x="2.0" y="84.64" width="5.0" height="1.3" fill="#569cd6" opacity=".5"/><rect x="7.0" y="84.64" width="1.0" height="1.3" fill="#cccccc" opacity=".5"/><rect x="8.0" y="84.64" width="15.0" height="1.3" fill="#9cdcfe" opacity=".5"/><rect x="23.0" y="84.64" width="3.0" height="1.3" fill="#cccccc" opacity=".5"/><rect x="26.0" y="84.64" width="5.0" height="1.3" fill="#c586c0" opacity=".5"/><rect x="31.0" y="84.64" width="1.0" height="1.3" fill="#cccccc" opacity=".5"/><rect x="32.0" y="84.64" width="4.0" height="1.3" fill="#569cd6" opacity=".5"/><rect x="36.0" y="84.64" width="1.0" height="1.3" fill="#cccccc" opacity=".5"/><rect x="37.0" y="84.64" width="14.0" height="1.3" fill="#9cdcfe" opacity=".5"/><rect x="51.0" y="84.64" width="1.0" height="1.3" fill="#cccccc" opacity=".5"/><rect x="52.0" y="84.64" width="4.0" height="1.3" fill="#dcdcaa" opacity=".5"/><rect x="56.0" y="84.64" width="1.0" height="1.3" fill="#179fff" opacity=".5"/><rect x="57.0" y="84.64" width="10.0" height="1.3" fill="#9cdcfe" opacity=".5"/><rect x="67.0" y="84.64" width="1.0" height="1.3" fill="#179fff" opacity=".5"/><rect x="68.0" y="84.64" width="1.0" height="1.3" fill="#cccccc" opacity=".5"/><rect x="2.0" y="86.68" width="6.0" height="1.3" fill="#c586c0" opacity=".5"/><rect x="8.0" y="86.68" width="1.0" height="1.3" fill="#cccccc" opacity=".5"/><rect x="9.0" y="86.68" width="15.0" height="1.3" fill="#9cdcfe" opacity=".5"/><rect x="24.0" y="86.68" width="1.0" height="1.3" fill="#cccccc" opacity=".5"/><rect x="0.0" y="88.72" width="1.0" height="1.3" fill="#da70d6" opacity=".5"/><rect x="2.0" y="94.84" width="37.0" height="1.3" fill="#6a9955" opacity=".5"/><rect x="2.0" y="96.88" width="5.0" height="1.3" fill="#569cd6" opacity=".5"/><rect x="7.0" y="96.88" width="1.0" height="1.3" fill="#cccccc" opacity=".5"/><rect x="8.0" y="96.88" width="20.0" height="1.3" fill="#dcdcaa" opacity=".5"/><rect x="28.0" y="96.88" width="2.0" height="1.3" fill="#da70d6" opacity=".5"/><rect x="30.0" y="96.88" width="1.0" height="1.3" fill="#cccccc" opacity=".5"/><rect x="31.0" y="96.88" width="1.0" height="1.3" fill="#da70d6" opacity=".5"/><rect x="4.0" y="98.92" width="5.0" height="1.3" fill="#c586c0" opacity=".5"/><rect x="9.0" y="98.92" width="1.0" height="1.3" fill="#cccccc" opacity=".5"/><rect x="10.0" y="98.92" width="4.0" height="1.3" fill="#569cd6" opacity=".5"/><rect x="14.0" y="98.92" width="1.0" height="1.3" fill="#cccccc" opacity=".5"/><rect x="15.0" y="98.92" width="22.0" height="1.3" fill="#dcdcaa" opacity=".5"/><rect x="37.0" y="98.92" width="2.0" height="1.3" fill="#179fff" opacity=".5"/><rect x="39.0" y="98.92" width="1.0" height="1.3" fill="#cccccc" opacity=".5"/><rect x="4.0" y="103.00" width="6.0" height="1.3" fill="#c586c0" opacity=".5"/><rect x="10.0" y="103.00" width="1.0" height="1.3" fill="#cccccc" opacity=".5"/><rect x="11.0" y="103.00" width="4.0" height="1.3" fill="#569cd6" opacity=".5"/><rect x="15.0" y="103.00" width="1.0" height="1.3" fill="#cccccc" opacity=".5"/><rect x="16.0" y="103.00" width="14.0" height="1.3" fill="#9cdcfe" opacity=".5"/><rect x="6.0" y="105.04" width="1.0" height="1.3" fill="#cccccc" opacity=".5"/><rect x="7.0" y="105.04" width="18.0" height="1.3" fill="#dcdcaa" opacity=".5"/><rect x="25.0" y="105.04" width="1.0" height="1.3" fill="#179fff" opacity=".5"/><rect x="26.0" y="105.04" width="12.0" height="1.3" fill="#ce9178" opacity=".5"/><rect x="38.0" y="105.04" width="1.0" height="1.3" fill="#179fff" opacity=".5"/><rect x="6.0" y="107.08" width="1.0" height="1.3" fill="#cccccc" opacity=".5"/><rect x="7.0" y="107.08" width="8.0" height="1.3" fill="#dcdcaa" opacity=".5"/><rect x="15.0" y="107.08" width="1.0" height="1.3" fill="#179fff" opacity=".5"/><rect x="16.0" y="107.08" width="21.0" height="1.3" fill="#ce9178" opacity=".5"/><rect x="37.0" y="107.08" width="2.0" height="1.3" fill="#cccccc" opacity=".5"/><rect x="39.0" y="107.08" width="6.0" height="1.3" fill="#ce9178" opacity=".5"/><rect x="45.0" y="107.08" width="1.0" height="1.3" fill="#179fff" opacity=".5"/><rect x="6.0" y="109.12" width="1.0" height="1.3" fill="#cccccc" opacity=".5"/><rect x="7.0" y="109.12" width="6.0" height="1.3" fill="#dcdcaa" opacity=".5"/><rect x="13.0" y="109.12" width="1.0" height="1.3" fill="#179fff" opacity=".5"/><rect x="14.0" y="109.12" width="1.0" height="1.3" fill="#ffd700" opacity=".5"/><rect x="8.0" y="111.16" width="43.0" height="1.3" fill="#ce9178" opacity=".5"/><rect x="51.0" y="111.16" width="1.0" height="1.3" fill="#cccccc" opacity=".5"/><rect x="8.0" y="113.20" width="47.0" height="1.3" fill="#ce9178" opacity=".5"/><rect x="55.0" y="113.20" width="1.0" height="1.3" fill="#cccccc" opacity=".5"/><rect x="8.0" y="115.24" width="41.0" height="1.3" fill="#ce9178" opacity=".5"/><rect x="49.0" y="115.24" width="1.0" height="1.3" fill="#cccccc" opacity=".5"/><rect x="8.0" y="117.28" width="45.0" height="1.3" fill="#ce9178" opacity=".5"/><rect x="53.0" y="117.28" width="1.0" height="1.3" fill="#cccccc" opacity=".5"/><rect x="8.0" y="119.32" width="37.0" height="1.3" fill="#ce9178" opacity=".5"/><rect x="45.0" y="119.32" width="1.0" height="1.3" fill="#cccccc" opacity=".5"/><rect x="8.0" y="121.36" width="25.0" height="1.3" fill="#ce9178" opacity=".5"/><rect x="33.0" y="121.36" width="1.0" height="1.3" fill="#cccccc" opacity=".5"/><rect x="8.0" y="123.40" width="30.0" height="1.3" fill="#ce9178" opacity=".5"/><rect x="6.0" y="125.44" width="2.0" height="1.3" fill="#ffd700" opacity=".5"/><rect x="6.0" y="127.48" width="8.0" height="1.3" fill="#dcdcaa" opacity=".5"/><rect x="14.0" y="127.48" width="33.0" height="1.3" fill="#ce9178" opacity=".5"/><rect x="6.0" y="129.52" width="11.0" height="1.3" fill="#dcdcaa" opacity=".5"/><rect x="17.0" y="129.52" width="3.0" height="1.3" fill="#cccccc" opacity=".5"/><rect x="2.0" y="131.56" width="1.0" height="1.3" fill="#cccccc" opacity=".5"/><rect x="2.0" y="135.64" width="26.0" height="1.3" fill="#6a9955" opacity=".5"/><rect x="2.0" y="137.68" width="5.0" height="1.3" fill="#569cd6" opacity=".5"/><rect x="7.0" y="137.68" width="21.0" height="1.3" fill="#dcdcaa" opacity=".5"/><rect x="28.0" y="137.68" width="10.0" height="1.3" fill="#9cdcfe" opacity=".5"/><rect x="4.0" y="139.72" width="5.0" height="1.3" fill="#c586c0" opacity=".5"/><rect x="9.0" y="139.72" width="6.0" height="1.3" fill="#569cd6" opacity=".5"/><rect x="15.0" y="139.72" width="22.0" height="1.3" fill="#dcdcaa" opacity=".5"/><rect x="37.0" y="139.72" width="3.0" height="1.3" fill="#cccccc" opacity=".5"/><rect x="4.0" y="143.80" width="6.0" height="1.3" fill="#c586c0" opacity=".5"/><rect x="10.0" y="143.80" width="20.0" height="1.3" fill="#9cdcfe" opacity=".5"/><rect x="6.0" y="145.84" width="19.0" height="1.3" fill="#dcdcaa" opacity=".5"/><rect x="25.0" y="145.84" width="14.0" height="1.3" fill="#ce9178" opacity=".5"/><rect x="6.0" y="147.88" width="6.0" height="1.3" fill="#dcdcaa" opacity=".5"/><rect x="12.0" y="147.88" width="32.0" height="1.3" fill="#ce9178" opacity=".5"/><rect x="44.0" y="147.88" width="13.0" height="1.3" fill="#9cdcfe" opacity=".5"/><rect x="6.0" y="149.92" width="8.0" height="1.3" fill="#dcdcaa" opacity=".5"/><rect x="14.0" y="149.92" width="33.0" height="1.3" fill="#ce9178" opacity=".5"/><rect x="6.0" y="151.96" width="8.0" height="1.3" fill="#dcdcaa" opacity=".5"/><rect x="14.0" y="151.96" width="3.0" height="1.3" fill="#cccccc" opacity=".5"/><rect x="2.0" y="154.00" width="1.0" height="1.3" fill="#cccccc" opacity=".5"/><rect x="0.0" y="156.04" width="1.0" height="1.3" fill="#cccccc" opacity=".5"/></svg><div class="a" style="left:3314.5px;top:110.2px;width:3.0px;height:6.1px;background:#1b5d96"></div><div class="a" style="left:3314.5px;top:120.0px;width:3.0px;height:83.8px;background:#1b5d96"></div><div class="a" style="left:3314.5px;top:206.0px;width:3.0px;height:65.5px;background:#1b5d96"></div><div class="a" style="left:3300.0px;top:153.6px;width:13.5px;height:1.6px;background:#0c0c0c"></div><div class="a" style="left:3432.5px;top:110.0px;width:7.5px;height:880.0px;background:#1f1f1f;border-left:1px solid #2a2a2a"></div><div class="a" style="left:3433.5px;top:110.2px;width:6.5px;height:20.4px;background:#1b5d96"></div><div class="a" style="left:3433.5px;top:130.6px;width:6.5px;height:14.8px;background:#2a2a2a"></div><div class="a" style="left:3433.5px;top:145.4px;width:6.5px;height:312.3px;background:#1b5d96"></div><div class="a" style="left:3433.0px;top:456.5px;width:7.0px;height:2.0px;background:#a0a0a0"></div><div class="a" style="left:2138.1px;top:990.3px;width:1302.4px;height:1.0px;background:#2b2b2b"></div><div class="a" style="left:2138.1px;top:991.3px;width:1302.4px;height:383.3px;background:#181818"></div><div class="a nw" style="left:2162.6px;top:1005.9px;font-size:11.80px;line-height:1;color:#9d9d9d;">PROBLEMS</div><div class="a nw" style="left:2255.4px;top:1005.9px;font-size:11.80px;line-height:1;color:#9d9d9d;">OUTPUT</div><div class="a nw" style="left:2333.3px;top:1005.9px;font-size:11.80px;line-height:1;color:#9d9d9d;">DEBUG CONSOLE</div><div class="a nw" style="left:2465.0px;top:1005.9px;font-size:11.80px;line-height:1;color:#e7e7e7;">TERMINAL</div><div class="a nw" style="left:2554.8px;top:1005.9px;font-size:11.80px;line-height:1;color:#9d9d9d;">PORTS</div><div class="a nw" style="left:2622.4px;top:1005.9px;font-size:11.80px;line-height:1;color:#9d9d9d;">POSTMAN CONSOLE</div><div class="a" style="left:2462.0px;top:1023.5px;width:67.0px;height:1.6px;background:#0078d4"></div><svg class="a" style="left:3169.5px;top:1002.0px;" width="19" height="19" viewBox="0 0 19 19"><path d="M3 1.5h14.5l-1.5 16H1.5z" fill="none" stroke="#ccc" stroke-width="1.3" stroke-linejoin="round"/><path d="M5.5 6l3.5 3-3.5 3M9.5 13.5h4" fill="none" stroke="#ccc" stroke-width="1.3"/></svg><div class="a nw" style="left:3193.5px;top:1005.1px;font-size:14.20px;line-height:1;color:#cccccc;">node</div><svg class="a" style="left:3233.0px;top:1003.5px;" width="17" height="17" viewBox="0 0 17 17"><path d="M8.5 1v15M1 8.5h15" stroke="#ccc" stroke-width="1.5"/></svg><svg class="a" style="left:3255.5px;top:1009.0px;" width="10" height="6" viewBox="0 0 10 6"><path d="M1 1l4 4 4-4" fill="none" stroke="#ccc" stroke-width="1.2"/></svg><svg class="a" style="left:3279.0px;top:1003.5px;" width="17" height="17" viewBox="0 0 17 17"><rect x=".7" y=".7" width="15.6" height="15.6" rx="1.5" fill="none" stroke="#ccc" stroke-width="1.4"/><path d="M8.5 1v15" stroke="#ccc" stroke-width="1.4"/></svg><svg class="a" style="left:3307.0px;top:1003.0px;" width="15" height="17" viewBox="0 0 15 17"><path d="M1 3.5h13M5.5 3.5V1.5h4v2M2.5 3.5l1 12.5h8l1-12.5" fill="none" stroke="#ccc" stroke-width="1.3"/><path d="M6 6v8M9 6v8" stroke="#ccc" stroke-width="1.1"/></svg><svg class="a" style="left:3336.5px;top:1010.5px;" width="16" height="3" viewBox="0 0 16 3"><circle cx="1.5" cy="1.5" r="1.4" fill="#ccc"/><circle cx="8" cy="1.5" r="1.4" fill="#ccc"/><circle cx="14.5" cy="1.5" r="1.4" fill="#ccc"/></svg><div class="a" style="left:3366.0px;top:1002.0px;width:1.0px;height:19.0px;background:#4a4a4a"></div><svg class="a" style="left:3381.5px;top:1003.5px;" width="16" height="16" viewBox="0 0 16 16"><path d="M1 5V1h4M11 1h4v4M15 11v4h-4M5 15H1v-4" fill="none" stroke="#ccc" stroke-width="1.4"/></svg><svg class="a" style="left:3414.5px;top:1005.5px;" width="12" height="12" viewBox="0 0 12 12"><path d="M1 1l10 10M11 1 1 11" stroke="#ccc" stroke-width="1.3"/></svg><div class="a" style="left:3433.0px;top:1037.5px;width:1.0px;height:337.0px;background:#2b2b2b"></div><div class="a nw" style="left:2162px;top:1040.5px;font-family:'Liberation Mono';font-size:15px;line-height:21px;white-space:pre"><span style="color:#cccccc">Fetching tasks for userId: </span><span style="color:#e5e510">28</span></div><div class="a nw" style="left:2162px;top:1061.5px;font-family:'Liberation Mono';font-size:15px;line-height:21px;white-space:pre"><span style="color:#cccccc"> GET /api/tasks/28 </span><span style="color:#2bc27c">200</span><span style="color:#cccccc"> in 37ms</span></div><div class="a nw" style="left:2162px;top:1082.5px;font-family:'Liberation Mono';font-size:15px;line-height:21px;white-space:pre"><span style="color:#cccccc"> POST /api/screenshot-data </span><span style="color:#2bc27c">201</span><span style="color:#cccccc"> in 22ms</span></div><div class="a nw" style="left:2162px;top:1103.5px;font-family:'Liberation Mono';font-size:15px;line-height:21px;white-space:pre"><span style="color:#cccccc">Fetching tasks for userId: </span><span style="color:#e5e510">28</span></div><div class="a nw" style="left:2162px;top:1124.5px;font-family:'Liberation Mono';font-size:15px;line-height:21px;white-space:pre"><span style="color:#cccccc"> GET /api/tasks/28 </span><span style="color:#2bc27c">200</span><span style="color:#cccccc"> in 11ms</span></div><div class="a nw" style="left:2162px;top:1145.5px;font-family:'Liberation Mono';font-size:15px;line-height:21px;white-space:pre"><span style="color:#cccccc"> POST /api/screenshot-data </span><span style="color:#2bc27c">201</span><span style="color:#cccccc"> in 19ms</span></div><div class="a nw" style="left:2162px;top:1166.6px;font-family:'Liberation Mono';font-size:15px;line-height:21px;white-space:pre"><span style="color:#cccccc">Fetching tasks for userId: </span><span style="color:#e5e510">28</span></div><div class="a nw" style="left:2162px;top:1187.6px;font-family:'Liberation Mono';font-size:15px;line-height:21px;white-space:pre"><span style="color:#cccccc"> GET /api/tasks/28 </span><span style="color:#2bc27c">200</span><span style="color:#cccccc"> in 13ms</span></div><div class="a nw" style="left:2162px;top:1208.6px;font-family:'Liberation Mono';font-size:15px;line-height:21px;white-space:pre"><span style="color:#cccccc">Fetching tasks for userId: </span><span style="color:#e5e510">28</span></div><div class="a nw" style="left:2162px;top:1229.6px;font-family:'Liberation Mono';font-size:15px;line-height:21px;white-space:pre"><span style="color:#cccccc"> GET /api/tasks/28 </span><span style="color:#2bc27c">200</span><span style="color:#cccccc"> in 14ms</span></div><div class="a nw" style="left:2162px;top:1250.6px;font-family:'Liberation Mono';font-size:15px;line-height:21px;white-space:pre"><span style="color:#cccccc">Fetching tasks for userId: </span><span style="color:#e5e510">28</span></div><div class="a nw" style="left:2162px;top:1271.6px;font-family:'Liberation Mono';font-size:15px;line-height:21px;white-space:pre"><span style="color:#cccccc"> GET /api/tasks/28 </span><span style="color:#2bc27c">200</span><span style="color:#cccccc"> in 19ms</span></div><div class="a nw" style="left:2162px;top:1292.6px;font-family:'Liberation Mono';font-size:15px;line-height:21px;white-space:pre"><span style="color:#cccccc"> POST /api/screenshot-data </span><span style="color:#2bc27c">201</span><span style="color:#cccccc"> in 14ms</span></div><div class="a nw" style="left:2162px;top:1313.6px;font-family:'Liberation Mono';font-size:15px;line-height:21px;white-space:pre"><span style="color:#cccccc">Fetching tasks for userId: </span><span style="color:#e5e510">28</span></div><div class="a nw" style="left:2162px;top:1334.6px;font-family:'Liberation Mono';font-size:15px;line-height:21px;white-space:pre"><span style="color:#cccccc"> GET /api/tasks/28 </span><span style="color:#2bc27c">200</span><span style="color:#cccccc"> in 13ms</span></div><div class="a" style="left:2162.0px;top:1353.5px;width:9.0px;height:20.0px;border:1.3px solid #cccccc"></div><div class="a" style="left:1745.6px;top:1374.6px;width:1694.4px;height:1.0px;background:#2b2b2b"></div><div class="a" style="left:1745.6px;top:1375.6px;width:1694.4px;height:24.4px;background:#181818"></div><div class="a" style="left:1745.5px;top:1375.0px;width:37.5px;height:25.0px;background:#0078d4"></div><svg class="a" style="left:1756.0px;top:1380.0px;" width="16" height="15" viewBox="0 0 16 15"><path d="M2 13 7.5 8.5M2 7l4.5 1.5M14 2 8.5 6.5M14 8 9.5 6.5" fill="none" stroke="#fff" stroke-width="1.4"/></svg><svg class="a" style="left:1793.5px;top:1379.0px;" width="14" height="17" viewBox="0 0 14 17"><circle cx="3.5" cy="3" r="2" fill="none" stroke="#ccc" stroke-width="1.3"/><circle cx="3.5" cy="14" r="2" fill="none" stroke="#ccc" stroke-width="1.3"/><circle cx="10.5" cy="6" r="2" fill="none" stroke="#ccc" stroke-width="1.3"/><path d="M3.5 5v7M3.5 11.5c0-3 7-2 7-3.5" fill="none" stroke="#ccc" stroke-width="1.3"/></svg><div class="a nw" style="left:1813.6px;top:1380.7px;font-size:14.20px;line-height:1;color:#cccccc;">main*</div><svg class="a" style="left:1859.0px;top:1380.0px;" width="16" height="15" viewBox="0 0 16 15"><path d="M13.5 6A6 6 0 0 0 2.5 5M2.5 9A6 6 0 0 0 13.5 10" fill="none" stroke="#ccc" stroke-width="1.3"/><path d="M2 1.5v4h4M14 13.5v-4h-4" fill="none" stroke="#ccc" stroke-width="1.3"/></svg><svg class="a" style="left:2551.0px;top:1379.0px;" width="9" height="17" viewBox="0 0 9 17"><path d="M4.5 0v5M4.5 12v5" stroke="#ccc" stroke-width="1.4"/><circle cx="4.5" cy="8.5" r="3.3" fill="none" stroke="#ccc" stroke-width="1.5"/></svg><div class="a nw" style="left:2567.5px;top:1380.5px;font-size:14.50px;line-height:1;color:#cccccc;">Not Committed Yet</div><div class="a" style="left:2699.0px;top:1375.6px;width:41.0px;height:24.4px;background:#37393d"></div><svg class="a" style="left:2712.0px;top:1379.5px;" width="16" height="16" viewBox="0 0 16 16"><circle cx="6.5" cy="6.5" r="5.2" fill="none" stroke="#ccc" stroke-width="1.3"/><path d="M4 6.5h5M10.3 10.3 14.5 14.5" stroke="#ccc" stroke-width="1.4"/></svg><div class="a nw" style="left:2750.4px;top:1381.0px;font-size:13.60px;line-height:1;color:#cccccc;">Ln 49, Col 41</div><div class="a nw" style="left:2851.0px;top:1381.0px;font-size:13.60px;line-height:1;color:#cccccc;">Spaces: 2</div><div class="a nw" style="left:2928.3px;top:1381.0px;font-size:13.60px;line-height:1;color:#cccccc;">UTF-8</div><div class="a nw" style="left:2985.5px;top:1381.0px;font-size:13.60px;line-height:1;color:#cccccc;">CRLF</div><svg class="a" style="left:3037.0px;top:1379.5px;" width="18" height="16" viewBox="0 0 18 16"><path d="M4 1C2.5 1 2.5 2 2.5 3.5v2c0 1-.5 1.8-1.5 2.3 1 .5 1.5 1.3 1.5 2.3v2c0 1.5 0 2.5 1.5 2.5M11 1c1.5 0 1.5 1 1.5 2.5v2" fill="none" stroke="#ccc" stroke-width="1.2"/><circle cx="11.5" cy="12" r="3.3" fill="#ccc"/><path d="M10 10.5l3 3M13 10.5l-3 3" stroke="#181818" stroke-width="1"/></svg><div class="a nw" style="left:3060.4px;top:1381.0px;font-size:13.60px;line-height:1;color:#cccccc;">JavaScript</div><div class="a" style="left:3132.7px;top:1375.6px;width:221.3px;height:24.4px;background:#3a3d41"></div><svg class="a" style="left:3142.0px;top:1378.5px;" width="20" height="18" viewBox="0 0 20 18"><path d="M3.5 5c0-2.5 2-3.5 3.5-3 1 .3 1.5 1 2 1.5.5-.5 1-1.2 2-1.5 1.5-.5 3.5.5 3.5 3v1.2c1.2.6 2 1.5 2 2.8 0 2.5-3 4.5-7.5 4.5S1.5 11.5 1.5 9c0-1.3.8-2.2 2-2.8z" fill="none" stroke="#ccc" stroke-width="1.4"/><circle cx="14.5" cy="13" r="4.2" fill="#ccc"/><path d="M14.5 10.5v3M14.5 15v.8" stroke="#3a3d41" stroke-width="1.4"/></svg><div class="a nw" style="left:3165.8px;top:1380.6px;font-size:14.40px;line-height:1;color:#cccccc;">Completions quota reached</div><svg class="a" style="left:3362.0px;top:1381.5px;" width="18" height="11" viewBox="0 0 18 11"><path d="M1 6l3 3.5L10 1.5M7 9.5 15 1.5" fill="none" stroke="#ccc" stroke-width="1.3"/></svg><div class="a nw" style="left:3384.0px;top:1380.6px;font-size:14.30px;line-height:1;color:#cccccc;">Prettier</div><div class="a" style="left:0.0px;top:1400.3px;width:3440.0px;height:39.7px;background:linear-gradient(90deg,#c8dfe9,#cde1ea 50%,#cbdae5)"></div><svg class="a" style="left:15.8px;top:1411.9px;" width="16.4" height="16.4" viewBox="0 0 16.4 16.4"><path d="M0 2.3 6.7 1.4v6.2H0zM7.5 1.3 16.4 0v7.6H7.5zM0 8.4h6.7v6.2L0 13.7zM7.5 8.4h8.9V16l-8.9-1.2z" fill="#111"/></svg><div class="a" style="left:48.4px;top:1401.0px;width:287.1px;height:39.0px;background:#ffffff"></div><svg class="a" style="left:59.7px;top:1412.0px;" width="17" height="17" viewBox="0 0 17 17"><circle cx="10.5" cy="6.5" r="5.3" fill="none" stroke="#222" stroke-width="1.3"/><path d="M6.7 10.3 1 16" stroke="#222" stroke-width="1.4"/></svg><div class="a nw" style="left:88.3px;top:1414.4px;font-size:14.40px;line-height:1;color:#3b3b3b;">Type here to search</div><svg class="a" style="left:258.0px;top:1400.3px;" width="77.3" height="39.7" viewBox="0 0 77.3 39.7"><defs><linearGradient id="brn" x1="0" y1="0" x2="1" y2="1"><stop offset="0" stop-color="#d9a25c"/><stop offset="1" stop-color="#7e4a1e"/></linearGradient><linearGradient id="lf" x1="0" y1="0" x2="1" y2="1"><stop offset="0" stop-color="#58c060"/><stop offset="1" stop-color="#1e7a34"/></linearGradient><linearGradient id="gk" x1="0" y1="0" x2="0" y2="1"><stop offset="0" stop-color="#4fb01a"/><stop offset="1" stop-color="#86d83a"/></linearGradient></defs><path d="M4 37.5C15 33 30 29.5 45 28.5S68 25 77.3 23.5V39.7H68C62 36 52 33 42 33.3 30 33.5 16 35.5 4 37.5z" fill="url(#brn)"/><path d="M50 2.5C58 6 63 10 67 16.5 69.5 21 73 24 77.3 25.5V29C71 27 66.5 23 63 17 60 11.5 55 7 50 3.5z" fill="#d48c3c"/><ellipse cx="67" cy="8.5" rx="2.8" ry="6.5" fill="url(#lf)" transform="rotate(12 67 8.5)"/><ellipse cx="55" cy="11" rx="5" ry="2.5" fill="url(#lf)" transform="rotate(25 55 11)"/><ellipse cx="64" cy="18.5" rx="4.5" ry="2.2" fill="url(#lf)" transform="rotate(20 64 18.5)"/><ellipse cx="28" cy="34.5" rx="4.5" ry="2.3" fill="url(#lf)" transform="rotate(10 28 34.5)"/><ellipse cx="57" cy="34" rx="5" ry="2.6" fill="url(#lf)" transform="rotate(-20 57 34)"/><path d="M3.5 18.5C5 12 11 9.5 17 10.3 23 11 28 13 35 13.3 43 13.5 49 13.2 53 15 58 18 63 21.5 68 25.5 71 28 73 30.5 74.5 32 70 31 64 27.5 58 24 52 21 44 21 34 20.8 26 20.7 16 21.5 10 20.5 6 20 4 19.5 3.5 18.5z" fill="url(#gk)"/><path d="M11 18.6C16 18.3 21 19 26 18.6M31 18.3C37 18.4 44 18.5 50 18.5M58 22.5C62 24.5 66 26.5 70 29" fill="none" stroke="#93d6f2" stroke-width="2.2"/><circle cx="16.5" cy="14.5" r="1.5" fill="#111"/><path d="M25 20.5 21.5 31M29.5 20.5 30 30.5M46 20.5 47 29.5M50.5 20.5 52.5 30" stroke="#6cc42c" stroke-width="2.4" stroke-linecap="round"/><path d="M35 12.2h3M41 12.4h4M47 12.6h2" stroke="#d9782a" stroke-width="1.2"/></svg><svg class="a" style="left:351.0px;top:1408.0px;" width="24" height="24" viewBox="0 0 24 24"><defs><linearGradient id="cpa" x1="0" y1="0" x2="1" y2="1"><stop offset="0" stop-color="#2d8ef0"/><stop offset=".55" stop-color="#3fc2c0"/><stop offset="1" stop-color="#9be05a"/></linearGradient><linearGradient id="cpb" x1="0" y1="0" x2="1" y2="1"><stop offset="0" stop-color="#ff9a3c"/><stop offset=".5" stop-color="#f25aa6"/><stop offset="1" stop-color="#8a5cf0"/></linearGradient></defs><path d="M8 2.5h6.5c1.4 0 2.4 1.2 2 2.6L13.5 16c-.6 2.3-2.6 3.8-5 3.8H3.3c-1.6 0-2.6-1.5-2.1-3L5 6c.5-2.1 1.4-3.5 3-3.5z" fill="url(#cpa)"/><path d="M16 4.2h4.7c1.6 0 2.6 1.5 2.1 3L19 18c-.5 2.1-1.5 3.5-3.1 3.5H9.4c-1.4 0-2.4-1.2-2-2.6L10.5 8c.6-2.3 2.6-3.8 5.5-3.8z" fill="url(#cpb)" opacity=".92"/></svg><svg class="a" style="left:400.0px;top:1408.0px;" width="24" height="24" viewBox="0 0 24 24"><rect width="24" height="24" fill="#bf0000"/><rect x="1.5" y="1.5" width="21" height="21" fill="none" stroke="#e06060" stroke-width="1" stroke-dasharray="1.5 1"/><text x="4" y="19" font-family="Liberation Sans" font-weight="bold" font-style="italic" font-size="16" fill="#fff">Fz</text></svg><svg class="a" style="left:449.7px;top:1409.0px;" width="23" height="22" viewBox="0 0 23 22"><path d="M0 4c0-1 .7-2 1.7-2h6l2 2.5H21c1 0 2 1 2 2V19c0 1-1 2-2 2H2c-1 0-2-1-2-2z" fill="#f6c343"/><path d="M0 7h23v12c0 1-1 2-2 2H2c-1 0-2-1-2-2z" fill="#ffd866"/><rect x="5" y="12" width="13" height="3.5" fill="#2a7bd6"/><rect x="7" y="15.5" width="3" height="5.5" fill="#2a7bd6"/><rect x="13" y="15.5" width="3" height="5.5" fill="#2a7bd6"/></svg><div class="a" style="left:441.0px;top:1437.6px;width:39.7px;height:2.4px;background:#0067c0"></div><svg class="a" style="left:498.0px;top:1408.0px;" width="24" height="24" viewBox="0 0 24 24"><defs><radialGradient id="ffg" cx=".3" cy=".2" r="1"><stop offset="0" stop-color="#ffe34f"/><stop offset=".5" stop-color="#ff7139"/><stop offset="1" stop-color="#e31587"/></radialGradient></defs><circle cx="12" cy="13" r="10.5" fill="url(#ffg)"/><circle cx="11.5" cy="13.5" r="6" fill="#7542e5"/><path d="M14 2c4 2 7 6 6.5 11" stroke="#ffb93f" stroke-width="2.5" fill="none"/><path d="M8 11c2-2 5-1.5 6 0" stroke="#ff9640" stroke-width="2" fill="none"/></svg><svg class="a" style="left:547.0px;top:1408.0px;" width="24" height="24" viewBox="0 0 24 24"><circle cx="12" cy="12" r="11.5" fill="#db4437"/><path d="M12 12 2 6.3A11.5 11.5 0 0 0 6.2 22z" fill="#0f9d58"/><path d="M12 12l10 -5.7A11.5 11.5 0 0 1 6.2 22z" fill="#ffcd40"/><path d="M12 .5a11.5 11.5 0 0 1 10 5.8H12z" fill="#db4437"/><circle cx="12" cy="12" r="5.3" fill="#fff"/><circle cx="12" cy="12" r="4.2" fill="#4285f4"/></svg><svg class="a" style="left:596.0px;top:1408.0px;" width="24" height="24" viewBox="0 0 24 24"><rect x="1" y="1" width="22" height="7.5" fill="#c2185b"/><rect x="1" y="8.5" width="22" height="7.5" fill="#3949ab"/><rect x="1" y="16" width="22" height="7.5" fill="#2e7d32"/><rect x="9" y="1" width="6" height="23" fill="#d7a049"/><rect x="8" y="12" width="8" height="7" rx="1" fill="#fff" stroke="#6d4c1f" stroke-width="1"/><path d="M10 4h4" stroke="#ffd54f" stroke-width="2"/></svg><svg class="a" style="left:645.4px;top:1408.0px;" width="23" height="23" viewBox="0 0 23 23"><circle cx="11.5" cy="11.5" r="11" fill="#f4f4f4" stroke="#ddd" stroke-width="1"/><path d="M8.5 5v5M14.5 18v-5M5 14.5h5M18 8.5h-5" stroke-linecap="round" stroke-width="2.6" stroke="#e01e5a"/><path d="M8.5 5v5" stroke="#36c5f0" stroke-width="2.6" stroke-linecap="round"/><path d="M18 8.5h-5" stroke="#2eb67d" stroke-width="2.6" stroke-linecap="round"/><path d="M14.5 18v-5" stroke="#ecb22e" stroke-width="2.6" stroke-linecap="round"/><path d="M5 14.5h5" stroke="#e01e5a" stroke-width="2.6" stroke-linecap="round"/><circle cx="14.5" cy="5.5" r="1.5" fill="#2eb67d"/><circle cx="5.5" cy="8.5" r="1.5" fill="#36c5f0"/><circle cx="17.5" cy="14.5" r="1.5" fill="#ecb22e"/><circle cx="8.5" cy="17.5" r="1.5" fill="#e01e5a"/></svg><svg class="a" style="left:697.0px;top:1408.0px;" width="17" height="23" viewBox="0 0 17 23"><path d="M.5 .5h11l5 5v17H.5z" fill="#fafafa" stroke="#c8c8c8" stroke-width="1"/><path d="M11.5 .5v5h5" fill="#e8e8e8" stroke="#c8c8c8" stroke-width="1"/></svg><svg class="a" style="left:742.0px;top:1408.0px;" width="25" height="24" viewBox="0 0 25 24"><path d="M12 4C5 4 1 9 1 13.5S4 21 8 21c2.5 0 2-2.5 3.5-3s4 1 6-1 1-5-1-6.5" fill="#dde9f2" stroke="#6a8aa8" stroke-width="1"/><circle cx="6" cy="12" r="1.8" fill="#e53935"/><circle cx="9" cy="8" r="1.8" fill="#43a047"/><circle cx="13.5" cy="7.5" r="1.8" fill="#fbc02d"/><circle cx="7" cy="16.5" r="1.6" fill="#1e88e5"/><path d="M14 20 23 2" stroke="#c17a2c" stroke-width="2.2"/><path d="M21 1l3 2-1.5 2.5-3-2z" fill="#f0a040"/></svg><svg class="a" style="left:791.8px;top:1408.0px;" width="24.2" height="24" viewBox="0 0 24.2 24"><path d="M17.4 1 8.3 9.3 4.2 6.2 2.3 7.1v9.8l1.9.9 4.1-3.1 9.1 8.3 4.4-2.1V3.1z" fill="#0065a9"/><path d="M17.4 1v22l4.4-2.1V3.1z" fill="#1f9cf0"/><path d="M2.3 7.1 17.4 19V14.6L8.3 9.3 4.2 6.2z" fill="#007acc"/><path d="M2.3 16.9 17.4 5V9.3L8.3 14.7 4.2 17.8z" fill="#0081d8"/></svg><div class="a" style="left:784.0px;top:1437.6px;width:23.0px;height:2.4px;background:#0067c0"></div><div class="a" style="left:807.0px;top:1437.6px;width:17.0px;height:2.4px;background:#5aa3dc"></div><svg class="a" style="left:843.0px;top:1407.0px;" width="20" height="25" viewBox="0 0 20 25"><path d="M8 1h4l6 19H2z" fill="#ff8800"/><path d="M5.6 9h8.8l1 3.5H4.6zM3.6 15h12.8l1 3H2.6z" fill="#fff"/><rect x="0" y="20" width="20" height="4" rx="1" fill="#ff8800"/></svg><svg class="a" style="left:890.0px;top:1408.0px;" width="24" height="24" viewBox="0 0 24 24"><circle cx="12" cy="12" r="11.5" fill="#fff"/><path d="M12 3 5.5 19M12 3l6.5 16M7.5 13.5h9" stroke="#3b82d6" stroke-width="2.3" fill="none"/><circle cx="12" cy="4" r="2" fill="#3b82d6"/><path d="M16.5 13l3.5-1.5" stroke="#3ddc84" stroke-width="2"/></svg><div class="a" style="left:927.0px;top:1400.3px;width:44.5px;height:39.7px;background:rgba(255,255,255,.45)"></div><svg class="a" style="left:938.8px;top:1408.0px;" width="24" height="24" viewBox="0 0 24 24"><circle cx="12" cy="12" r="11.5" fill="#db4437"/><path d="M12 12 2 6.3A11.5 11.5 0 0 0 6.2 22z" fill="#0f9d58"/><path d="M12 12l10 -5.7A11.5 11.5 0 0 1 6.2 22z" fill="#ffcd40"/><path d="M12 .5a11.5 11.5 0 0 1 10 5.8H12z" fill="#db4437"/><circle cx="12" cy="12" r="5.3" fill="#fff"/><circle cx="12" cy="12" r="4.2" fill="#4285f4"/></svg><svg class="a" style="left:950.0px;top:1419.0px;" width="14" height="14" viewBox="0 0 14 14"><circle cx="7" cy="7" r="6.8" fill="#3a2e28"/><circle cx="7" cy="5.5" r="2.6" fill="#c9a58a"/><path d="M2 13c1-3 3-4 5-4s4 1 5 4" fill="#1a1a1a"/></svg><div class="a" style="left:927.0px;top:1437.6px;width:44.5px;height:2.4px;background:#0067c0"></div><div class="a" style="left:972.0px;top:1401.0px;width:1.0px;height:39.0px;background:#b4c6d0"></div><svg class="a" style="left:987.7px;top:1408.0px;" width="25" height="24" viewBox="0 0 25 24"><rect width="25" height="24" rx="3" fill="#fb7a24"/><path d="M6 4c3 2 5 4 6.5 6 1.5-2 3.5-4 6.5-6M6 20c3-2 5-4 6.5-6 1.5 2 3.5 4 6.5 6M4 6.5c2 3 2 8 0 11M21 6.5c-2 3-2 8 0 11" fill="none" stroke="#fff" stroke-width="2.6"/></svg><div class="a" style="left:979.8px;top:1437.6px;width:40.1px;height:2.4px;background:#0067c0"></div><svg class="a" style="left:1036.5px;top:1408.0px;" width="24" height="24" viewBox="0 0 24 24"><circle cx="12" cy="12" r="11.5" fill="#db4437"/><path d="M12 12 2 6.3A11.5 11.5 0 0 0 6.2 22z" fill="#0f9d58"/><path d="M12 12l10 -5.7A11.5 11.5 0 0 1 6.2 22z" fill="#ffcd40"/><path d="M12 .5a11.5 11.5 0 0 1 10 5.8H12z" fill="#db4437"/><circle cx="12" cy="12" r="5.3" fill="#fff"/><circle cx="12" cy="12" r="4.2" fill="#4285f4"/></svg><svg class="a" style="left:1049.0px;top:1419.0px;" width="15" height="15" viewBox="0 0 15 15"><circle cx="7.5" cy="7.5" r="7.3" fill="#c2185b"/><text x="7.5" y="11.5" font-size="10" text-anchor="middle" font-family="Liberation Sans" fill="#fff">S</text></svg><div class="a" style="left:1029.0px;top:1437.6px;width:39.8px;height:2.4px;background:#0067c0"></div><svg class="a" style="left:1085.6px;top:1408.0px;" width="24.4" height="24" viewBox="0 0 24.4 24"><circle cx="12" cy="12" r="12" fill="#2b2e3b"/><g fill="none" stroke="#9feaf9" stroke-width="1.1"><ellipse cx="12" cy="12" rx="8.5" ry="3.3"/><ellipse cx="12" cy="12" rx="8.5" ry="3.3" transform="rotate(60 12 12)"/><ellipse cx="12" cy="12" rx="8.5" ry="3.3" transform="rotate(120 12 12)"/></g><circle cx="12" cy="12" r="1.5" fill="#9feaf9"/></svg><div class="a" style="left:1077.8px;top:1437.6px;width:39.8px;height:2.4px;background:#0067c0"></div><svg class="a" style="left:3209.0px;top:1416.0px;" width="12" height="8" viewBox="0 0 12 8"><path d="M1 7l5-5.5L11 7" fill="none" stroke="#222" stroke-width="1.2"/></svg><svg class="a" style="left:3231.0px;top:1412.0px;" width="17" height="16" viewBox="0 0 17 16"><path d="M1 2.5 15.5 1v13L1 12.5z" fill="none" stroke="#222" stroke-width="1.2"/><path d="M5 9.5c.5-2.5 2.5-4 5-4M9 4l1.5 1.5L9 7" fill="none" stroke="#222" stroke-width="1"/><circle cx="12.5" cy="12.5" r="3" fill="#f28c00"/></svg><svg class="a" style="left:3254.7px;top:1412.0px;" width="17" height="16" viewBox="0 0 17 16"><path d="M1 5.5h3.5L9 1.5v13L4.5 10.5H1z" fill="none" stroke="#222" stroke-width="1.2" stroke-linejoin="round"/><path d="M11 5.5c1 1 1 4 0 5M13 3.5c2 2 2 7 0 9M15 1.5c3 3 3 10 0 13" fill="none" stroke="#222" stroke-width="1.1"/></svg><svg class="a" style="left:3280.0px;top:1411.5px;" width="14" height="17" viewBox="0 0 14 17"><path d="M3 1.5h6c1 0 1.7.7 1.7 1.6v2L13 3.5v8L10.7 10v2c0 1-.7 1.6-1.7 1.6H3c-1 0-1.7-.7-1.7-1.6V3.1C1.3 2.2 2 1.5 3 1.5z" fill="none" stroke="#222" stroke-width="1.2"/><path d="M3 16h7" stroke="#222" stroke-width="1"/></svg><svg class="a" style="left:3305.0px;top:1412.0px;" width="15" height="15" viewBox="0 0 15 15"><path d="M1 13A12 12 0 0 1 13 1M3.5 13A9.5 9.5 0 0 1 13 3.5M6 13A7 7 0 0 1 13 6M8.5 13A4.5 4.5 0 0 1 13 8.5" fill="none" stroke="#222" stroke-width="1.1"/><circle cx="13" cy="13" r="1.4" fill="#222"/></svg><div class="a nw" style="left:3331.4px;top:1405.8px;font-size:11.00px;line-height:1;color:#1d1d1d;">12:06 PM</div><div class="a nw" style="left:3329.4px;top:1422.7px;font-size:11.50px;line-height:1;color:#1d1d1d;">8/14/2025</div><svg class="a" style="left:3398.6px;top:1411.5px;" width="18" height="17" viewBox="0 0 18 17"><path d="M1 1h16v11H6l-4 4v-4H1z" fill="#222"/><path d="M4 4.5h10M4 7.5h10" stroke="#cddfe9" stroke-width="1.2"/></svg><div class="a" style="left:3407.0px;top:1419.5px;width:15.0px;height:15.0px;background:#e4e4e4;border:1px solid #8a8a8a;border-radius:50%"></div><div class="a nw" style="left:3411.8px;top:1422.1px;font-size:10.50px;line-height:1;color:#222;font-weight:bold;">1</div><div class="a" style="left:3436.0px;top:1400.3px;width:4.0px;height:39.7px;background:#b8ccd8"></div></body></html>
